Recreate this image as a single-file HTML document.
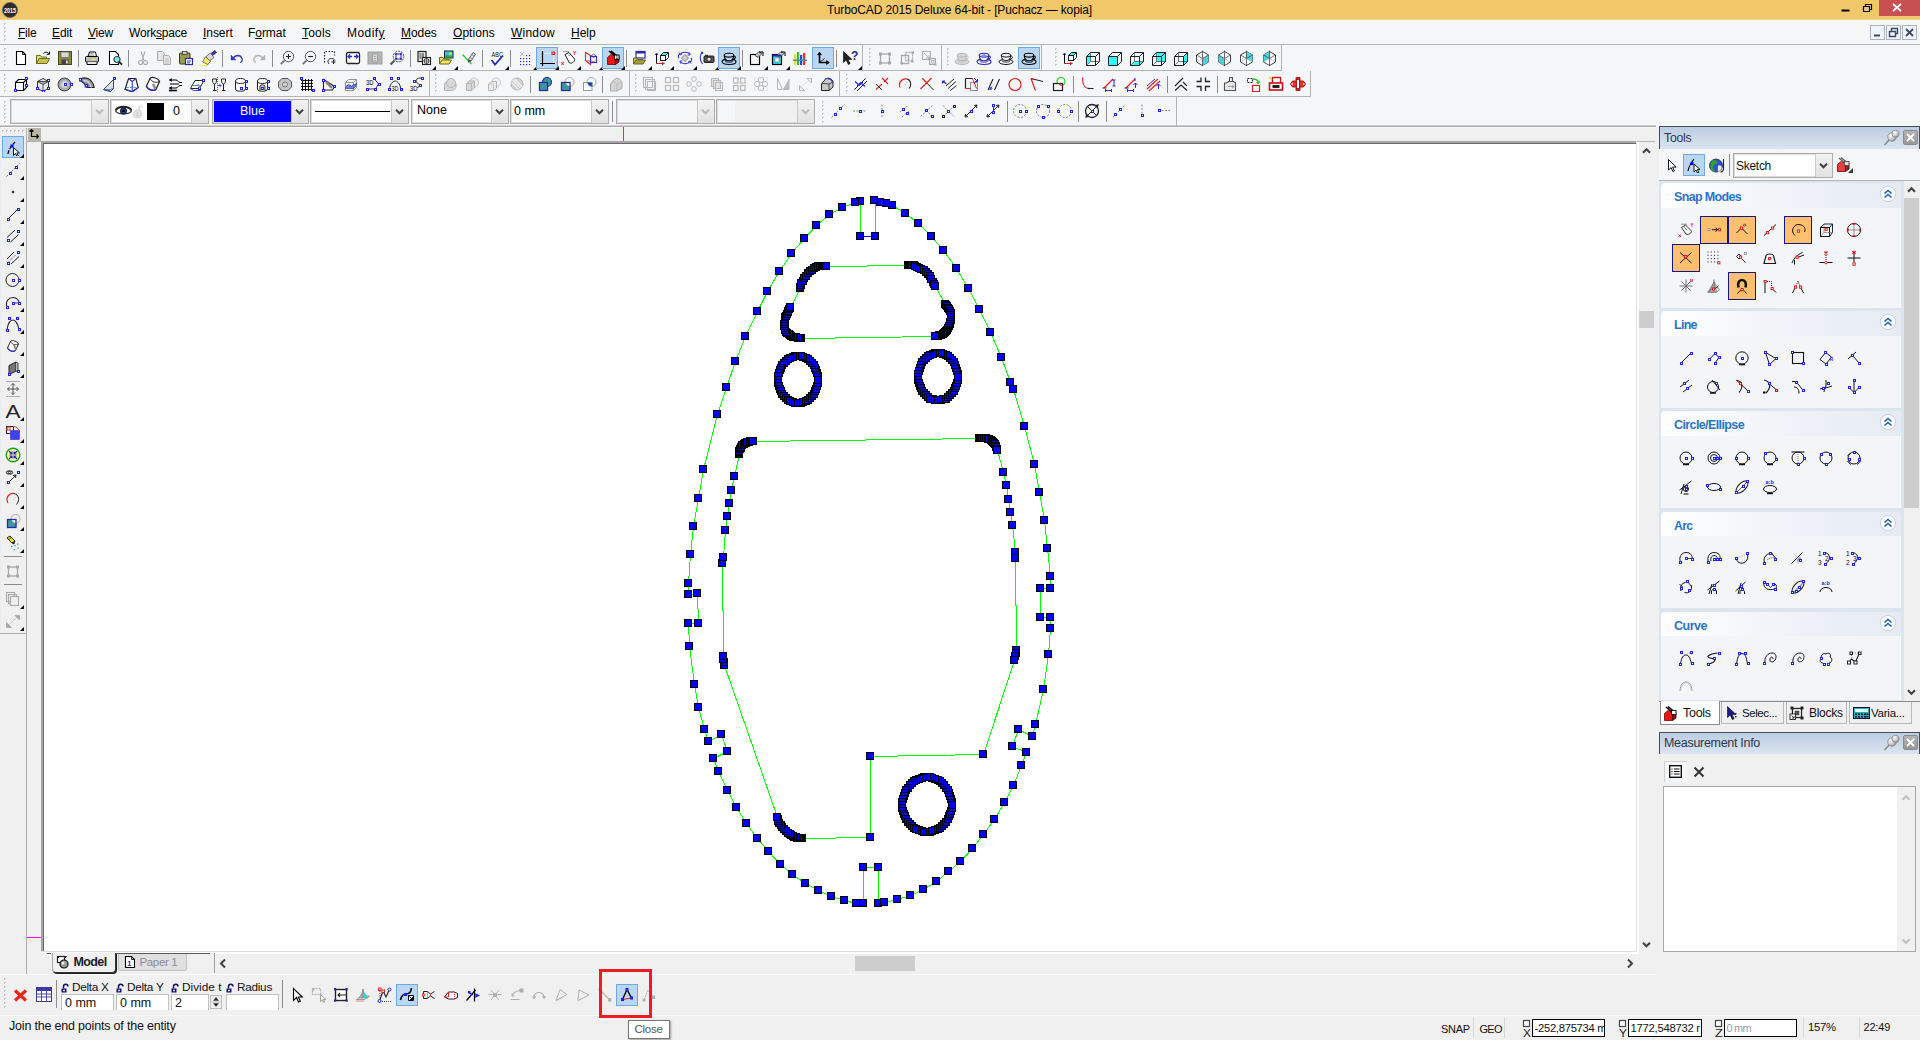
<!DOCTYPE html>
<html><head><meta charset="utf-8"><title>TurboCAD</title>
<style>
html,body{margin:0;padding:0;background:#f0f0f0;overflow:hidden}
body{width:1920px;height:1040px;position:relative;font-family:"Liberation Sans",sans-serif;font-size:12px;color:#000}
#r{position:absolute;left:0;top:0;width:1920px;height:1040px;overflow:hidden}
#r div,#r svg{position:absolute}
.t{line-height:15px}
u{text-decoration:underline}
</style></head><body><div id="r">
<div style="left:0px;top:0px;width:1920px;height:20px;background:#f0c869"></div>
<svg style="left:1px;top:0px" width="18" height="19" viewBox="0 0 18 19" ><circle cx="9" cy="10" r="7.6" fill="#2b2b2b"/><circle cx="9" cy="10" r="7.6" fill="none" stroke="#666" stroke-width=".8"/><text x="9" y="12.5" font-size="6.5" font-weight="bold" fill="#fff" text-anchor="middle" font-family="Liberation Sans" textLength="12" lengthAdjust="spacingAndGlyphs">2015</text></svg>
<div class="t" style="left:827px;top:2.5px;white-space:nowrap;font-size:12px;letter-spacing:-0.128px;color:#000">TurboCAD 2015 Deluxe 64-bit - [Puchacz — kopia]</div>
<div style="left:0px;top:19px;width:1920px;height:1px;background:#f2d48c"></div>
<div style="left:1879px;top:0px;width:41px;height:16px;background:#c75050"></div>
<svg style="left:1836px;top:0px" width="90" height="20" viewBox="0 0 90 20" ><path d="M5.5 10.5h8" stroke="#000" stroke-width="2" fill="none"/><path d="M27.5 6.5h6v5h-6z M29.5 6.5v-2h6v5h-2" stroke="#000" stroke-width="1.2" fill="none"/><path d="M57 4l8 7M65 4l-8 7" stroke="#fff" stroke-width="1.8" fill="none"/></svg>
<div style="left:0px;top:20px;width:1920px;height:25px;background:#f5f6f7"></div>
<div style="left:0px;top:44px;width:1920px;height:1px;background:#b4b4b4"></div>
<div class="t" style="left:18px;top:26px;white-space:nowrap;font-size:12px;letter-spacing:-0.234px;color:#000"><u>F</u>ile</div>
<div class="t" style="left:52px;top:26px;white-space:nowrap;font-size:12px;letter-spacing:-0.094px;color:#000"><u>E</u>dit</div>
<div class="t" style="left:88px;top:26px;white-space:nowrap;font-size:12px;letter-spacing:-0.198px;color:#000"><u>V</u>iew</div>
<div class="t" style="left:129px;top:26px;white-space:nowrap;font-size:12px;letter-spacing:-0.200px;color:#000">Work<u>s</u>pace</div>
<div class="t" style="left:203px;top:26px;white-space:nowrap;font-size:12px;letter-spacing:-0.052px;color:#000"><u>I</u>nsert</div>
<div class="t" style="left:248px;top:26px;white-space:nowrap;font-size:12px;letter-spacing:-0.051px;color:#000">F<u>o</u>rmat</div>
<div class="t" style="left:302px;top:26px;white-space:nowrap;font-size:12px;letter-spacing:0.197px;color:#000"><u>T</u>ools</div>
<div class="t" style="left:347px;top:26px;white-space:nowrap;font-size:12px;letter-spacing:0.443px;color:#000">Modif<u>y</u></div>
<div class="t" style="left:401px;top:26px;white-space:nowrap;font-size:12px;letter-spacing:-0.064px;color:#000"><u>M</u>odes</div>
<div class="t" style="left:453px;top:26px;white-space:nowrap;font-size:12px;letter-spacing:0.049px;color:#000"><u>O</u>ptions</div>
<div class="t" style="left:511px;top:26px;white-space:nowrap;font-size:12px;letter-spacing:0.220px;color:#000"><u>W</u>indow</div>
<div class="t" style="left:571px;top:26px;white-space:nowrap;font-size:12px;letter-spacing:0.005px;color:#000"><u>H</u>elp</div>
<div style="left:1870px;top:25px;width:15px;height:15px;background:#f0f3f8;border:1px solid #a9b4c4;box-sizing:border-box"></div>
<div style="left:1886px;top:25px;width:15px;height:15px;background:#f0f3f8;border:1px solid #a9b4c4;box-sizing:border-box"></div>
<div style="left:1902px;top:25px;width:15px;height:15px;background:#f0f3f8;border:1px solid #a9b4c4;box-sizing:border-box"></div>
<svg style="left:1870px;top:25px" width="48" height="15" viewBox="0 0 48 15" ><path d="M4 10.5h6" stroke="#3a4a60" stroke-width="2"/><path d="M19.5 6.5h6v5h-6z M21.5 6v-2.500h6v5h-2" stroke="#3a4a60" stroke-width="1.4" fill="none"/><path d="M36 4l7 7M43 4l-7 7" stroke="#3a4a60" stroke-width="1.8"/></svg>
<div style="left:0px;top:45px;width:1920px;height:82px;background:#f5f6f7"></div>
<div style="left:0px;top:70px;width:1282px;height:1px;background:#b4b4b4"></div>
<div style="left:0px;top:96px;width:1311px;height:1px;background:#b4b4b4"></div>
<div style="left:0px;top:125px;width:1656px;height:1px;background:#d0d0d0"></div>
<div style="left:0px;top:126px;width:1656px;height:1px;background:#acacac"></div>
<svg style="left:13px;top:50px" width="16" height="16" viewBox="0 0 16 16" ><path d="M3.500 1.500h6l3 3v10h-9z" stroke="#000" fill="#fff" stroke-width="1.1" /><path d="M9.500 1.500v3h3" stroke="#000" fill="none" stroke-width="0.9" /></svg>
<svg style="left:35px;top:50px" width="16" height="16" viewBox="0 0 16 16" ><path d="M1.500 13.500v-8h4l1 1.500h5v2" stroke="#6b6b20" fill="#e8e070" stroke-width="1" /><path d="M1.500 13.500l2.500-5h10.500l-2.500 5z" stroke="#6b6b20" fill="#c8c050" stroke-width="1" /><path d="M8.500 3.500c2-2 4.500-1.500 5.500 .5M14.500 1.500v2.800h-2.800" stroke="#000" fill="none" stroke-width="1" /></svg>
<svg style="left:57px;top:50px" width="16" height="16" viewBox="0 0 16 16" ><rect x="1.5" y="1.5" width="13" height="13" fill="#8b8b3a" stroke="#4a4a10" stroke-width="1" /><rect x="4" y="2" width="8" height="5.5" fill="#d8d8d8" stroke="#555" stroke-width="0.6" /><rect x="4.5" y="9.5" width="7" height="5" fill="#444" stroke="none" stroke-width="1" /><rect x="9" y="10.5" width="1.8" height="3" fill="#ddd" stroke="none" stroke-width="1" /></svg>
<div style="left:78px;top:50px;width:1px;height:17px;background:#8c8c8c"></div>
<svg style="left:84px;top:50px" width="16" height="16" viewBox="0 0 16 16" ><path d="M4 6.500l1.500-4.500h6l1 4.500" stroke="#000" fill="#fff" stroke-width="1" /><rect x="1.5" y="6.5" width="13" height="5.5" fill="#c0c0c0" stroke="#000" stroke-width="1" rx="1"/><path d="M3 12v2.500h10v-2.500" stroke="#000" fill="#e8e8e8" stroke-width="1" /><path d="M5.500 3.800h4M5.200 5.200h5" stroke="#777" fill="none" stroke-width="0.7" /><rect x="8" y="9" width="3" height="1" fill="#ff0" stroke="none" stroke-width="1" /></svg>
<svg style="left:107px;top:50px" width="16" height="16" viewBox="0 0 16 16" ><path d="M2.500 1.500h6l3 3v10h-9z" stroke="#000" fill="#fff" stroke-width="1.1" /><circle cx="10" cy="9.5" r="3" fill="#7fe8f0" stroke="#444" stroke-width="1.2" /><path d="M12.200 11.800l2.800 2.800" stroke="#222" fill="none" stroke-width="1.8" /></svg>
<div style="left:128px;top:50px;width:1px;height:17px;background:#8c8c8c"></div>
<svg style="left:135px;top:50px" width="16" height="16" viewBox="0 0 16 16" ><path d="M6 1.500l3 9M10 1.500l-3 9" stroke="#aaa" fill="none" stroke-width="1.1" /><circle cx="5.5" cy="12.5" r="2" fill="none" stroke="#aaa" stroke-width="1.1" /><circle cx="10.5" cy="12.5" r="2" fill="none" stroke="#aaa" stroke-width="1.1" /></svg>
<svg style="left:156px;top:50px" width="16" height="16" viewBox="0 0 16 16" ><path d="M1.500 1.500h5l2 2v7h-7z" stroke="#b0b0b0" fill="#e4e4e4" stroke-width="1" /><path d="M7.500 5.500h5l2 2v7h-7z" stroke="#b0b0b0" fill="#e4e4e4" stroke-width="1" /><path d="M9 9h4M9 11h4M9 13h4" stroke="#b8b8b8" fill="none" stroke-width="0.8" /></svg>
<svg style="left:178px;top:50px" width="16" height="16" viewBox="0 0 16 16" ><rect x="1.5" y="3" width="10.5" height="11" fill="#9a9a50" stroke="#3a3a10" stroke-width="1" rx="1"/><rect x="4.5" y="1.5" width="4.5" height="3" fill="#d0d0d0" stroke="#333" stroke-width="0.8" /><rect x="7.5" y="8.5" width="7" height="6" fill="#fff" stroke="#2a2ab0" stroke-width="1.2" /><path d="M9 11h4M9 12.800h3" stroke="#2a2ab0" fill="none" stroke-width="0.9" /></svg>
<svg style="left:201px;top:50px" width="16" height="16" viewBox="0 0 16 16" ><path d="M10 3.500l4-3 1.500 2-4 3z" stroke="#1a1a80" fill="#3a3aa0" stroke-width="0.8" /><path d="M5 6.500l4.500-3.500 3.500 4.500-4.500 3.500z" stroke="#555" fill="#ddd" stroke-width="0.8" /><path d="M4.500 7l-3 5 5.500 2.500 2.500-3.500z" stroke="#555" fill="#f8f060" stroke-width="0.8" /><path d="M1 15.500h5" stroke="#ee0" fill="none" stroke-width="1" stroke-dasharray="1 1"/></svg>
<div style="left:222px;top:50px;width:1px;height:17px;background:#8c8c8c"></div>
<svg style="left:229px;top:50px" width="16" height="16" viewBox="0 0 16 16" ><path d="M4 8.500c2.500-4 7.500-4 9 0 .6 2-.5 3.500-2 4" stroke="#3838c8" fill="none" stroke-width="1.3" /><path d="M2 5v5h5z" stroke="#3838c8" fill="#3838c8" stroke-width="0.4" /></svg>
<svg style="left:251px;top:50px" width="16" height="16" viewBox="0 0 16 16" ><path d="M12 8.500c-2.500-4-7.500-4-9 0-.6 2 .5 3.500 2 4" stroke="#b4b4b4" fill="none" stroke-width="1.3" /><path d="M14 5v5h-5z" stroke="#b4b4b4" fill="#b4b4b4" stroke-width="0.4" /></svg>
<div style="left:272px;top:50px;width:1px;height:17px;background:#8c8c8c"></div>
<svg style="left:279px;top:50px" width="16" height="16" viewBox="0 0 16 16" ><circle cx="9.5" cy="6.5" r="5.2" fill="#f5f6f7" stroke="#444" stroke-width="0.9" /><path d="M5.600 10.400l-3.800 3.800" stroke="#777" fill="none" stroke-width="1.9" /><path d="M7 6.500h5M9.500 4v5" stroke="#222" fill="none" stroke-width="1.1" /></svg>
<svg style="left:301px;top:50px" width="16" height="16" viewBox="0 0 16 16" ><circle cx="9.5" cy="6.5" r="5.2" fill="#f5f6f7" stroke="#444" stroke-width="0.9" /><path d="M5.600 10.400l-3.800 3.800" stroke="#777" fill="none" stroke-width="1.9" /><path d="M7 6.500h5" stroke="#222" fill="none" stroke-width="1.1" /></svg>
<svg style="left:323px;top:50px" width="16" height="16" viewBox="0 0 16 16" ><path d="M1.500 12.500v-11h10v4" stroke="#222" fill="none" stroke-width="1.2" stroke-dasharray="1.500 1.500"/><path d="M6 14c-2-2-1-5.500 2.500-5.500 2 0 3 1 3.500 2M10.500 10v4M8.500 12h4" stroke="#222" fill="none" stroke-width="1" /></svg>
<svg style="left:345px;top:50px" width="16" height="16" viewBox="0 0 16 16" ><rect x="1.5" y="2.5" width="13" height="11" fill="#fff" stroke="#222" stroke-width="1.3" rx="1.500"/><path d="M3 6.500h4M9 6.500h4M5 4.500l-2 2 2 2M11 4.500l2 2-2 2" stroke="#2a2ad0" fill="none" stroke-width="1.3" /></svg>
<svg style="left:367px;top:50px" width="16" height="16" viewBox="0 0 16 16" ><rect x="1" y="2" width="14" height="12" fill="#b4b4b4" stroke="#a0a0a0" stroke-width="1" /><rect x="5.5" y="4" width="5" height="8" fill="#d8d8d8" stroke="#999" stroke-width="0.8" /><path d="M7 6.500h2M7 8.500h2M7 10.500h2" stroke="#999" fill="none" stroke-width="0.7" /></svg>
<svg style="left:389px;top:50px" width="16" height="16" viewBox="0 0 16 16" ><circle cx="9.5" cy="6.5" r="5.3" fill="#f5f6f7" stroke="#444" stroke-width="1" stroke-dasharray="2 1"/><path d="M5.500 10.500l-4 4" stroke="#555" fill="none" stroke-width="2.2" /><rect x="7" y="4" width="5" height="5" fill="none" stroke="#3030c0" stroke-width="1.1" /><rect x="6.2" y="3.2" width="1.8" height="1.8" fill="#3030c0" stroke="none" stroke-width="1" /><rect x="11" y="3.2" width="1.8" height="1.8" fill="#3030c0" stroke="none" stroke-width="1" /><rect x="6.2" y="8" width="1.8" height="1.8" fill="#3030c0" stroke="none" stroke-width="1" /><rect x="11" y="8" width="1.8" height="1.8" fill="#3030c0" stroke="none" stroke-width="1" /></svg>
<div style="left:410px;top:50px;width:1px;height:17px;background:#8c8c8c"></div>
<svg style="left:416px;top:50px" width="16" height="16" viewBox="0 0 16 16" ><rect x="2" y="1.5" width="8" height="10" fill="#e8e8e8" stroke="#222" stroke-width="1.2" /><path d="M3.500 4h2M3.500 6h2M3.500 8h2M7 3v7" stroke="#222" fill="none" stroke-width="1" /><rect x="6.5" y="7.5" width="8" height="7" fill="#f0f0f0" stroke="#222" stroke-width="1.1" /><circle cx="10.5" cy="11" r="2.5" fill="none" stroke="#222" stroke-width="0.9" /><path d="M8 11h5M10.500 8.500v5" stroke="#222" fill="none" stroke-width="0.6" /></svg>
<svg style="left:432px;top:66px" width="4" height="4" viewBox="0 0 4 4" ><path d="M4 0v4h-4z" fill="#000"/></svg>
<svg style="left:438px;top:50px" width="16" height="16" viewBox="0 0 16 16" ><rect x="6.5" y="1" width="8.5" height="7" fill="#30c8e8" stroke="#222" stroke-width="1" /><circle cx="12.5" cy="3.5" r="1.2" fill="#f0e040" stroke="none" stroke-width="1" /><path d="M7 7.500l2.500-3 2 2 1.500-1 1.500 2z" stroke="#30a030" fill="#30a030" stroke-width="0.3" /><path d="M1.500 14v-6.500h3.500l1 1.500h5v1" stroke="#6b6b20" fill="#e8e070" stroke-width="1" /><path d="M1.500 14l2.500-4h9.500l-2.500 4z" stroke="#6b6b20" fill="#f0e868" stroke-width="1" /></svg>
<svg style="left:454px;top:66px" width="4" height="4" viewBox="0 0 4 4" ><path d="M4 0v4h-4z" fill="#000"/></svg>
<svg style="left:461px;top:50px" width="16" height="16" viewBox="0 0 16 16" ><path d="M1.500 4.500l9 9.500" stroke="#20d020" fill="none" stroke-width="1.2" /><path d="M7.500 9.500l4.500-7 2.500 1.600-4.500 7z" stroke="#555" fill="#e8e8e8" stroke-width="0.9" /><path d="M9 7.500l2.500 1.600M11 4.500l2.500 1.600" stroke="#666" fill="none" stroke-width="0.7" /><path d="M7.500 9.500l-.3 2.800 2.800-1.200" stroke="#444" fill="#444" stroke-width="0.5" /></svg>
<div style="left:482px;top:50px;width:1px;height:17px;background:#8c8c8c"></div>
<svg style="left:489px;top:50px" width="16" height="16" viewBox="0 0 16 16" ><text x="2.5" y="6.5" font-size="6.5" fill="#111" font-family="Liberation Sans" textLength="11.500" lengthAdjust="spacingAndGlyphs">ABC</text><path d="M2.500 10l3.500 4.500 8-9" stroke="#2a2ab0" fill="none" stroke-width="1.8" /></svg>
<svg style="left:505px;top:66px" width="4" height="4" viewBox="0 0 4 4" ><path d="M4 0v4h-4z" fill="#000"/></svg>
<div style="left:510px;top:50px;width:1px;height:17px;background:#8c8c8c"></div>
<svg style="left:517px;top:50px" width="16" height="16" viewBox="0 0 16 16" ><path d="M3 2l4 4M7 2l-4 4" stroke="#a8b8d8" fill="none" stroke-width="1" /><rect x="3" y="8" width="1.2" height="1.2" fill="#2a2ad0" stroke="none" stroke-width="1" /><rect x="3" y="11" width="1.2" height="1.2" fill="#2a2ad0" stroke="none" stroke-width="1" /><rect x="3" y="14" width="1.2" height="1.2" fill="#2a2ad0" stroke="none" stroke-width="1" /><rect x="6" y="8" width="1.2" height="1.2" fill="#2a2ad0" stroke="none" stroke-width="1" /><rect x="6" y="11" width="1.2" height="1.2" fill="#2a2ad0" stroke="none" stroke-width="1" /><rect x="6" y="14" width="1.2" height="1.2" fill="#2a2ad0" stroke="none" stroke-width="1" /><rect x="9" y="8" width="1.2" height="1.2" fill="#2a2ad0" stroke="none" stroke-width="1" /><rect x="9" y="11" width="1.2" height="1.2" fill="#2a2ad0" stroke="none" stroke-width="1" /><rect x="9" y="14" width="1.2" height="1.2" fill="#2a2ad0" stroke="none" stroke-width="1" /><rect x="12" y="8" width="1.2" height="1.2" fill="#2a2ad0" stroke="none" stroke-width="1" /><rect x="12" y="11" width="1.2" height="1.2" fill="#2a2ad0" stroke="none" stroke-width="1" /><rect x="12" y="14" width="1.2" height="1.2" fill="#2a2ad0" stroke="none" stroke-width="1" /><rect x="9" y="5" width="1.2" height="1.2" fill="#2a2ad0" stroke="none" stroke-width="1" /><rect x="12" y="5" width="1.2" height="1.2" fill="#2a2ad0" stroke="none" stroke-width="1" /></svg>
<svg style="left:533px;top:66px" width="4" height="4" viewBox="0 0 4 4" ><path d="M4 0v4h-4z" fill="#000"/></svg>
<div style="left:536px;top:47px;width:22px;height:22px;background:#b9d7f3;border:1px solid #6ea9e6;box-sizing:border-box"></div>
<svg style="left:539px;top:50px" width="16" height="16" viewBox="0 0 16 16" ><path d="M3.500 1v15M1 13.500h15" stroke="#000" fill="none" stroke-width="1.2" /><path d="M5.500 3.500h7M14.500 5.500v7" stroke="#fff" fill="none" stroke-width="1" stroke-dasharray="1 1"/><rect x="13" y="2" width="2.5" height="2.5" fill="#fff" stroke="#e01010" stroke-width="1" /></svg>
<svg style="left:555px;top:66px" width="4" height="4" viewBox="0 0 4 4" ><path d="M4 0v4h-4z" fill="#000"/></svg>
<svg style="left:561px;top:50px" width="16" height="16" viewBox="0 0 16 16" ><path d="M4 4.500l4-2 5.500 6.500c1 2-2.500 5-5 4z" stroke="#222" fill="#fff" stroke-width="1" /><path d="M2.500 1.500h5.500M6.500 3.500l2.500 3" stroke="#222" fill="none" stroke-width="0.8" stroke-dasharray="1 1"/><text x="12" y="4.5" font-size="5" fill="#e01010" font-family="Liberation Sans" font-weight="bold">Y</text><text x="0" y="15" font-size="6" fill="#e01010" font-family="Liberation Sans" font-weight="bold">x</text></svg>
<svg style="left:577px;top:66px" width="4" height="4" viewBox="0 0 4 4" ><path d="M4 0v4h-4z" fill="#000"/></svg>
<svg style="left:583px;top:50px" width="16" height="16" viewBox="0 0 16 16" ><path d="M2.500 2.500l5 3v9l-5-4z" stroke="#e03030" fill="none" stroke-width="1.1" /><path d="M2.500 2.500l9 5.500M2.500 10.500l9 1" stroke="#e03030" fill="none" stroke-width="0.7" /><rect x="7.5" y="6.5" width="6" height="6" fill="none" stroke="#3030c0" stroke-width="1.2" /><path d="M7.500 6.500l3-2.500M13.500 6.500l-3-2.500" stroke="#3030c0" fill="none" stroke-width="0.8" /></svg>
<svg style="left:599px;top:66px" width="4" height="4" viewBox="0 0 4 4" ><path d="M4 0v4h-4z" fill="#000"/></svg>
<div style="left:602px;top:47px;width:22px;height:22px;background:#b9d7f3;border:1px solid #6ea9e6;box-sizing:border-box"></div>
<svg style="left:605px;top:50px" width="16" height="16" viewBox="0 0 16 16" ><path d="M2.500 7.500l4-3.500 4 3.500v7h-8z" stroke="#700" fill="#e81818" stroke-width="0.8" /><path d="M10.500 7.500l3.500-2v6.500l-3.500 2.500z" stroke="#400" fill="#901010" stroke-width="0.8" /><path d="M4 1l7 6M6 1l6 5" stroke="#000" fill="none" stroke-width="1.6" /><rect x="9.5" y="5" width="4.5" height="4.5" fill="#fff" stroke="#000" stroke-width="0.9" /><text x="10.6" y="9" font-size="4.5" fill="#000" font-family="Liberation Sans" font-weight="bold">1</text></svg>
<svg style="left:621px;top:66px" width="4" height="4" viewBox="0 0 4 4" ><path d="M4 0v4h-4z" fill="#000"/></svg>
<div style="left:626px;top:50px;width:1px;height:17px;background:#8c8c8c"></div>
<svg style="left:632px;top:50px" width="16" height="16" viewBox="0 0 16 16" ><rect x="4" y="1.5" width="9" height="6.5" fill="#fff" stroke="#2a2ab0" stroke-width="1.2" /><rect x="4" y="1.5" width="9" height="2" fill="#2a2ab0" stroke="none" stroke-width="1" /><path d="M1.500 14v-6h3.500l1 1.500h5" stroke="#6b6b20" fill="#c8c050" stroke-width="1" /><path d="M1.500 14l2.500-4h9.500l-2.500 4z" stroke="#6b6b20" fill="#a8a040" stroke-width="1" /></svg>
<svg style="left:648px;top:66px" width="4" height="4" viewBox="0 0 4 4" ><path d="M4 0v4h-4z" fill="#000"/></svg>
<svg style="left:654px;top:50px" width="16" height="16" viewBox="0 0 16 16" ><path d="M6.500 5.500l3-3h5l-3 3z" stroke="#000" fill="#3ff" stroke-width="0.9" /><path d="M6.500 5.500h5v5h-5zM14.500 2.500v5l-3 3" stroke="#000" fill="#fff" stroke-width="0.9" /><path d="M2.500 3v10.500h8" stroke="#000" fill="none" stroke-width="1" /><path d="M2.500 3l-1.500 2M2.500 3l1.500 2" stroke="#3030d0" fill="none" stroke-width="1" /><path d="M2.500 13.500h7M8 12l2 1.500-2 1.500" stroke="#d02020" fill="none" stroke-width="1" /></svg>
<svg style="left:670px;top:66px" width="4" height="4" viewBox="0 0 4 4" ><path d="M4 0v4h-4z" fill="#000"/></svg>
<svg style="left:677px;top:50px" width="16" height="16" viewBox="0 0 16 16" ><path d="M8 4.500l3.500 3.500-3.500 3.500-3.500-3.500z" stroke="#666" fill="#d0d0d0" stroke-width="0.8" /><path d="M3 4.500c2-3 8-3 10 0M13 11.500c-2 3-8 3-10 0M2 8c-1-1-1-3 1-4M14 8c1 1 1 3-1 4" stroke="#3030e0" fill="none" stroke-width="1.1" /><path d="M2 2.500l1 2.500 2-1M14 13.500l-1-2.500-2 1M12.500 2.500l.5 2.500-2.500 0M3.500 13.500l-.5-2.500 2.500 0" stroke="#3030e0" fill="none" stroke-width="0.9" /></svg>
<svg style="left:693px;top:66px" width="4" height="4" viewBox="0 0 4 4" ><path d="M4 0v4h-4z" fill="#000"/></svg>
<svg style="left:699px;top:50px" width="16" height="16" viewBox="0 0 16 16" ><path d="M3.500 2c-3 3-3 8 0 12M3.500 2l-1.500 .5M3.500 2l.3 1.800" stroke="#3030e0" fill="none" stroke-width="1.1" /><rect x="5" y="6" width="10" height="6.5" fill="#555" stroke="#111" stroke-width="0.9" rx="1"/><circle cx="10" cy="9.2" r="2.2" fill="#ddd" stroke="#111" stroke-width="0.9" /><rect x="6" y="4.8" width="3" height="1.5" fill="#333" stroke="none" stroke-width="1" /></svg>
<svg style="left:715px;top:66px" width="4" height="4" viewBox="0 0 4 4" ><path d="M4 0v4h-4z" fill="#000"/></svg>
<div style="left:718px;top:47px;width:22px;height:22px;background:#b9d7f3;border:1px solid #6ea9e6;box-sizing:border-box"></div>
<svg style="left:721px;top:50px" width="16" height="16" viewBox="0 0 16 16" ><ellipse cx="8" cy="11.8" rx="7" ry="2.7" fill="#b9d7f3" stroke="#000" stroke-width="1.1" /><ellipse cx="8" cy="10.8" rx="4" ry="1.4" fill="#b9d7f3" stroke="#000" stroke-width="0.88" /><path d="M3.300 5.200c0 3 1.500 5.500 4.700 5.500s4.700-2.500 4.700-5.500z" stroke="#000" fill="#b9d7f3" stroke-width="1.1" /><ellipse cx="8" cy="5.2" rx="4.7" ry="1.9" fill="#b9d7f3" stroke="#000" stroke-width="1.1" /><path d="M12.500 6.200c2.600-.6 2.600 2.700-.8 3.200" stroke="#000" fill="none" stroke-width="1.1" /></svg>
<svg style="left:737px;top:66px" width="4" height="4" viewBox="0 0 4 4" ><path d="M4 0v4h-4z" fill="#000"/></svg>
<div style="left:742px;top:50px;width:1px;height:17px;background:#8c8c8c"></div>
<svg style="left:748px;top:50px" width="16" height="16" viewBox="0 0 16 16" ><rect x="2.5" y="4.5" width="9" height="10" fill="#fff" stroke="#000" stroke-width="1.2" /><path d="M7 5.500l4-4 3 2-4 4z" stroke="#333" fill="#aaa" stroke-width="0.8" /><path d="M8 4.500l3 2M9.500 3l3 2" stroke="#fff" fill="none" stroke-width="0.6" /><path d="M11 2h4v4" stroke="#000" fill="none" stroke-width="1" /></svg>
<svg style="left:764px;top:66px" width="4" height="4" viewBox="0 0 4 4" ><path d="M4 0v4h-4z" fill="#000"/></svg>
<svg style="left:770px;top:50px" width="16" height="16" viewBox="0 0 16 16" ><rect x="2.5" y="4.5" width="9" height="10" fill="#30d8e8" stroke="#000" stroke-width="1.2" /><rect x="5" y="8" width="4" height="4" fill="#fff" stroke="#888" stroke-width="0.6" /><path d="M7 5.500l4-4 3 2-4 4z" stroke="#333" fill="#bbb" stroke-width="0.8" /><path d="M8 4.500l3 2M9.500 3l3 2" stroke="#fff" fill="none" stroke-width="0.6" /><path d="M11 2h4v4" stroke="#000" fill="none" stroke-width="1" /><rect x="2.5" y="4.5" width="9" height="2" fill="#2a2ab0" stroke="none" stroke-width="1" /></svg>
<svg style="left:786px;top:66px" width="4" height="4" viewBox="0 0 4 4" ><path d="M4 0v4h-4z" fill="#000"/></svg>
<svg style="left:792px;top:50px" width="16" height="16" viewBox="0 0 16 16" ><rect x="2" y="4" width="2.2" height="11" fill="#e8e030" stroke="none" stroke-width="1" /><rect x="5" y="2" width="2.2" height="13" fill="#30c030" stroke="none" stroke-width="1" /><rect x="8" y="5" width="2.2" height="10" fill="#3040e0" stroke="none" stroke-width="1" /><rect x="11" y="3" width="2.2" height="12" fill="#e83030" stroke="none" stroke-width="1" /><rect x="1" y="9.5" width="14" height="1.5" fill="#30a0a0" stroke="none" stroke-width="1" /></svg>
<div style="left:812px;top:47px;width:22px;height:22px;background:#b9d7f3;border:1px solid #6ea9e6;box-sizing:border-box"></div>
<svg style="left:815px;top:50px" width="16" height="16" viewBox="0 0 16 16" ><path d="M4.500 3v9.500h9" stroke="#000" fill="none" stroke-width="1.6" /><path d="M2.500 5l2-3 2 3zM11.500 10.500l3 2-3 2z" stroke="#000" fill="#000" stroke-width="0.5" /><path d="M4.500 12.500l5-4" stroke="#000" fill="none" stroke-width="0.8" /></svg>
<div style="left:836px;top:50px;width:1px;height:17px;background:#8c8c8c"></div>
<svg style="left:842px;top:50px" width="16" height="16" viewBox="0 0 16 16" ><path d="M1.500 1.500v11l2.800-2.500 2 4.500 1.800-.8-2-4.300h3.800z" stroke="#000" fill="#222" stroke-width="0.6" /><text x="9" y="10" font-size="12" fill="#2a2a90" font-family="Liberation Sans" font-weight="bold">?</text></svg>
<svg style="left:858px;top:66px" width="4" height="4" viewBox="0 0 4 4" ><path d="M4 0v4h-4z" fill="#000"/></svg>
<svg style="left:877px;top:50px" width="16" height="16" viewBox="0 0 16 16" ><rect x="3.5" y="4" width="9" height="9" fill="none" stroke="#a8a8a8" stroke-width="1.3" /><rect x="2" y="2.5" width="3" height="3" fill="#a8a8a8" stroke="none" stroke-width="1" /><rect x="11" y="2.5" width="3" height="3" fill="#a8a8a8" stroke="none" stroke-width="1" /><rect x="2" y="11.5" width="3" height="3" fill="#a8a8a8" stroke="none" stroke-width="1" /><rect x="11" y="11.5" width="3" height="3" fill="#a8a8a8" stroke="none" stroke-width="1" /></svg>
<svg style="left:899px;top:50px" width="16" height="16" viewBox="0 0 16 16" ><rect x="2.5" y="5.5" width="7" height="8" fill="none" stroke="#a8a8a8" stroke-width="1.3" /><rect x="6.5" y="2.5" width="7" height="8" fill="none" stroke="#a8a8a8" stroke-width="1.3" stroke-dasharray="2 1"/><rect x="1.5" y="12" width="2.5" height="2.5" fill="#a8a8a8" stroke="none" stroke-width="1" /><rect x="12.5" y="1.5" width="2.5" height="2.5" fill="#a8a8a8" stroke="none" stroke-width="1" /><rect x="12" y="10" width="2.5" height="2.5" fill="#a8a8a8" stroke="none" stroke-width="1" /></svg>
<svg style="left:921px;top:50px" width="16" height="16" viewBox="0 0 16 16" ><rect x="1.5" y="1.5" width="8" height="8" fill="none" stroke="#b0b0b0" stroke-width="1.1" /><path d="M3 3l5 5M8 5v3h-3" stroke="#b0b0b0" fill="none" stroke-width="1" /><rect x="8.5" y="8.5" width="6" height="6" fill="none" stroke="#a8a8a8" stroke-width="1.1" /><rect x="7.5" y="7.5" width="2" height="2" fill="#a8a8a8" stroke="none" stroke-width="1" /><rect x="13.5" y="13.5" width="2" height="2" fill="#a8a8a8" stroke="none" stroke-width="1" /><rect x="10.5" y="10.5" width="2.5" height="2.5" fill="none" stroke="#a8a8a8" stroke-width="0.8" /></svg>
<svg style="left:954px;top:50px" width="16" height="16" viewBox="0 0 16 16" ><ellipse cx="8" cy="11.8" rx="7" ry="2.7" fill="#d8d8d8" stroke="#b8b8b8" stroke-width="1" /><ellipse cx="8" cy="10.8" rx="4" ry="1.4" fill="#d8d8d8" stroke="#b8b8b8" stroke-width="0.8" /><path d="M3.300 5.200c0 3 1.500 5.500 4.700 5.500s4.700-2.500 4.700-5.500z" stroke="#b8b8b8" fill="#d8d8d8" stroke-width="1" /><ellipse cx="8" cy="5.2" rx="4.7" ry="1.9" fill="#d8d8d8" stroke="#b8b8b8" stroke-width="1" /><path d="M12.500 6.200c2.600-.6 2.600 2.700-.8 3.200" stroke="#b8b8b8" fill="none" stroke-width="1" /></svg>
<svg style="left:976px;top:50px" width="16" height="16" viewBox="0 0 16 16" ><ellipse cx="8" cy="11.8" rx="7" ry="2.7" fill="#f5f6f7" stroke="#2a2ab0" stroke-width="1.1" /><ellipse cx="8" cy="10.8" rx="4" ry="1.4" fill="#f5f6f7" stroke="#2a2ab0" stroke-width="0.88" /><path d="M3.300 5.200c0 3 1.500 5.500 4.700 5.500s4.700-2.500 4.700-5.500z" stroke="#2a2ab0" fill="#f5f6f7" stroke-width="1.1" /><ellipse cx="8" cy="5.2" rx="4.7" ry="1.9" fill="#f5f6f7" stroke="#2a2ab0" stroke-width="1.1" /><path d="M12.500 6.200c2.600-.6 2.600 2.700-.8 3.200" stroke="#2a2ab0" fill="none" stroke-width="1.1" /><ellipse cx="8" cy="5.2" rx="3" ry="0.9" fill="#9090e8" stroke="none" stroke-width="1" /></svg>
<svg style="left:998px;top:50px" width="16" height="16" viewBox="0 0 16 16" ><ellipse cx="8" cy="11.8" rx="7" ry="2.7" fill="#f5f6f7" stroke="#000" stroke-width="0.9" /><ellipse cx="8" cy="10.8" rx="4" ry="1.4" fill="#f5f6f7" stroke="#000" stroke-width="0.72" /><path d="M3.300 5.200c0 3 1.500 5.500 4.700 5.500s4.700-2.500 4.700-5.500z" stroke="#000" fill="#f5f6f7" stroke-width="0.9" /><ellipse cx="8" cy="5.2" rx="4.7" ry="1.9" fill="#f5f6f7" stroke="#000" stroke-width="0.9" /><path d="M12.500 6.200c2.600-.6 2.600 2.700-.8 3.200" stroke="#000" fill="none" stroke-width="0.9" /></svg>
<div style="left:1018px;top:47px;width:22px;height:22px;background:#b9d7f3;border:1px solid #6ea9e6;box-sizing:border-box"></div>
<svg style="left:1021px;top:50px" width="16" height="16" viewBox="0 0 16 16" ><ellipse cx="8" cy="11.8" rx="7" ry="2.7" fill="#b9d7f3" stroke="#000" stroke-width="1.1" /><ellipse cx="8" cy="10.8" rx="4" ry="1.4" fill="#b9d7f3" stroke="#000" stroke-width="0.88" /><path d="M3.300 5.200c0 3 1.500 5.500 4.700 5.500s4.700-2.500 4.700-5.500z" stroke="#000" fill="#b9d7f3" stroke-width="1.1" /><ellipse cx="8" cy="5.2" rx="4.7" ry="1.9" fill="#b9d7f3" stroke="#000" stroke-width="1.1" /><path d="M12.500 6.200c2.600-.6 2.600 2.700-.8 3.200" stroke="#000" fill="none" stroke-width="1.1" /></svg>
<svg style="left:1062px;top:50px" width="16" height="16" viewBox="0 0 16 16" ><path d="M6.500 5.500l3-3h5l-3 3z" stroke="#000" fill="#3ff" stroke-width="0.9" /><path d="M6.500 5.500h5v5h-5zM14.500 2.500v5l-3 3" stroke="#000" fill="#fff" stroke-width="0.9" /><path d="M2.500 3v10.500h8" stroke="#000" fill="none" stroke-width="1" /><path d="M2.500 3l-1.500 2M2.500 3l1.500 2" stroke="#3030d0" fill="none" stroke-width="1" /><path d="M2.500 13.500h7M8 12l2 1.500-2 1.500" stroke="#d02020" fill="none" stroke-width="1" /></svg>
<svg style="left:1084px;top:50px" width="16" height="16" viewBox="0 0 16 16" ><path d="M2.500 6.500l4-4v9l-4 4z" stroke="none" fill="#3ff" stroke-width="1" /><path d="M6.500 2.500v9h9M6.500 11.500l-4 4" stroke="#444" fill="none" stroke-width="0.7" /><path d="M2.500 6.500h9v9h-9zM2.500 6.500l4-4h9l-4 4M15.500 2.500v9l-4 4" stroke="#222" fill="none" stroke-width="1" /></svg>
<svg style="left:1106px;top:50px" width="16" height="16" viewBox="0 0 16 16" ><path d="M2.500 6.500h9v9h-9z" stroke="none" fill="#3ff" stroke-width="1" /><path d="M2.500 6.500h9v9h-9zM2.500 6.500l4-4h9l-4 4M15.500 2.500v9l-4 4" stroke="#222" fill="none" stroke-width="1" /></svg>
<svg style="left:1128px;top:50px" width="16" height="16" viewBox="0 0 16 16" ><path d="M2.500 15.500l4-4h9l-4 4z" stroke="none" fill="#3ff" stroke-width="1" /><path d="M6.500 2.500v9h9M6.500 11.500l-4 4" stroke="#444" fill="none" stroke-width="0.7" /><path d="M2.500 6.500h9v9h-9zM2.500 6.500l4-4h9l-4 4M15.500 2.500v9l-4 4" stroke="#222" fill="none" stroke-width="1" /></svg>
<svg style="left:1150px;top:50px" width="16" height="16" viewBox="0 0 16 16" ><path d="M6.500 2.500h9v9h-9z" stroke="none" fill="#3ff" stroke-width="1" /><path d="M6.500 2.500v9h9M6.500 11.500l-4 4" stroke="#444" fill="none" stroke-width="0.7" /><path d="M2.500 6.500h9v9h-9zM2.500 6.500l4-4h9l-4 4M15.500 2.500v9l-4 4" stroke="#222" fill="none" stroke-width="1" /></svg>
<svg style="left:1172px;top:50px" width="16" height="16" viewBox="0 0 16 16" ><path d="M11.500 6.500l4-4v9l-4 4z" stroke="none" fill="#3ff" stroke-width="1" /><path d="M6.500 2.500v9h9M6.500 11.500l-4 4" stroke="#444" fill="none" stroke-width="0.7" /><path d="M2.500 6.500h9v9h-9zM2.500 6.500l4-4h9l-4 4M15.500 2.500v9l-4 4" stroke="#222" fill="none" stroke-width="1" /></svg>
<svg style="left:1194px;top:50px" width="16" height="16" viewBox="0 0 16 16" ><path d="M8.500 1.500l6 3.500v7l-6 3.500-6-3.500v-7z" stroke="#333" fill="#fff" stroke-width="0.9" /><path d="M8.500 8.500l6-3.500v7l-6 3.500z" stroke="none" fill="#4cd4dc" stroke-width="1" /><path d="M8.500 0.500v15.500M2.500 5l6 3.500 6-3.500" stroke="#333" fill="none" stroke-width="0.7" /><path d="M2.500 12l6-3.500 6 3.500" stroke="#999" fill="none" stroke-width="0.5" /></svg>
<svg style="left:1216px;top:50px" width="16" height="16" viewBox="0 0 16 16" ><path d="M8.500 1.500l6 3.500v7l-6 3.500-6-3.500v-7z" stroke="#333" fill="#fff" stroke-width="0.9" /><path d="M8.500 8.500l-6-3.500v7l6 3.500z" stroke="none" fill="#4cd4dc" stroke-width="1" /><path d="M8.500 0.500v15.500M2.500 5l6 3.500 6-3.500" stroke="#333" fill="none" stroke-width="0.7" /><path d="M2.500 12l6-3.500 6 3.500" stroke="#999" fill="none" stroke-width="0.5" /></svg>
<svg style="left:1238px;top:50px" width="16" height="16" viewBox="0 0 16 16" ><path d="M8.500 1.500l6 3.500v7l-6 3.500-6-3.500v-7z" stroke="#333" fill="#fff" stroke-width="0.9" /><path d="M8.500 1.500l6 3.500v7l-6-3.500z" stroke="none" fill="#4cd4dc" stroke-width="1" /><path d="M8.500 0.500v15.500M2.500 5l6 3.500 6-3.500" stroke="#333" fill="none" stroke-width="0.7" /><path d="M2.500 12l6-3.500 6 3.500" stroke="#999" fill="none" stroke-width="0.5" /></svg>
<svg style="left:1261px;top:50px" width="16" height="16" viewBox="0 0 16 16" ><path d="M8.500 1.500l6 3.500v7l-6 3.500-6-3.500v-7z" stroke="#333" fill="#fff" stroke-width="0.9" /><path d="M8.500 1.500l-6 3.500v7l6-3.500z" stroke="none" fill="#4cd4dc" stroke-width="1" /><path d="M8.500 0.500v15.500M2.500 5l6 3.500 6-3.500" stroke="#333" fill="none" stroke-width="0.7" /><path d="M2.500 12l6-3.500 6 3.500" stroke="#999" fill="none" stroke-width="0.5" /></svg>
<div style="left:862px;top:45px;width:1px;height:26px;background:#b4b4b4"></div>
<div style="left:941px;top:45px;width:1px;height:26px;background:#b4b4b4"></div>
<div style="left:1041px;top:45px;width:1px;height:26px;background:#b4b4b4"></div>
<div style="left:1281px;top:45px;width:1px;height:26px;background:#b4b4b4"></div>
<svg style="left:13px;top:76px" width="16" height="16" viewBox="0 0 16 16" ><path d="M2.500 6.500h8v8h-8zM2.500 6.500l3-3h8l-3 3M13.500 3.500v8l-3 3" stroke="#000" fill="#fff" stroke-width="1.1" /><rect x="12.5" y="1.5" width="2" height="2" fill="#fff" stroke="#1f1fff" stroke-width="1" /><rect x="12.5" y="8.5" width="2" height="2" fill="#fff" stroke="#1f1fff" stroke-width="1" /><rect x="1.5" y="13.5" width="2" height="2" fill="#fff" stroke="#1f1fff" stroke-width="1" /></svg>
<svg style="left:35px;top:76px" width="16" height="16" viewBox="0 0 16 16" ><path d="M2.500 5.500l5.500-3 5.500 3v7l-5.500 3-5.500-3z" stroke="#333" fill="#e8e8e8" stroke-width="1" /><path d="M2.500 5.500l5.500 3 5.500-3z" stroke="#333" fill="#aaa" stroke-width="0.8" /><path d="M8 8.500v7" stroke="#333" fill="none" stroke-width="0.8" /><rect x="12.5" y="3.5" width="2" height="2" fill="#fff" stroke="#1f1fff" stroke-width="1" /><rect x="1.5" y="11.5" width="2" height="2" fill="#fff" stroke="#1f1fff" stroke-width="1" /><rect x="12.5" y="11.5" width="2" height="2" fill="#fff" stroke="#1f1fff" stroke-width="1" /><rect x="7.5" y="14.5" width="2" height="2" fill="#fff" stroke="#1f1fff" stroke-width="1" /></svg>
<svg style="left:57px;top:76px" width="16" height="16" viewBox="0 0 16 16" ><defs><radialGradient id="gd"><stop offset="0" stop-color="#fff"/><stop offset="1" stop-color="#888"/></radialGradient></defs><circle cx="7.5" cy="8.5" r="6.5" fill="url(#gd)" stroke="#444" stroke-width="1" /><rect x="7.5" y="7.5" width="2" height="2" fill="#fff" stroke="#1f1fff" stroke-width="1" /><rect x="13.5" y="7.5" width="2" height="2" fill="#fff" stroke="#1f1fff" stroke-width="1" /></svg>
<svg style="left:79px;top:76px" width="16" height="16" viewBox="0 0 16 16" ><g transform="translate(8 8.5) scale(1.2) translate(-8 -8.5)"><path d="M1.500 5c4-4 11-2 12.500 6l-6 0c-2-4-4-5-6.500-6z" stroke="#222" fill="#999" stroke-width="1" /><path d="M5 5c3 0 6 2 6.500 6" stroke="#ddd" fill="none" stroke-width="1" /><rect x="1.5" y="3.5" width="2" height="2" fill="#fff" stroke="#1f1fff" stroke-width="1" /><rect x="6.5" y="8.5" width="2" height="2" fill="#fff" stroke="#1f1fff" stroke-width="1" /></g></svg>
<svg style="left:101px;top:76px" width="16" height="16" viewBox="0 0 16 16" ><path d="M2.500 13.500l10-10v9l-3 3z" stroke="#444" fill="#e0e0e0" stroke-width="1" /><path d="M2.500 13.500h7l3-1.500" stroke="#30a0a0" fill="none" stroke-width="1" /><path d="M2.500 13.500l7 2 3-3" stroke="#3030e0" fill="none" stroke-width="0.9" /><rect x="12.5" y="1.5" width="2" height="2" fill="#fff" stroke="#1f1fff" stroke-width="1" /></svg>
<svg style="left:123px;top:76px" width="16" height="16" viewBox="0 0 16 16" ><g transform="translate(8 8.5) scale(1.2) translate(-8 -8.5)"><path d="M3 12.500l3-9h6l2 7.500-5 3.500z" stroke="#222" fill="#fff" stroke-width="1" /><path d="M6 3.500l3 2.500 3-2.500M9 6v8.500" stroke="#3030e0" fill="none" stroke-width="0.9" /><path d="M3 12.500l6 2 5-3.500" stroke="#3030e0" fill="none" stroke-width="0.9" /><path d="M4 11h9" stroke="#30a0a0" fill="none" stroke-width="0.8" stroke-dasharray="2 1"/></g></svg>
<svg style="left:145px;top:76px" width="16" height="16" viewBox="0 0 16 16" ><g transform="translate(8 8.5) scale(1.2) translate(-8 -8.5)"><path d="M2.500 10l3-6.500c2-2 7 0 8 2.500l-3 6.500c-2 2-7 0-8-2.500z" stroke="#222" fill="#fff" stroke-width="1" /><path d="M5.500 3.500c1.500 3 5 4 8 2.500" stroke="#222" fill="none" stroke-width="0.8" /><path d="M2.500 10c2 3 5 4 8 2.500" stroke="#3030e0" fill="none" stroke-width="1.2" /><path d="M8 8l2 4" stroke="#888" fill="#ccc" stroke-width="2" /></g></svg>
<svg style="left:167px;top:76px" width="16" height="16" viewBox="0 0 16 16" ><path d="M3 4h6c2 0 2 2.500 4 2.500h2M3 8h9M3 12h6c2 0 2-2.500 4-2.500h2" stroke="#000" fill="none" stroke-width="1" /><path d="M4.500 2.500l-2.500 1.500 2.500 1.500zM4.500 10.500l-2.500 1.500 2.500 1.500z" stroke="#000" fill="#000" stroke-width="0.4" /><path d="M2 14.500h8" stroke="#000" fill="none" stroke-width="1.6" /></svg>
<svg style="left:189px;top:76px" width="16" height="16" viewBox="0 0 16 16" ><path d="M1.500 12.500l4.500-8h9l-4.500 8z" stroke="#222" fill="#fff" stroke-width="1" /><path d="M4 9.500h8" stroke="#30a0a0" fill="none" stroke-width="1" /><path d="M1.500 12.500l3 2h7l-1-2" stroke="#3030e0" fill="none" stroke-width="0.9" /><rect x="13.5" y="3.5" width="2" height="2" fill="#fff" stroke="#1f1fff" stroke-width="1" /><rect x="9.5" y="11.5" width="2" height="2" fill="#fff" stroke="#1f1fff" stroke-width="1" /><path d="M9 8l2 4" stroke="#999" fill="none" stroke-width="1.5" /></svg>
<svg style="left:211px;top:76px" width="16" height="16" viewBox="0 0 16 16" ><path d="M1.500 3h4c0 3-.5 5-2 5s-2-2-2-5zM3.500 8v6M2 14.500h3.500" stroke="#222" fill="#fff" stroke-width="1" /><path d="M10.500 3h4c0 3-.5 5-2 5s-2-2-2-5zM12.500 8v6M11 14.500h3.500" stroke="#222" fill="#fff" stroke-width="1" /><path d="M6.500 1v15" stroke="#f02020" fill="none" stroke-width="1" stroke-dasharray="1 1"/><path d="M7 9.500h3M8.500 8l1.500 1.500-1.500 1.500" stroke="#3030e0" fill="none" stroke-width="0.9" /></svg>
<svg style="left:233px;top:76px" width="16" height="16" viewBox="0 0 16 16" ><path d="M2.500 5v8c0 3 10 3 10 0v-8" stroke="#222" fill="#fff" stroke-width="1" /><ellipse cx="7.5" cy="5" rx="5" ry="2.5" fill="#fff" stroke="#222" stroke-width="1" /><rect x="12.5" y="4.5" width="2" height="2" fill="#fff" stroke="#1f1fff" stroke-width="1" /><rect x="7.5" y="11.5" width="2" height="2" fill="#fff" stroke="#1f1fff" stroke-width="1" /><rect x="12.5" y="11.5" width="2" height="2" fill="#fff" stroke="#1f1fff" stroke-width="1" /></svg>
<svg style="left:255px;top:76px" width="16" height="16" viewBox="0 0 16 16" ><path d="M2.500 5v8c0 3 10 3 10 0v-8" stroke="#222" fill="#fff" stroke-width="1" /><ellipse cx="7.5" cy="5" rx="5" ry="2.5" fill="#fff" stroke="#222" stroke-width="1" /><path d="M5 15v-5c0-1.500 5-1.500 5 0v5" stroke="#222" fill="#ccc" stroke-width="0.9" /><rect x="12.5" y="4.5" width="2" height="2" fill="#fff" stroke="#1f1fff" stroke-width="1" /><rect x="6.5" y="11.5" width="2" height="2" fill="#fff" stroke="#1f1fff" stroke-width="1" /><rect x="12.5" y="11.5" width="2" height="2" fill="#fff" stroke="#1f1fff" stroke-width="1" /></svg>
<svg style="left:277px;top:76px" width="16" height="16" viewBox="0 0 16 16" ><path d="M5 2.500h6l3.500 3.500v5l-3.500 3.500h-6l-3.500-3.500v-5z" stroke="#555" fill="#c4c4c4" stroke-width="1" /><circle cx="8" cy="8.5" r="2.5" fill="#eee" stroke="#666" stroke-width="0.9" /><circle cx="8" cy="8.5" r="1" fill="#fff" stroke="#888" stroke-width="0.6" /></svg>
<svg style="left:299px;top:76px" width="16" height="16" viewBox="0 0 16 16" ><path d="M3.500 3v12M6.500 3v12M9.500 3v12M12.500 3v12M2 4.500h12M2 7.500h12M2 10.500h12M2 13.500h12" stroke="#111" fill="none" stroke-width="1" shape-rendering="crispEdges"/><rect x="1.5" y="1.5" width="2" height="2" fill="#fff" stroke="#1f1fff" stroke-width="1" /><rect x="13.5" y="13.5" width="2" height="2" fill="#fff" stroke="#1f1fff" stroke-width="1" /></svg>
<svg style="left:321px;top:76px" width="16" height="16" viewBox="0 0 16 16" ><path d="M2.500 3.500l11 7-2 3.500h-9z" stroke="#222" fill="#fff" stroke-width="1.1" /><path d="M5 6l6 6" stroke="#888" fill="#bbb" stroke-width="2.5" /><rect x="1.5" y="3.5" width="2" height="2" fill="#fff" stroke="#1f1fff" stroke-width="1" /><rect x="12.5" y="9.5" width="2" height="2" fill="#fff" stroke="#1f1fff" stroke-width="1" /><rect x="1.5" y="13.5" width="2" height="2" fill="#fff" stroke="#1f1fff" stroke-width="1" /></svg>
<svg style="left:343px;top:76px" width="16" height="16" viewBox="0 0 16 16" ><path d="M2.500 6.500h8v8h-8zM2.500 6.500l3-3h8l-3 3M13.500 3.500v8l-3 3" stroke="#888" fill="none" stroke-width="0.9" /><path d="M2.500 11l3-2.500 3 1.500 5-2.500v2l-3 3h-8z" stroke="#3030c0" fill="#6080e0" stroke-width="0.7" /></svg>
<svg style="left:365px;top:76px" width="16" height="16" viewBox="0 0 16 16" ><text x="1" y="8.5" font-size="7.5" fill="#000" font-family="Liberation Sans" textLength="7.500" lengthAdjust="spacingAndGlyphs">3D</text><path d="M9.500 3l4 5-3 5h-7" stroke="#222" fill="none" stroke-width="0.9" /><rect x="8.5" y="1.5" width="2" height="2" fill="#fff" stroke="#1f1fff" stroke-width="1" /><rect x="13.5" y="7.5" width="2" height="2" fill="#fff" stroke="#1f1fff" stroke-width="1" /><rect x="9.5" y="12.5" width="2" height="2" fill="#fff" stroke="#1f1fff" stroke-width="1" /><rect x="1.5" y="12.5" width="2" height="2" fill="#fff" stroke="#1f1fff" stroke-width="1" /></svg>
<svg style="left:387px;top:76px" width="16" height="16" viewBox="0 0 16 16" ><path d="M2.500 13c1-9 9-12 11.500 0" stroke="#222" fill="none" stroke-width="1" /><text x="4.5" y="14.5" font-size="7" fill="#000" font-family="Liberation Sans" textLength="7" lengthAdjust="spacingAndGlyphs">3D</text><rect x="3.5" y="1.5" width="2" height="2" fill="#fff" stroke="#1f1fff" stroke-width="1" /><rect x="10.5" y="1.5" width="2" height="2" fill="#fff" stroke="#1f1fff" stroke-width="1" /><rect x="1.5" y="12.5" width="2" height="2" fill="#fff" stroke="#1f1fff" stroke-width="1" /><rect x="13.5" y="12.5" width="2" height="2" fill="#fff" stroke="#1f1fff" stroke-width="1" /></svg>
<svg style="left:409px;top:76px" width="16" height="16" viewBox="0 0 16 16" ><text x="1" y="14.5" font-size="7.5" fill="#000" font-family="Liberation Sans" textLength="7.500" lengthAdjust="spacingAndGlyphs">3D</text><path d="M13 2.500c-5-2-8 3-4 5 3 1.500 1 4-1 4" stroke="#222" fill="none" stroke-width="1" /><rect x="12.5" y="1.5" width="2" height="2" fill="#fff" stroke="#1f1fff" stroke-width="1" /><rect x="4.5" y="4.5" width="2" height="2" fill="#fff" stroke="#1f1fff" stroke-width="1" /><rect x="10.5" y="8.5" width="2" height="2" fill="#fff" stroke="#1f1fff" stroke-width="1" /></svg>
<svg style="left:442px;top:76px" width="16" height="16" viewBox="0 0 16 16" ><path d="M2.500 7.500l3-3h5l3.500 3v4l-3 3h-8.500z" stroke="#b4b4b4" fill="#d8d8d8" stroke-width="1" /><circle cx="9" cy="7" r="4.5" fill="#d8d8d8" stroke="#b8b8b8" stroke-width="1" /></svg>
<svg style="left:464px;top:76px" width="16" height="16" viewBox="0 0 16 16" ><circle cx="10" cy="6.5" r="4.5" fill="#eee" stroke="#c4c4c4" stroke-width="1" /><path d="M2.500 7.500l3-2.500h5v7l-3 2.500h-5z" stroke="#b4b4b4" fill="#d8d8d8" stroke-width="1" /><path d="M2.500 7.500h5v7M7.500 7.500l3-2.500" stroke="#b4b4b4" fill="none" stroke-width="0.9" /></svg>
<svg style="left:486px;top:76px" width="16" height="16" viewBox="0 0 16 16" ><circle cx="10" cy="6.5" r="4.5" fill="#f0f0f0" stroke="#ccc" stroke-width="1" /><path d="M2.500 8l3-2.500h5v6.500l-3 2.500h-5z" stroke="#b4b4b4" fill="#ececec" stroke-width="1" /><path d="M2.500 8h5v6.500" stroke="#c0c0c0" fill="none" stroke-width="0.9" /></svg>
<svg style="left:509px;top:76px" width="16" height="16" viewBox="0 0 16 16" ><circle cx="8" cy="8" r="6" fill="#d0d0d0" stroke="#b4b4b4" stroke-width="1" /><path d="M3.500 4l8 8M5.500 3l8 8M2.500 6.500l7 7" stroke="#f4f4f4" fill="none" stroke-width="1.1" /></svg>
<div style="left:530px;top:76px;width:1px;height:17px;background:#8c8c8c"></div>
<svg style="left:537px;top:76px" width="16" height="16" viewBox="0 0 16 16" ><circle cx="10" cy="6" r="4.5" fill="#3a9a9a" stroke="#2a2ab0" stroke-width="1.2" /><rect x="2.5" y="6.5" width="8" height="8" fill="#3a9a9a" stroke="#2a2ab0" stroke-width="1.3" /><path d="M6 6.500h4.500v4" stroke="#2a2ab0" fill="none" stroke-width="1" /></svg>
<svg style="left:559px;top:76px" width="16" height="16" viewBox="0 0 16 16" ><circle cx="10.5" cy="6" r="4.5" fill="#f5f6f7" stroke="#aaa" stroke-width="1" /><path d="M2.500 6.500h4c0 2 2 4 4.500 4v4h-8.500z" stroke="#3a9a9a" fill="#3a9a9a" stroke-width="0.5" /><rect x="2.5" y="6.5" width="8.5" height="8" fill="none" stroke="#2a2ab0" stroke-width="1.3" /></svg>
<svg style="left:581px;top:76px" width="16" height="16" viewBox="0 0 16 16" ><circle cx="10.5" cy="6" r="4.5" fill="#f5f6f7" stroke="#aaa" stroke-width="1" /><rect x="2.5" y="6.5" width="8.5" height="8" fill="#fff" stroke="#999" stroke-width="1" /><path d="M6.500 6.500h4.500v4c-2.500 0-4.500-2-4.500-4z" stroke="#3a9a9a" fill="#2a2ab0" stroke-width="0.8" /></svg>
<div style="left:602px;top:76px;width:1px;height:17px;background:#8c8c8c"></div>
<svg style="left:608px;top:76px" width="16" height="16" viewBox="0 0 16 16" ><path d="M2.500 8l3-4 3-2 3 1 2.500 3v6l-5 3h-6.500z" stroke="#aaa" fill="#d4d4d4" stroke-width="1" /><path d="M2.500 8l3-3 3.500 3.500v6.500M9 8.500l5-3" stroke="#b8b8b8" fill="none" stroke-width="0.9" /></svg>
<svg style="left:642px;top:76px" width="16" height="16" viewBox="0 0 16 16" ><rect x="1.5" y="1.5" width="9" height="10" fill="none" stroke="#b8b8b8" stroke-width="1.1" /><rect x="3.5" y="3.5" width="9" height="10" fill="none" stroke="#b8b8b8" stroke-width="1.1" /><rect x="5.5" y="5.5" width="8" height="9" fill="none" stroke="#b8b8b8" stroke-width="1.1" /></svg>
<svg style="left:664px;top:76px" width="16" height="16" viewBox="0 0 16 16" ><rect x="1.5" y="1.5" width="5" height="5" fill="none" stroke="#b8b8b8" stroke-width="1.2" /><rect x="1.5" y="9.5" width="5" height="5" fill="none" stroke="#b8b8b8" stroke-width="1.2" /><rect x="9.5" y="1.5" width="5" height="5" fill="none" stroke="#b8b8b8" stroke-width="1.2" /><rect x="9.5" y="9.5" width="5" height="5" fill="none" stroke="#b8b8b8" stroke-width="1.2" /></svg>
<svg style="left:686px;top:76px" width="16" height="16" viewBox="0 0 16 16" ><circle cx="8" cy="3" r="2.3" fill="none" stroke="#b8b8b8" stroke-width="1" /><circle cx="3" cy="8" r="2.3" fill="none" stroke="#b8b8b8" stroke-width="1" /><circle cx="13" cy="8" r="2.3" fill="none" stroke="#b8b8b8" stroke-width="1" /><circle cx="8" cy="13" r="2.3" fill="none" stroke="#b8b8b8" stroke-width="1" /></svg>
<svg style="left:709px;top:76px" width="16" height="16" viewBox="0 0 16 16" ><rect x="2.5" y="2.5" width="7" height="8" fill="#e4e4e4" stroke="#b8b8b8" stroke-width="1.1" /><rect x="4.5" y="4.5" width="7" height="8" fill="#e4e4e4" stroke="#b8b8b8" stroke-width="1.1" /><rect x="6.5" y="6.5" width="7" height="8" fill="none" stroke="#b8b8b8" stroke-width="1.1" /></svg>
<svg style="left:731px;top:76px" width="16" height="16" viewBox="0 0 16 16" ><rect x="2.5" y="2" width="4.5" height="5" fill="none" stroke="#b8b8b8" stroke-width="1.2" /><rect x="2.5" y="9.5" width="4.5" height="5" fill="none" stroke="#b8b8b8" stroke-width="1.2" /><rect x="9.5" y="2" width="4.5" height="5" fill="none" stroke="#b8b8b8" stroke-width="1.2" /><rect x="9.5" y="9.5" width="4.5" height="5" fill="none" stroke="#b8b8b8" stroke-width="1.2" /></svg>
<svg style="left:753px;top:76px" width="16" height="16" viewBox="0 0 16 16" ><circle cx="8" cy="4" r="2.6" fill="none" stroke="#b8b8b8" stroke-width="1" /><circle cx="4" cy="8" r="2.6" fill="none" stroke="#b8b8b8" stroke-width="1" /><circle cx="12" cy="8" r="2.6" fill="none" stroke="#b8b8b8" stroke-width="1" /><circle cx="8" cy="12" r="2.6" fill="none" stroke="#b8b8b8" stroke-width="1" /><rect x="1.5" y="1.5" width="13" height="13" fill="none" stroke="#ddd" stroke-width="0.8" stroke-dasharray="1 1"/></svg>
<svg style="left:775px;top:76px" width="16" height="16" viewBox="0 0 16 16" ><path d="M2.500 2.500v11h5z" stroke="#b8b8b8" fill="none" stroke-width="1" /><path d="M8.500 13.500h5.500v-10z" stroke="#b8b8b8" fill="#bbb" stroke-width="1" /></svg>
<svg style="left:797px;top:76px" width="16" height="16" viewBox="0 0 16 16" ><path d="M2.500 14.500v-5l5 5z" stroke="#b8b8b8" fill="none" stroke-width="1" /><path d="M10 2.500h4.500v4.500z" stroke="#b8b8b8" fill="none" stroke-width="1" /><path d="M5 10l7-6" stroke="#ccc" fill="none" stroke-width="0.8" stroke-dasharray="1 1"/></svg>
<svg style="left:819px;top:76px" width="16" height="16" viewBox="0 0 16 16" ><path d="M2.500 8l4-5c3-2 7 0 7.500 3v5l-4 3.500h-7.500z" stroke="#222" fill="#c8c8c8" stroke-width="1" /><path d="M2.500 8c3-1 5 0 7.500 0l4-2" stroke="#222" fill="none" stroke-width="0.8" /><path d="M6.500 3c3-1 6 .5 7 3" stroke="#3030e0" fill="#fff" stroke-width="1.2" /><path d="M10 8v6.500" stroke="#222" fill="none" stroke-width="0.8" /></svg>
<svg style="left:852px;top:76px" width="16" height="16" viewBox="0 0 16 16" ><path d="M2.500 13.500l11-11M5 15l10-10" stroke="#222" fill="none" stroke-width="1" /><path d="M3 5.500l4.500 4M13 10.500l-4.500-4" stroke="#2a2ae0" fill="none" stroke-width="1.3" /><path d="M7.500 9.500v-2.500M7.500 9.500h-2.500M8.500 6.500v2.500M8.500 6.500h2.500" stroke="#2a2ae0" fill="none" stroke-width="1" /></svg>
<svg style="left:874px;top:76px" width="16" height="16" viewBox="0 0 16 16" ><path d="M2 13.500l6-5.500M10 6l4-4" stroke="#e02020" fill="none" stroke-width="1.1" /><path d="M8 2l6 6M2 8l6 6" stroke="#222" fill="none" stroke-width="1" /><path d="M8 2l6 6" stroke="#e02020" fill="none" stroke-width="1.1" /></svg>
<svg style="left:897px;top:76px" width="16" height="16" viewBox="0 0 16 16" ><path d="M3 11.500c-2-5 2-9.500 7-8.500" stroke="#e02020" fill="none" stroke-width="1.2" /><path d="M10 3c4 1 5 6 2 9.500" stroke="#222" fill="none" stroke-width="1.1" /><path d="M8 9l5-6" stroke="#888" fill="none" stroke-width="0.8" stroke-dasharray="1 1.500"/></svg>
<svg style="left:919px;top:76px" width="16" height="16" viewBox="0 0 16 16" ><path d="M1.500 13l11-11" stroke="#e02020" fill="none" stroke-width="1.1" /><path d="M3.500 2.500l11 11.500" stroke="#222" fill="none" stroke-width="1" /><path d="M3.500 2.500l5 5" stroke="#e02020" fill="none" stroke-width="1.1" /></svg>
<svg style="left:941px;top:76px" width="16" height="16" viewBox="0 0 16 16" ><path d="M5 10l8-7M7 12.500l8-7M9.500 14.500l6-5" stroke="#222" fill="none" stroke-width="1" /><path d="M1.500 5l4 3M1.500 5v2.500M1.500 5h2.500" stroke="#2a2ae0" fill="none" stroke-width="1.2" /></svg>
<svg style="left:963px;top:76px" width="16" height="16" viewBox="0 0 16 16" ><path d="M2.500 2.500h7M2.500 2.500v10" stroke="#222" fill="none" stroke-width="1.2" /><rect x="7.5" y="6.5" width="7" height="8" fill="none" stroke="#222" stroke-width="1" stroke-dasharray="1 1"/><path d="M2.500 12.500h5M9.500 2.500l4 10" stroke="#e02020" fill="none" stroke-width="1" /><path d="M11 2l3.500 3.500M14.500 5.500v-2.500M14.500 5.500h-2.500" stroke="#2a2ae0" fill="none" stroke-width="1" /></svg>
<svg style="left:985px;top:76px" width="16" height="16" viewBox="0 0 16 16" ><path d="M3 14l5-11M9.500 14l5-11" stroke="#222" fill="none" stroke-width="1.1" /><path d="M5 13.500l2-3M5 13.500l.2-2.500M5 13.500l2.300-.8" stroke="#2a2ae0" fill="none" stroke-width="1" /></svg>
<svg style="left:1007px;top:76px" width="16" height="16" viewBox="0 0 16 16" ><circle cx="8" cy="8.5" r="6" fill="none" stroke="#e02020" stroke-width="1.2" /></svg>
<svg style="left:1029px;top:76px" width="16" height="16" viewBox="0 0 16 16" ><path d="M6.500 14.500l-4.500-12" stroke="#e02020" fill="none" stroke-width="1.2" /><path d="M2 2.500l12 3" stroke="#222" fill="none" stroke-width="1" /><path d="M2 2.500l3 1" stroke="#e02020" fill="none" stroke-width="1.2" /></svg>
<svg style="left:1051px;top:76px" width="16" height="16" viewBox="0 0 16 16" ><circle cx="10" cy="5.5" r="4" fill="none" stroke="#20d020" stroke-width="1.2" /><rect x="2.5" y="7.5" width="9" height="7" fill="#f5f6f7" stroke="#222" stroke-width="1.2" /><path d="M8 7.500c.5 1.500 2 2 3.500 2" stroke="#e02020" fill="none" stroke-width="1.1" /></svg>
<div style="left:1073px;top:76px;width:1px;height:17px;background:#8c8c8c"></div>
<svg style="left:1079px;top:76px" width="16" height="16" viewBox="0 0 16 16" ><path d="M3.500 1.500c0 8 2 11 7 11" stroke="#e02020" fill="none" stroke-width="1.2" /><path d="M8.500 12.500h6" stroke="#222" fill="none" stroke-width="1.1" /></svg>
<svg style="left:1101px;top:76px" width="16" height="16" viewBox="0 0 16 16" ><path d="M3 12l9-9" stroke="#e02020" fill="none" stroke-width="1.2" /><path d="M1.500 12h4" stroke="#222" fill="none" stroke-width="1" /><path d="M4.500 14.500h6M4.500 13v3M10.500 13v3" stroke="#2a2ae0" fill="none" stroke-width="1" /><path d="M13 4v6M11.500 4h3M11.500 10h3" stroke="#2a2ae0" fill="none" stroke-width="1" /></svg>
<svg style="left:1123px;top:76px" width="16" height="16" viewBox="0 0 16 16" ><path d="M3 12l9-9" stroke="#e02020" fill="none" stroke-width="1.2" /><path d="M1.500 12h4" stroke="#222" fill="none" stroke-width="1" /><path d="M4.500 14.500h6M4.500 13v3M10.500 13v3" stroke="#2a2ae0" fill="none" stroke-width="1" /><path d="M12.500 12v-5M12.500 7l-2 2M12.500 7l2 2M12 2v3" stroke="#2a2ae0" fill="none" stroke-width="1" /></svg>
<svg style="left:1145px;top:76px" width="16" height="16" viewBox="0 0 16 16" ><path d="M2 13l11-10M4 15l11-10" stroke="#e02020" fill="none" stroke-width="1.1" /><path d="M2 10l8-7" stroke="#2a2ae0" fill="none" stroke-width="1" /><path d="M13.500 13v-5M13.500 8l-2 2M13.500 8l2 2" stroke="#2a2ae0" fill="none" stroke-width="1" /></svg>
<div style="left:1167px;top:76px;width:1px;height:17px;background:#8c8c8c"></div>
<svg style="left:1173px;top:76px" width="16" height="16" viewBox="0 0 16 16" ><path d="M2 10l8-8M2 14.500l6-5.500 6 5.500M10 6l4 4" stroke="#222" fill="none" stroke-width="1.1" /></svg>
<svg style="left:1195px;top:76px" width="16" height="16" viewBox="0 0 16 16" ><path d="M1.500 5.500h4.500v-4M10.500 1.500v4h4.500M1.500 10.500h4.500v4.500M10.500 15v-4.500h4.500" stroke="#222" fill="none" stroke-width="1.3" /></svg>
<div style="left:1217px;top:76px;width:1px;height:17px;background:#8c8c8c"></div>
<svg style="left:1223px;top:76px" width="16" height="16" viewBox="0 0 16 16" ><path d="M6.500 1.500h3v4h-3zM3.500 7l2-1.500h5l2 1.500v7.500h-11v-7.500z" stroke="#555" fill="#e8e8e8" stroke-width="1.1" /><path d="M5 10.500h6M9 9l2 1.500-2 1.500" stroke="#999" fill="none" stroke-width="0.9" /></svg>
<svg style="left:1245px;top:76px" width="16" height="16" viewBox="0 0 16 16" ><rect x="2.5" y="2.5" width="5" height="4" fill="none" stroke="#222" stroke-width="1" stroke-dasharray="2 1"/><path d="M8 3c3 0 5 1 5.500 4M13.500 7.500l-2-1M13.500 7.500l1.200-2" stroke="#20c020" fill="none" stroke-width="1.3" /><rect x="7.5" y="9.5" width="7" height="6" fill="#fff" stroke="#e02020" stroke-width="1.2" /></svg>
<svg style="left:1268px;top:76px" width="16" height="16" viewBox="0 0 16 16" ><rect x="4.5" y="1.5" width="8" height="6" fill="#fff" stroke="#d01010" stroke-width="1.4" /><rect x="1.5" y="7" width="13" height="7" fill="#fff" stroke="#d01010" stroke-width="1.6" /><path d="M1 1l3 3" stroke="#e8d020" fill="none" stroke-width="1.3" /><rect x="4.5" y="9" width="7" height="3" fill="#222" stroke="none" stroke-width="1" /></svg>
<svg style="left:1290px;top:76px" width="16" height="16" viewBox="0 0 16 16" ><path d="M6 1.500h4v3.500h3.500l2 3-2 3h-3.500v3.500h-4v-3.500h-3.500l-2-3 2-3h3.500z" stroke="#900" fill="#e03030" stroke-width="0.8" /><rect x="6.5" y="3.5" width="3" height="9" fill="#fff" stroke="#900" stroke-width="0.8" /><path d="M3 7l-1.500 1 1.500 1M13 7l1.500 1-1.500 1" stroke="#fff" fill="none" stroke-width="0.8" /></svg>
<div style="left:429px;top:71px;width:1px;height:26px;background:#b4b4b4"></div>
<div style="left:629px;top:71px;width:1px;height:26px;background:#b4b4b4"></div>
<div style="left:839px;top:71px;width:1px;height:26px;background:#b4b4b4"></div>
<div style="left:1310px;top:71px;width:1px;height:26px;background:#b4b4b4"></div>
<div style="left:10px;top:99px;width:99px;height:25px;background:#f5f6f7;border:1px solid #acacac;box-sizing:border-box;box-shadow:inset 0 0 0 1px #dcdcdc"></div>
<div style="left:91px;top:100px;width:17px;height:23px;background:linear-gradient(#f2f2f2,#e2e2e2);border-left:1px solid #c8c8c8;box-sizing:border-box"></div>
<svg style="left:91px;top:100px" width="17" height="23" viewBox="0 0 17 23" ><path d="M5 9.8l3.500 3.500 3.500-3.500" stroke="#b8b8b8" fill="none" stroke-width="2" /></svg>
<div style="left:110px;top:99px;width:99px;height:25px;background:#fff;border:1px solid #acacac;box-sizing:border-box;box-shadow:inset 0 0 0 1px #dcdcdc"></div>
<div style="left:191px;top:100px;width:17px;height:23px;background:linear-gradient(#f2f2f2,#e2e2e2);border-left:1px solid #c8c8c8;box-sizing:border-box"></div>
<svg style="left:191px;top:100px" width="17" height="23" viewBox="0 0 17 23" ><path d="M5 9.8l3.500 3.500 3.500-3.500" stroke="#404040" fill="none" stroke-width="2" /></svg>
<svg style="left:114px;top:104px" width="20" height="14" viewBox="0 0 20 14" ><path d="M1.500 7c3-5 13-5 16 0-3 4-13 4-16 0z" stroke="#222" fill="#fff" stroke-width="1.1" /><circle cx="9.5" cy="7" r="3.2" fill="#2a3a90" stroke="#111" stroke-width="0.8" /><circle cx="9.5" cy="7" r="1.3" fill="#000" stroke="none" stroke-width="1" /><path d="M1.500 6c3-4.500 13-4.500 16 0" stroke="#222" fill="none" stroke-width="1.6" /></svg>
<svg style="left:132px;top:104px" width="12" height="15" viewBox="0 0 12 15" ><circle cx="5.5" cy="10" r="4" fill="#e4e4e4" stroke="#d0d0d0" stroke-width="1" /><path d="M7 7v-3.500c0-2 3-2 3 0" stroke="#d0d0d0" fill="none" stroke-width="1.2" /><text x="4" y="12" font-size="5" fill="#c0c0c0" font-family="Liberation Sans" >1</text></svg>
<div style="left:147px;top:103px;width:17px;height:17px;background:#000"></div>
<div class="t" style="left:173px;top:104px;white-space:nowrap;font-size:12.500px">0</div>
<div style="left:212px;top:99px;width:97px;height:25px;background:#fff;border:1px solid #acacac;box-sizing:border-box;box-shadow:inset 0 0 0 1px #dcdcdc"></div>
<div style="left:291px;top:100px;width:17px;height:23px;background:linear-gradient(#f2f2f2,#e2e2e2);border-left:1px solid #c8c8c8;box-sizing:border-box"></div>
<svg style="left:291px;top:100px" width="17" height="23" viewBox="0 0 17 23" ><path d="M5 9.8l3.500 3.500 3.500-3.500" stroke="#404040" fill="none" stroke-width="2" /></svg>
<div style="left:214px;top:101px;width:77px;height:21px;background:#0000ff"></div>
<div class="t" style="left:214px;top:104px;white-space:nowrap;font-size:12.500px;color:#fff;width:77px;text-align:center">Blue</div>
<div style="left:310px;top:99px;width:99px;height:25px;background:#fff;border:1px solid #acacac;box-sizing:border-box;box-shadow:inset 0 0 0 1px #dcdcdc"></div>
<div style="left:391px;top:100px;width:17px;height:23px;background:linear-gradient(#f2f2f2,#e2e2e2);border-left:1px solid #c8c8c8;box-sizing:border-box"></div>
<svg style="left:391px;top:100px" width="17" height="23" viewBox="0 0 17 23" ><path d="M5 9.8l3.500 3.500 3.500-3.500" stroke="#404040" fill="none" stroke-width="2" /></svg>
<div style="left:315px;top:111px;width:75px;height:1px;background:#000"></div>
<div style="left:411px;top:99px;width:98px;height:25px;background:#fff;border:1px solid #acacac;box-sizing:border-box;box-shadow:inset 0 0 0 1px #dcdcdc"></div>
<div style="left:491px;top:100px;width:17px;height:23px;background:linear-gradient(#f2f2f2,#e2e2e2);border-left:1px solid #c8c8c8;box-sizing:border-box"></div>
<svg style="left:491px;top:100px" width="17" height="23" viewBox="0 0 17 23" ><path d="M5 9.8l3.500 3.500 3.500-3.500" stroke="#404040" fill="none" stroke-width="2" /></svg>
<div class="t" style="left:417px;top:103px;white-space:nowrap;font-size:12.500px">None</div>
<div style="left:510px;top:99px;width:99px;height:25px;background:#fff;border:1px solid #acacac;box-sizing:border-box;box-shadow:inset 0 0 0 1px #dcdcdc"></div>
<div style="left:591px;top:100px;width:17px;height:23px;background:linear-gradient(#f2f2f2,#e2e2e2);border-left:1px solid #c8c8c8;box-sizing:border-box"></div>
<svg style="left:591px;top:100px" width="17" height="23" viewBox="0 0 17 23" ><path d="M5 9.8l3.500 3.500 3.500-3.500" stroke="#404040" fill="none" stroke-width="2" /></svg>
<div class="t" style="left:514px;top:104px;white-space:nowrap;font-size:12.500px">0 mm</div>
<div style="left:612px;top:101px;width:1px;height:21px;background:#8c8c8c"></div>
<div style="left:616px;top:99px;width:99px;height:25px;background:#f5f6f7;border:1px solid #acacac;box-sizing:border-box;box-shadow:inset 0 0 0 1px #dcdcdc"></div>
<div style="left:697px;top:100px;width:17px;height:23px;background:linear-gradient(#f2f2f2,#e2e2e2);border-left:1px solid #c8c8c8;box-sizing:border-box"></div>
<svg style="left:697px;top:100px" width="17" height="23" viewBox="0 0 17 23" ><path d="M5 9.8l3.500 3.500 3.500-3.500" stroke="#b8b8b8" fill="none" stroke-width="2" /></svg>
<div style="left:716px;top:99px;width:99px;height:25px;background:#f5f6f7;border:1px solid #acacac;box-sizing:border-box;box-shadow:inset 0 0 0 1px #dcdcdc"></div>
<div style="left:797px;top:100px;width:17px;height:23px;background:linear-gradient(#f2f2f2,#e2e2e2);border-left:1px solid #c8c8c8;box-sizing:border-box"></div>
<svg style="left:797px;top:100px" width="17" height="23" viewBox="0 0 17 23" ><path d="M5 9.8l3.500 3.500 3.500-3.500" stroke="#b8b8b8" fill="none" stroke-width="2" /></svg>
<div style="left:735px;top:102px;width:62px;height:20px;background:#f0f0f0"></div>
<div style="left:1176px;top:97px;width:1px;height:29px;background:#b4b4b4"></div>
<svg style="left:830px;top:103px" width="16" height="16" viewBox="0 0 16 16" ><path d="M1.500 14.500l13-13" stroke="#7a7a7a" fill="none" stroke-width="0.9"  stroke-dasharray="2 1.500"/><rect x="4.5" y="10.5" width="2" height="2" fill="#fff" stroke="#1f1fff" stroke-width="1" /><rect x="9.5" y="4.5" width="2" height="2" fill="#fff" stroke="#1f1fff" stroke-width="1" /></svg>
<svg style="left:852px;top:103px" width="16" height="16" viewBox="0 0 16 16" ><path d="M1 8h14" stroke="#7a7a7a" fill="none" stroke-width="0.9"  stroke-dasharray="2 1.500"/><rect x="7.5" y="7.5" width="2" height="2" fill="#fff" stroke="#1f1fff" stroke-width="1" /></svg>
<svg style="left:874px;top:103px" width="16" height="16" viewBox="0 0 16 16" ><path d="M8 1.500v13" stroke="#7a7a7a" fill="none" stroke-width="0.9"  stroke-dasharray="2 1.500"/><rect x="7.5" y="7.5" width="2" height="2" fill="#fff" stroke="#1f1fff" stroke-width="1" /></svg>
<svg style="left:897px;top:103px" width="16" height="16" viewBox="0 0 16 16" ><path d="M3 9l8-7M5 14l8-7" stroke="#7a7a7a" fill="none" stroke-width="0.9"  stroke-dasharray="2 1.500"/><rect x="5.5" y="5.5" width="2" height="2" fill="#fff" stroke="#1f1fff" stroke-width="1" /><rect x="9.5" y="9.5" width="2" height="2" fill="#fff" stroke="#1f1fff" stroke-width="1" /></svg>
<svg style="left:919px;top:103px" width="16" height="16" viewBox="0 0 16 16" ><path d="M1.500 13.500l12-11M7 7l6 6.500" stroke="#7a7a7a" fill="none" stroke-width="0.9"  stroke-dasharray="2 1.500"/><rect x="6.5" y="6.5" width="2" height="2" fill="#fff" stroke="#1f1fff" stroke-width="1" /><rect x="12.5" y="12.5" width="2" height="2" fill="#fff" stroke="#1f1fff" stroke-width="1" /></svg>
<svg style="left:941px;top:103px" width="16" height="16" viewBox="0 0 16 16" ><path d="M2 2.500l11 11M2 14l11-11.500" stroke="#7a7a7a" fill="none" stroke-width="0.9"  stroke-dasharray="2 1.500"/><rect x="6.5" y="7.5" width="2" height="2" fill="#fff" stroke="#1f1fff" stroke-width="1" /><rect x="12.5" y="2.5" width="2" height="2" fill="#fff" stroke="#222" stroke-width="1" /><rect x="1.5" y="12.5" width="2" height="2" fill="#fff" stroke="#222" stroke-width="1" /></svg>
<svg style="left:963px;top:103px" width="16" height="16" viewBox="0 0 16 16" ><path d="M2 14l12-12" stroke="#222" fill="none" stroke-width="1" /><path d="M2 14l3-.5M2 14l.5-3M14 2l-3 .5M14 2l-.5 3" stroke="#222" fill="none" stroke-width="1" /><rect x="7.5" y="7.5" width="2" height="2" fill="#fff" stroke="#1f1fff" stroke-width="1" /></svg>
<svg style="left:985px;top:103px" width="16" height="16" viewBox="0 0 16 16" ><path d="M2 14l12-12" stroke="#222" fill="none" stroke-width="1" /><path d="M2 14l3-.5M2 14l.5-3M14 2l-3 .5M14 2l-.5 3" stroke="#222" fill="none" stroke-width="1" /><path d="M8.500 2v7" stroke="#2a2ae0" fill="none" stroke-width="1" /><rect x="7.5" y="1.5" width="2" height="2" fill="#fff" stroke="#1f1fff" stroke-width="1" /><rect x="7.5" y="8.5" width="2" height="2" fill="#fff" stroke="#1f1fff" stroke-width="1" /></svg>
<svg style="left:1012px;top:103px" width="16" height="16" viewBox="0 0 16 16" ><circle cx="8" cy="8" r="6.5" fill="none" stroke="#7a7a7a" stroke-width="1"  stroke-dasharray="2 1.500"/><rect x="7.5" y="7.5" width="2" height="2" fill="#fff" stroke="#1f1fff" stroke-width="1" /><rect x="13.5" y="7.5" width="2" height="2" fill="#fff" stroke="#1f1fff" stroke-width="1" /></svg>
<svg style="left:1035px;top:103px" width="16" height="16" viewBox="0 0 16 16" ><circle cx="8" cy="8" r="6.5" fill="none" stroke="#7a7a7a" stroke-width="1"  stroke-dasharray="2 1.500"/><rect x="2.5" y="2.5" width="2" height="2" fill="#fff" stroke="#1f1fff" stroke-width="1" /><rect x="12.5" y="2.5" width="2" height="2" fill="#fff" stroke="#1f1fff" stroke-width="1" /><rect x="7.5" y="13.5" width="2" height="2" fill="#fff" stroke="#1f1fff" stroke-width="1" /></svg>
<svg style="left:1057px;top:103px" width="16" height="16" viewBox="0 0 16 16" ><circle cx="8" cy="8" r="6.5" fill="none" stroke="#7a7a7a" stroke-width="1"  stroke-dasharray="2 1.500"/><rect x="0.5" y="7.5" width="2" height="2" fill="#fff" stroke="#1f1fff" stroke-width="1" /><rect x="13.5" y="7.5" width="2" height="2" fill="#fff" stroke="#1f1fff" stroke-width="1" /></svg>
<svg style="left:1084px;top:103px" width="16" height="16" viewBox="0 0 16 16" ><circle cx="8" cy="8" r="6.5" fill="none" stroke="#222" stroke-width="1.3" /><path d="M2.500 13.500l11-11M3 3l10 10" stroke="#222" fill="none" stroke-width="1" /><path d="M14.500 1.500l-3.500 1 2.500 2.500zM1.500 14.500l3.500-1-2.500-2.500z" stroke="#222" fill="#222" stroke-width="0.5" /><rect x="7.5" y="7.5" width="2" height="2" fill="#fff" stroke="#1f1fff" stroke-width="1" /></svg>
<svg style="left:1111px;top:103px" width="16" height="16" viewBox="0 0 16 16" ><path d="M2 14l12-12" stroke="#7a7a7a" fill="none" stroke-width="0.9"  stroke-dasharray="2 1.500"/><rect x="3.5" y="10.5" width="2" height="2" fill="#fff" stroke="#1f1fff" stroke-width="1" /><rect x="8.5" y="5.5" width="2" height="2" fill="#fff" stroke="#1f1fff" stroke-width="1" /></svg>
<svg style="left:1134px;top:103px" width="16" height="16" viewBox="0 0 16 16" ><path d="M8 1.500v10" stroke="#7a7a7a" fill="none" stroke-width="0.9"  stroke-dasharray="2 1.500"/><rect x="7.5" y="11.5" width="2" height="2" fill="#fff" stroke="#1f1fff" stroke-width="1" /></svg>
<svg style="left:1155px;top:103px" width="16" height="16" viewBox="0 0 16 16" ><path d="M3 7.500h12" stroke="#7a7a7a" fill="none" stroke-width="0.9"  stroke-dasharray="2 1.500"/><rect x="3.5" y="6.5" width="2" height="2" fill="#fff" stroke="#1f1fff" stroke-width="1" /></svg>
<div style="left:1007px;top:101px;width:1px;height:21px;background:#8c8c8c"></div>
<div style="left:1078px;top:101px;width:1px;height:21px;background:#8c8c8c"></div>
<div style="left:1106px;top:101px;width:1px;height:21px;background:#8c8c8c"></div>
<svg style="left:4px;top:23px" width="3" height="19" viewBox="0 0 3 19" shape-rendering="crispEdges"><rect x="0" y="0" width="2" height="2" fill="#c6c6c6" stroke="none" stroke-width="1" /><rect x="1" y="1" width="1" height="1" fill="#fff" stroke="none" stroke-width="1" /><rect x="0" y="4" width="2" height="2" fill="#c6c6c6" stroke="none" stroke-width="1" /><rect x="1" y="5" width="1" height="1" fill="#fff" stroke="none" stroke-width="1" /><rect x="0" y="8" width="2" height="2" fill="#c6c6c6" stroke="none" stroke-width="1" /><rect x="1" y="9" width="1" height="1" fill="#fff" stroke="none" stroke-width="1" /><rect x="0" y="12" width="2" height="2" fill="#c6c6c6" stroke="none" stroke-width="1" /><rect x="1" y="13" width="1" height="1" fill="#fff" stroke="none" stroke-width="1" /><rect x="0" y="16" width="2" height="2" fill="#c6c6c6" stroke="none" stroke-width="1" /><rect x="1" y="17" width="1" height="1" fill="#fff" stroke="none" stroke-width="1" /></svg>
<svg style="left:869px;top:48px" width="3" height="20" viewBox="0 0 3 20" shape-rendering="crispEdges"><rect x="0" y="0" width="2" height="2" fill="#c6c6c6" stroke="none" stroke-width="1" /><rect x="1" y="1" width="1" height="1" fill="#fff" stroke="none" stroke-width="1" /><rect x="0" y="4" width="2" height="2" fill="#c6c6c6" stroke="none" stroke-width="1" /><rect x="1" y="5" width="1" height="1" fill="#fff" stroke="none" stroke-width="1" /><rect x="0" y="8" width="2" height="2" fill="#c6c6c6" stroke="none" stroke-width="1" /><rect x="1" y="9" width="1" height="1" fill="#fff" stroke="none" stroke-width="1" /><rect x="0" y="12" width="2" height="2" fill="#c6c6c6" stroke="none" stroke-width="1" /><rect x="1" y="13" width="1" height="1" fill="#fff" stroke="none" stroke-width="1" /><rect x="0" y="16" width="2" height="2" fill="#c6c6c6" stroke="none" stroke-width="1" /><rect x="1" y="17" width="1" height="1" fill="#fff" stroke="none" stroke-width="1" /></svg>
<svg style="left:947px;top:48px" width="3" height="20" viewBox="0 0 3 20" shape-rendering="crispEdges"><rect x="0" y="0" width="2" height="2" fill="#c6c6c6" stroke="none" stroke-width="1" /><rect x="1" y="1" width="1" height="1" fill="#fff" stroke="none" stroke-width="1" /><rect x="0" y="4" width="2" height="2" fill="#c6c6c6" stroke="none" stroke-width="1" /><rect x="1" y="5" width="1" height="1" fill="#fff" stroke="none" stroke-width="1" /><rect x="0" y="8" width="2" height="2" fill="#c6c6c6" stroke="none" stroke-width="1" /><rect x="1" y="9" width="1" height="1" fill="#fff" stroke="none" stroke-width="1" /><rect x="0" y="12" width="2" height="2" fill="#c6c6c6" stroke="none" stroke-width="1" /><rect x="1" y="13" width="1" height="1" fill="#fff" stroke="none" stroke-width="1" /><rect x="0" y="16" width="2" height="2" fill="#c6c6c6" stroke="none" stroke-width="1" /><rect x="1" y="17" width="1" height="1" fill="#fff" stroke="none" stroke-width="1" /></svg>
<svg style="left:1055px;top:48px" width="3" height="20" viewBox="0 0 3 20" shape-rendering="crispEdges"><rect x="0" y="0" width="2" height="2" fill="#c6c6c6" stroke="none" stroke-width="1" /><rect x="1" y="1" width="1" height="1" fill="#fff" stroke="none" stroke-width="1" /><rect x="0" y="4" width="2" height="2" fill="#c6c6c6" stroke="none" stroke-width="1" /><rect x="1" y="5" width="1" height="1" fill="#fff" stroke="none" stroke-width="1" /><rect x="0" y="8" width="2" height="2" fill="#c6c6c6" stroke="none" stroke-width="1" /><rect x="1" y="9" width="1" height="1" fill="#fff" stroke="none" stroke-width="1" /><rect x="0" y="12" width="2" height="2" fill="#c6c6c6" stroke="none" stroke-width="1" /><rect x="1" y="13" width="1" height="1" fill="#fff" stroke="none" stroke-width="1" /><rect x="0" y="16" width="2" height="2" fill="#c6c6c6" stroke="none" stroke-width="1" /><rect x="1" y="17" width="1" height="1" fill="#fff" stroke="none" stroke-width="1" /></svg>
<svg style="left:4px;top:48px" width="3" height="20" viewBox="0 0 3 20" shape-rendering="crispEdges"><rect x="0" y="0" width="2" height="2" fill="#c6c6c6" stroke="none" stroke-width="1" /><rect x="1" y="1" width="1" height="1" fill="#fff" stroke="none" stroke-width="1" /><rect x="0" y="4" width="2" height="2" fill="#c6c6c6" stroke="none" stroke-width="1" /><rect x="1" y="5" width="1" height="1" fill="#fff" stroke="none" stroke-width="1" /><rect x="0" y="8" width="2" height="2" fill="#c6c6c6" stroke="none" stroke-width="1" /><rect x="1" y="9" width="1" height="1" fill="#fff" stroke="none" stroke-width="1" /><rect x="0" y="12" width="2" height="2" fill="#c6c6c6" stroke="none" stroke-width="1" /><rect x="1" y="13" width="1" height="1" fill="#fff" stroke="none" stroke-width="1" /><rect x="0" y="16" width="2" height="2" fill="#c6c6c6" stroke="none" stroke-width="1" /><rect x="1" y="17" width="1" height="1" fill="#fff" stroke="none" stroke-width="1" /></svg>
<svg style="left:4px;top:74px" width="3" height="20" viewBox="0 0 3 20" shape-rendering="crispEdges"><rect x="0" y="0" width="2" height="2" fill="#c6c6c6" stroke="none" stroke-width="1" /><rect x="1" y="1" width="1" height="1" fill="#fff" stroke="none" stroke-width="1" /><rect x="0" y="4" width="2" height="2" fill="#c6c6c6" stroke="none" stroke-width="1" /><rect x="1" y="5" width="1" height="1" fill="#fff" stroke="none" stroke-width="1" /><rect x="0" y="8" width="2" height="2" fill="#c6c6c6" stroke="none" stroke-width="1" /><rect x="1" y="9" width="1" height="1" fill="#fff" stroke="none" stroke-width="1" /><rect x="0" y="12" width="2" height="2" fill="#c6c6c6" stroke="none" stroke-width="1" /><rect x="1" y="13" width="1" height="1" fill="#fff" stroke="none" stroke-width="1" /><rect x="0" y="16" width="2" height="2" fill="#c6c6c6" stroke="none" stroke-width="1" /><rect x="1" y="17" width="1" height="1" fill="#fff" stroke="none" stroke-width="1" /></svg>
<svg style="left:4px;top:101px" width="3" height="22" viewBox="0 0 3 22" shape-rendering="crispEdges"><rect x="0" y="0" width="2" height="2" fill="#c6c6c6" stroke="none" stroke-width="1" /><rect x="1" y="1" width="1" height="1" fill="#fff" stroke="none" stroke-width="1" /><rect x="0" y="4" width="2" height="2" fill="#c6c6c6" stroke="none" stroke-width="1" /><rect x="1" y="5" width="1" height="1" fill="#fff" stroke="none" stroke-width="1" /><rect x="0" y="8" width="2" height="2" fill="#c6c6c6" stroke="none" stroke-width="1" /><rect x="1" y="9" width="1" height="1" fill="#fff" stroke="none" stroke-width="1" /><rect x="0" y="12" width="2" height="2" fill="#c6c6c6" stroke="none" stroke-width="1" /><rect x="1" y="13" width="1" height="1" fill="#fff" stroke="none" stroke-width="1" /><rect x="0" y="16" width="2" height="2" fill="#c6c6c6" stroke="none" stroke-width="1" /><rect x="1" y="17" width="1" height="1" fill="#fff" stroke="none" stroke-width="1" /><rect x="0" y="20" width="2" height="2" fill="#c6c6c6" stroke="none" stroke-width="1" /><rect x="1" y="21" width="1" height="1" fill="#fff" stroke="none" stroke-width="1" /></svg>
<svg style="left:435px;top:74px" width="3" height="20" viewBox="0 0 3 20" shape-rendering="crispEdges"><rect x="0" y="0" width="2" height="2" fill="#c6c6c6" stroke="none" stroke-width="1" /><rect x="1" y="1" width="1" height="1" fill="#fff" stroke="none" stroke-width="1" /><rect x="0" y="4" width="2" height="2" fill="#c6c6c6" stroke="none" stroke-width="1" /><rect x="1" y="5" width="1" height="1" fill="#fff" stroke="none" stroke-width="1" /><rect x="0" y="8" width="2" height="2" fill="#c6c6c6" stroke="none" stroke-width="1" /><rect x="1" y="9" width="1" height="1" fill="#fff" stroke="none" stroke-width="1" /><rect x="0" y="12" width="2" height="2" fill="#c6c6c6" stroke="none" stroke-width="1" /><rect x="1" y="13" width="1" height="1" fill="#fff" stroke="none" stroke-width="1" /><rect x="0" y="16" width="2" height="2" fill="#c6c6c6" stroke="none" stroke-width="1" /><rect x="1" y="17" width="1" height="1" fill="#fff" stroke="none" stroke-width="1" /></svg>
<svg style="left:635px;top:74px" width="3" height="20" viewBox="0 0 3 20" shape-rendering="crispEdges"><rect x="0" y="0" width="2" height="2" fill="#c6c6c6" stroke="none" stroke-width="1" /><rect x="1" y="1" width="1" height="1" fill="#fff" stroke="none" stroke-width="1" /><rect x="0" y="4" width="2" height="2" fill="#c6c6c6" stroke="none" stroke-width="1" /><rect x="1" y="5" width="1" height="1" fill="#fff" stroke="none" stroke-width="1" /><rect x="0" y="8" width="2" height="2" fill="#c6c6c6" stroke="none" stroke-width="1" /><rect x="1" y="9" width="1" height="1" fill="#fff" stroke="none" stroke-width="1" /><rect x="0" y="12" width="2" height="2" fill="#c6c6c6" stroke="none" stroke-width="1" /><rect x="1" y="13" width="1" height="1" fill="#fff" stroke="none" stroke-width="1" /><rect x="0" y="16" width="2" height="2" fill="#c6c6c6" stroke="none" stroke-width="1" /><rect x="1" y="17" width="1" height="1" fill="#fff" stroke="none" stroke-width="1" /></svg>
<svg style="left:846px;top:74px" width="3" height="20" viewBox="0 0 3 20" shape-rendering="crispEdges"><rect x="0" y="0" width="2" height="2" fill="#c6c6c6" stroke="none" stroke-width="1" /><rect x="1" y="1" width="1" height="1" fill="#fff" stroke="none" stroke-width="1" /><rect x="0" y="4" width="2" height="2" fill="#c6c6c6" stroke="none" stroke-width="1" /><rect x="1" y="5" width="1" height="1" fill="#fff" stroke="none" stroke-width="1" /><rect x="0" y="8" width="2" height="2" fill="#c6c6c6" stroke="none" stroke-width="1" /><rect x="1" y="9" width="1" height="1" fill="#fff" stroke="none" stroke-width="1" /><rect x="0" y="12" width="2" height="2" fill="#c6c6c6" stroke="none" stroke-width="1" /><rect x="1" y="13" width="1" height="1" fill="#fff" stroke="none" stroke-width="1" /><rect x="0" y="16" width="2" height="2" fill="#c6c6c6" stroke="none" stroke-width="1" /><rect x="1" y="17" width="1" height="1" fill="#fff" stroke="none" stroke-width="1" /></svg>
<svg style="left:822px;top:101px" width="3" height="22" viewBox="0 0 3 22" shape-rendering="crispEdges"><rect x="0" y="0" width="2" height="2" fill="#c6c6c6" stroke="none" stroke-width="1" /><rect x="1" y="1" width="1" height="1" fill="#fff" stroke="none" stroke-width="1" /><rect x="0" y="4" width="2" height="2" fill="#c6c6c6" stroke="none" stroke-width="1" /><rect x="1" y="5" width="1" height="1" fill="#fff" stroke="none" stroke-width="1" /><rect x="0" y="8" width="2" height="2" fill="#c6c6c6" stroke="none" stroke-width="1" /><rect x="1" y="9" width="1" height="1" fill="#fff" stroke="none" stroke-width="1" /><rect x="0" y="12" width="2" height="2" fill="#c6c6c6" stroke="none" stroke-width="1" /><rect x="1" y="13" width="1" height="1" fill="#fff" stroke="none" stroke-width="1" /><rect x="0" y="16" width="2" height="2" fill="#c6c6c6" stroke="none" stroke-width="1" /><rect x="1" y="17" width="1" height="1" fill="#fff" stroke="none" stroke-width="1" /><rect x="0" y="20" width="2" height="2" fill="#c6c6c6" stroke="none" stroke-width="1" /><rect x="1" y="21" width="1" height="1" fill="#fff" stroke="none" stroke-width="1" /></svg>
<div style="left:0px;top:127px;width:1920px;height:913px;background:#f0f0f0"></div>
<div style="left:0px;top:127px;width:1656px;height:1px;background:#f8f8f8"></div>
<div style="left:27px;top:141px;width:1629px;height:1px;background:#b0b0b0"></div>
<div style="left:0px;top:127px;width:1px;height:507px;background:#e6eef8"></div>
<div style="left:25.5px;top:128px;width:1.5px;height:846px;background:#adadad"></div>
<div style="left:0px;top:633px;width:26px;height:1px;background:#adadad"></div>
<div style="left:2px;top:136px;width:22px;height:22px;background:#b9d7f3;border:1px solid #6ea9e6;box-sizing:border-box"></div>
<svg style="left:5px;top:140px" width="16" height="16" viewBox="0 0 16 16" ><path d="M3 14c.5-4 3-8 7-12" stroke="#000" fill="none" stroke-width="1.3" stroke-dasharray="4 1.500"/><rect x="5.5" y="4.5" width="3" height="3" fill="#0000ff" stroke="none" stroke-width="1" /><path d="M8.500 7.500v8l2-2 1.500 3 1.300-.6-1.500-3h2.700z" stroke="#000" fill="#fff" stroke-width="0.9" /></svg>
<svg style="left:20px;top:154px" width="4" height="4" viewBox="0 0 4 4" ><path d="M4 0v4h-4z" fill="#000"/></svg>
<svg style="left:5px;top:162px" width="16" height="16" viewBox="0 0 16 16" ><path d="M1.500 14.500l13-13" stroke="#555" fill="none" stroke-width="0.9"  stroke-dasharray="2 1.500"/><rect x="4.5" y="10.5" width="2" height="2" fill="#fff" stroke="#1f1fff" stroke-width="1" /><rect x="10.5" y="4.5" width="2" height="2" fill="#fff" stroke="#1f1fff" stroke-width="1" /></svg>
<svg style="left:20px;top:176px" width="4" height="4" viewBox="0 0 4 4" ><path d="M4 0v4h-4z" fill="#000"/></svg>
<svg style="left:5px;top:184px" width="16" height="16" viewBox="0 0 16 16" ><circle cx="8" cy="8" r="1.3" fill="#333" stroke="none" stroke-width="1" /></svg>
<svg style="left:20px;top:198px" width="4" height="4" viewBox="0 0 4 4" ><path d="M4 0v4h-4z" fill="#000"/></svg>
<svg style="left:5px;top:206px" width="16" height="16" viewBox="0 0 16 16" ><path d="M3 13l9.500-9.500" stroke="#222" fill="none" stroke-width="1" /><rect x="2.5" y="12.5" width="2" height="2" fill="#fff" stroke="#1f1fff" stroke-width="1" /><rect x="12.5" y="2.5" width="2" height="2" fill="#fff" stroke="#1f1fff" stroke-width="1" /></svg>
<svg style="left:20px;top:220px" width="4" height="4" viewBox="0 0 4 4" ><path d="M4 0v4h-4z" fill="#000"/></svg>
<svg style="left:5px;top:228px" width="16" height="16" viewBox="0 0 16 16" ><path d="M2 9.500l8-7.500M5.500 14l8-7.500" stroke="#222" fill="none" stroke-width="1" /><rect x="2.5" y="11.5" width="2" height="2" fill="#fff" stroke="#1f1fff" stroke-width="1" /><rect x="12.5" y="2.5" width="2" height="2" fill="#fff" stroke="#1f1fff" stroke-width="1" /></svg>
<svg style="left:20px;top:242px" width="4" height="4" viewBox="0 0 4 4" ><path d="M4 0v4h-4z" fill="#000"/></svg>
<svg style="left:5px;top:250px" width="16" height="16" viewBox="0 0 16 16" ><path d="M2 9l7-7M6 14l8-7.500" stroke="#222" fill="none" stroke-width="1" /><path d="M4 11.500l7-7" stroke="#222" fill="none" stroke-width="0.9" stroke-dasharray="1 1"/><rect x="2.5" y="12.5" width="2" height="2" fill="#fff" stroke="#1f1fff" stroke-width="1" /><rect x="12.5" y="1.5" width="2" height="2" fill="#fff" stroke="#1f1fff" stroke-width="1" /></svg>
<svg style="left:20px;top:264px" width="4" height="4" viewBox="0 0 4 4" ><path d="M4 0v4h-4z" fill="#000"/></svg>
<svg style="left:5px;top:272px" width="16" height="16" viewBox="0 0 16 16" ><circle cx="7.5" cy="8" r="6.5" fill="none" stroke="#222" stroke-width="1" /><rect x="7.5" y="7.5" width="2" height="2" fill="#fff" stroke="#1f1fff" stroke-width="1" /><rect x="13.5" y="7.5" width="2" height="2" fill="#fff" stroke="#1f1fff" stroke-width="1" /></svg>
<svg style="left:20px;top:286px" width="4" height="4" viewBox="0 0 4 4" ><path d="M4 0v4h-4z" fill="#000"/></svg>
<svg style="left:5px;top:294px" width="16" height="16" viewBox="0 0 16 16" ><path d="M2 13c-2-6 2-9.500 6-9.500s6.500 3 6 7" stroke="#222" fill="none" stroke-width="1.1" /><path d="M8 9h6" stroke="#222" fill="none" stroke-width="0.8" /><rect x="1.5" y="12.5" width="2" height="2" fill="#fff" stroke="#1f1fff" stroke-width="1" /><rect x="7.5" y="8.5" width="2" height="2" fill="#fff" stroke="#1f1fff" stroke-width="1" /><rect x="13.5" y="8.5" width="2" height="2" fill="#fff" stroke="#1f1fff" stroke-width="1" /></svg>
<svg style="left:20px;top:308px" width="4" height="4" viewBox="0 0 4 4" ><path d="M4 0v4h-4z" fill="#000"/></svg>
<svg style="left:5px;top:316px" width="16" height="16" viewBox="0 0 16 16" ><path d="M2 14c1-8 4-10 6-10s5 3 6 10" stroke="#222" fill="none" stroke-width="1.1" /><rect x="3.5" y="1.5" width="2" height="2" fill="#fff" stroke="#1f1fff" stroke-width="1" /><rect x="11.5" y="1.5" width="2" height="2" fill="#fff" stroke="#1f1fff" stroke-width="1" /><rect x="1.5" y="13.5" width="2" height="2" fill="#fff" stroke="#1f1fff" stroke-width="1" /><rect x="13.5" y="12.5" width="2" height="2" fill="#fff" stroke="#1f1fff" stroke-width="1" /></svg>
<svg style="left:20px;top:330px" width="4" height="4" viewBox="0 0 4 4" ><path d="M4 0v4h-4z" fill="#000"/></svg>
<svg style="left:5px;top:338px" width="16" height="16" viewBox="0 0 16 16" ><path d="M2.500 10l3-6.500c2-2 7 0 8 2.500l-3 6.500c-2 2-7 0-8-2.500z" stroke="#222" fill="#fff" stroke-width="1" /><path d="M5.500 3.500c1.500 3 5 4 8 2.500" stroke="#222" fill="none" stroke-width="0.8" /><path d="M2.500 10c2 3 5 4 8 2.500" stroke="#3030e0" fill="none" stroke-width="1.2" /><path d="M9 7l2 5" stroke="#888" fill="none" stroke-width="2" /></svg>
<svg style="left:20px;top:352px" width="4" height="4" viewBox="0 0 4 4" ><path d="M4 0v4h-4z" fill="#000"/></svg>
<svg style="left:5px;top:360px" width="16" height="16" viewBox="0 0 16 16" ><path d="M4 5.500l7-3.500v9l-7 3.500z" stroke="#222" fill="#777" stroke-width="1" /><path d="M11 2l2 1v9l-2-1" stroke="#222" fill="#bbb" stroke-width="0.8" /><rect x="3.5" y="13.5" width="2" height="2" fill="#fff" stroke="#1f1fff" stroke-width="1" /><rect x="12.5" y="10.5" width="2" height="2" fill="#fff" stroke="#1f1fff" stroke-width="1" /></svg>
<svg style="left:20px;top:374px" width="4" height="4" viewBox="0 0 4 4" ><path d="M4 0v4h-4z" fill="#000"/></svg>
<svg style="left:5px;top:381px" width="16" height="16" viewBox="0 0 16 16" ><path d="M8 2.500v11M2.500 8h11M8 2.500l-2 2M8 2.500l2 2M8 13.500l-2-2M8 13.500l2-2M2.500 8l2-2M2.500 8l2 2M13.500 8l-2-2M13.500 8l-2 2" stroke="#444" fill="none" stroke-width="0.9" /><path d="M1 0.500h14M1 15.500h14" stroke="#999" fill="none" stroke-width="0.8" /></svg>
<svg style="left:5px;top:403px" width="16" height="16" viewBox="0 0 16 16" ><text x="0.5" y="15" font-size="19" fill="#222" font-family="Liberation Sans" textLength="15" lengthAdjust="spacingAndGlyphs">A</text></svg>
<svg style="left:20px;top:417px" width="4" height="4" viewBox="0 0 4 4" ><path d="M4 0v4h-4z" fill="#000"/></svg>
<svg style="left:5px;top:425px" width="16" height="16" viewBox="0 0 16 16" ><rect x="1.5" y="1.5" width="7" height="7" fill="#fff" stroke="#222" stroke-width="1" /><rect x="5.5" y="5.5" width="9" height="9" fill="#4040f0" stroke="#3030c0" stroke-width="0.6" /><path d="M8 1.500c4 0 6.500 2.500 6.500 6.500" stroke="#e02020" fill="none" stroke-width="1" /><rect x="2" y="2" width="3" height="3" fill="#fff" stroke="#e02020" stroke-width="1" /></svg>
<svg style="left:20px;top:439px" width="4" height="4" viewBox="0 0 4 4" ><path d="M4 0v4h-4z" fill="#000"/></svg>
<svg style="left:5px;top:447px" width="16" height="16" viewBox="0 0 16 16" ><circle cx="8" cy="8" r="6.8" fill="#ffffa0" stroke="#20a020" stroke-width="1.4" /><path d="M4 4l3 3M12 4l-3 3M4 12l3-3M12 12l-3-3M7 4.500v2.500h-2.500M9 4.500v2.500h2.500M7 11.500v-2.500h-2.500M9 11.500v-2.500h2.500" stroke="#2020c0" fill="none" stroke-width="1.1" /></svg>
<svg style="left:20px;top:461px" width="4" height="4" viewBox="0 0 4 4" ><path d="M4 0v4h-4z" fill="#000"/></svg>
<svg style="left:5px;top:469px" width="16" height="16" viewBox="0 0 16 16" ><ellipse cx="3.5" cy="3.5" rx="2.2" ry="1.6" fill="none" stroke="#222" stroke-width="1" /><ellipse cx="5.5" cy="3.5" rx="2.2" ry="1.6" fill="none" stroke="#222" stroke-width="1" /><path d="M4 13l7-7M11 6l-3 .5M11 6l-.5 3" stroke="#222" fill="none" stroke-width="1" /><rect x="12.5" y="2.5" width="2" height="2" fill="#fff" stroke="#1f1fff" stroke-width="1" /><rect x="2.5" y="12.5" width="2" height="2" fill="#fff" stroke="#1f1fff" stroke-width="1" /></svg>
<svg style="left:20px;top:483px" width="4" height="4" viewBox="0 0 4 4" ><path d="M4 0v4h-4z" fill="#000"/></svg>
<svg style="left:5px;top:491px" width="16" height="16" viewBox="0 0 16 16" ><path d="M3 12c-3-5 1-10 6-9.500" stroke="#e02020" fill="none" stroke-width="1.2" /><path d="M9 2.500c5 1 6 7 2.500 11" stroke="#222" fill="none" stroke-width="1" /><path d="M8 9l5-6" stroke="#999" fill="none" stroke-width="0.7" stroke-dasharray="1 1.500"/></svg>
<svg style="left:20px;top:505px" width="4" height="4" viewBox="0 0 4 4" ><path d="M4 0v4h-4z" fill="#000"/></svg>
<svg style="left:5px;top:513px" width="16" height="16" viewBox="0 0 16 16" ><circle cx="10.5" cy="6" r="4.5" fill="#f5f6f7" stroke="#aaa" stroke-width="1" /><path d="M2.500 6.500h4c0 2 2 4 4.500 4v4h-8.500z" stroke="#3a9a9a" fill="#3a9a9a" stroke-width="0.5" /><rect x="2.5" y="6.5" width="8.5" height="8" fill="none" stroke="#2a2ab0" stroke-width="1.3" /></svg>
<svg style="left:20px;top:527px" width="4" height="4" viewBox="0 0 4 4" ><path d="M4 0v4h-4z" fill="#000"/></svg>
<svg style="left:5px;top:535px" width="16" height="16" viewBox="0 0 16 16" ><path d="M2 3l3-2 5 5-3 2z" stroke="#222" fill="#f0e020" stroke-width="1" /><path d="M3.500 4.500l3-2M7 8l2 1 1-3" stroke="#222" fill="#222" stroke-width="0.8" /><rect x="6" y="11" width="1.3" height="1.3" fill="#30a0a0" stroke="none" stroke-width="1" /><rect x="9.5" y="10" width="1.3" height="1.3" fill="#30a0a0" stroke="none" stroke-width="1" /><rect x="12.5" y="12.5" width="1.3" height="1.3" fill="#30a0a0" stroke="none" stroke-width="1" /><rect x="8.5" y="14" width="1.3" height="1.3" fill="#30a0a0" stroke="none" stroke-width="1" /><rect x="12" y="8.5" width="1.3" height="1.3" fill="#30a0a0" stroke="none" stroke-width="1" /></svg>
<svg style="left:20px;top:549px" width="4" height="4" viewBox="0 0 4 4" ><path d="M4 0v4h-4z" fill="#000"/></svg>
<div style="left:4px;top:556px;width:18px;height:1px;background:#8c8c8c"></div>
<div style="left:4px;top:584px;width:18px;height:1px;background:#8c8c8c"></div>
<svg style="left:5px;top:563px" width="16" height="16" viewBox="0 0 16 16" ><rect x="3.5" y="4" width="9" height="9" fill="none" stroke="#a8a8a8" stroke-width="1.3" /><rect x="2" y="2.5" width="3" height="3" fill="#a8a8a8" stroke="none" stroke-width="1" /><rect x="11" y="2.5" width="3" height="3" fill="#a8a8a8" stroke="none" stroke-width="1" /><rect x="2" y="11.5" width="3" height="3" fill="#a8a8a8" stroke="none" stroke-width="1" /><rect x="11" y="11.5" width="3" height="3" fill="#a8a8a8" stroke="none" stroke-width="1" /></svg>
<svg style="left:5px;top:591px" width="16" height="16" viewBox="0 0 16 16" ><rect x="1.5" y="1.5" width="8" height="9" fill="none" stroke="#a8a8a8" stroke-width="1.1" /><rect x="3.5" y="3.5" width="8" height="9" fill="none" stroke="#a8a8a8" stroke-width="1.1" /><rect x="5.5" y="5.5" width="8" height="9" fill="#eee" stroke="#a8a8a8" stroke-width="1.1" /></svg>
<svg style="left:20px;top:605px" width="4" height="4" viewBox="0 0 4 4" ><path d="M4 0v4h-4z" fill="#000"/></svg>
<svg style="left:5px;top:613px" width="16" height="16" viewBox="0 0 16 16" ><path d="M2 14l12-12" stroke="#a8a8a8" fill="none" stroke-width="1" stroke-dasharray="1 1"/><path d="M1.500 14.500v-5l5 5zM10 2.500h4.500v4.500z" stroke="#a8a8a8" fill="#a8a8a8" stroke-width="0.8" /></svg>
<svg style="left:20px;top:627px" width="4" height="4" viewBox="0 0 4 4" ><path d="M4 0v4h-4z" fill="#000"/></svg>
<svg style="left:2px;top:130px" width="22" height="3" viewBox="0 0 22 3" shape-rendering="crispEdges"><rect x="0" y="0" width="2" height="2" fill="#c6c6c6" stroke="none" stroke-width="1" /><rect x="1" y="1" width="1" height="1" fill="#fff" stroke="none" stroke-width="1" /><rect x="4" y="0" width="2" height="2" fill="#c6c6c6" stroke="none" stroke-width="1" /><rect x="5" y="1" width="1" height="1" fill="#fff" stroke="none" stroke-width="1" /><rect x="8" y="0" width="2" height="2" fill="#c6c6c6" stroke="none" stroke-width="1" /><rect x="9" y="1" width="1" height="1" fill="#fff" stroke="none" stroke-width="1" /><rect x="12" y="0" width="2" height="2" fill="#c6c6c6" stroke="none" stroke-width="1" /><rect x="13" y="1" width="1" height="1" fill="#fff" stroke="none" stroke-width="1" /><rect x="16" y="0" width="2" height="2" fill="#c6c6c6" stroke="none" stroke-width="1" /><rect x="17" y="1" width="1" height="1" fill="#fff" stroke="none" stroke-width="1" /><rect x="20" y="0" width="2" height="2" fill="#c6c6c6" stroke="none" stroke-width="1" /><rect x="21" y="1" width="1" height="1" fill="#fff" stroke="none" stroke-width="1" /></svg>
<div style="left:28px;top:128px;width:13px;height:13px;background:#b9b8a8"></div>
<svg style="left:28px;top:128px" width="13" height="13" viewBox="0 0 13 13" ><path d="M3.5 1.500v7h7M1.500 3.500l2-2 2 2M8.500 6.500l2 2-2 2" stroke="#000" fill="none" stroke-width="1.2"/></svg>
<div style="left:623px;top:127px;width:1px;height:14px;background:#ff00ff"></div>
<div style="left:27px;top:937px;width:14px;height:1px;background:#ff00ff"></div>
<div style="left:41px;top:141px;width:1598px;height:813px;background:#fff"></div>
<div style="left:41px;top:141px;width:1595px;height:3px;background:#a6a6a6"></div>
<div style="left:41px;top:141px;width:3px;height:810px;background:#a6a6a6"></div>
<div style="left:43px;top:143px;width:1593px;height:1px;background:#696969"></div>
<div style="left:43px;top:143px;width:1px;height:808px;background:#696969"></div>
<div style="left:1636px;top:141px;width:1px;height:811px;background:#e0e0e0"></div>
<div style="left:41px;top:951px;width:1596px;height:1px;background:#dcdcdc"></div>
<svg width="1592" height="807" viewBox="44 144 1592 807" shape-rendering="crispEdges" style="position:absolute;left:44px;top:144px">
<polyline points="860.5,236.5 860.5,201.5 855.5,202.5 842.5,207.5 829.5,214.5 816.5,225.5 804.5,238.5 791.5,253.5 779.5,271.5 767.5,291.5 757.5,311.5 745.5,336.5 735.5,361.5 726.5,387.5 717.5,414.5 703.5,469.5 698.5,498.5 693.5,526.5 690.5,554.5 688.5,583.5 688.5,594.5 697.5,593.5 698.5,623.5 688.5,623.5 689.5,646.5 694.5,684.5 698.5,707.5 704.5,729.5 708.5,741.5 721.5,734.5 727.5,751.5 713.5,758.5 718.5,771.5 727.5,790.5 736.5,807.5 746.5,823.5 757.5,838.5 768.5,851.5 780.5,864.5 792.5,874.5 805.5,883.5 818.5,890.5 831.5,896.5 844.5,900.5 856.5,903.5 863.5,903.5 863.5,867.5 878.5,867.5 878.5,903.5 884.5,902.5 897.5,899.5 910.5,895.5 923.5,889.5 936.5,881.5 948.5,871.5 960.5,861.5 972.5,848.5 983.5,834.5 994.5,819.5 1004.5,802.5 1013.5,785.5 1021.5,765.5 1026.5,752.5 1012.5,746.5 1018.5,729.5 1032.5,736.5 1035.5,724.5 1043.5,689.5 1048.5,654.5 1050.5,628.5 1050.5,617.5 1040.5,617.5 1040.5,588.5 1050.5,588.5 1050.5,576.5 1047.5,548.5 1044.5,520.5 1039.5,492.5 1034.5,464.5 1024.5,426.5 1013.5,389.5 1010.5,382.5 1001.5,357.5 990.5,332.5 979.5,309.5 968.5,288.5 956.5,268.5 943.5,250.5 931.5,236.5 918.5,223.5 905.5,213.5 892.5,205.5 886.5,203.5 880.5,202.5 875.5,201.5 875.5,236.5" fill="none" stroke="#00ff00" stroke-width="1"/>
<line x1="860.5" y1="236.5" x2="875.5" y2="236.5" stroke="#0000ff"/>
<polygon points="826.5,266.5 826.3,266.5 825.7,266.5 824.9,266.4 823.6,266.3 822.1,266.2 820.4,266.3 818.6,266.8 816.6,267.5 814.4,268.6 812.2,270.0 810.1,271.7 808.2,273.9 806.4,276.3 804.7,278.7 803.2,281.2 801.9,283.7 801.0,285.7 800.7,287.4 800.5,288.5 790.5,307.5 790.1,308.5 789.6,309.8 789.0,311.4 788.3,312.9 787.5,314.5 786.6,316.2 785.9,318.0 785.4,319.9 785.1,322.1 784.9,324.5 785.0,326.8 785.3,328.9 786.0,330.6 786.9,332.2 788.0,333.6 789.2,334.9 790.5,335.9 791.8,336.7 793.3,337.2 795.0,337.6 796.6,337.9 798.0,338.1 799.3,338.2 800.2,338.3 800.9,338.4 801.3,338.5 801.5,338.5 935.5,336.5 935.7,336.5 936.0,336.4 936.5,336.3 937.3,336.2 938.2,336.1 939.3,335.9 940.6,335.6 942.0,335.2 943.2,334.7 944.4,333.9 945.6,332.9 946.8,331.6 947.9,330.2 948.9,328.6 949.8,326.9 950.5,324.9 951.0,322.6 951.3,320.2 951.5,317.9 951.4,315.8 951.0,313.8 950.4,311.8 949.7,310.0 948.8,308.3 947.6,306.7 946.4,305.4 945.5,304.5 935.5,286.5 934.6,284.6 933.4,282.1 931.9,279.6 930.3,277.0 928.4,274.5 926.4,272.5 924.2,270.8 922.0,269.4 919.9,268.1 917.8,267.1 915.9,266.3 914.2,265.7 912.8,265.4 911.5,265.3 910.5,265.3 909.6,265.4 909.0,265.5 908.7,265.5 908.5,265.5" fill="none" stroke="#00ff00" stroke-width="1"/>
<polygon points="753.5,441.5 753.2,441.6 752.7,441.7 751.9,441.8 750.8,442.0 749.4,442.2 747.9,442.5 746.5,443.0 745.2,443.7 744.1,444.6 742.9,445.8 741.9,447.2 741.0,448.6 740.3,449.8 739.9,451.1 739.7,452.5 739.6,453.7 739.5,454.5 734.5,476.5 731.5,490.5 729.5,503.5 727.5,516.5 725.5,530.5 723.5,557.5 722.5,563.5 723.5,656.5 723.5,659.5 724.5,662.5 724.5,665.5 777.5,817.5 778.0,819.0 778.9,821.2 779.9,823.3 781.2,825.4 782.7,827.5 784.4,829.6 786.3,831.6 788.3,833.5 790.0,834.9 791.7,835.9 793.2,836.7 794.7,837.3 796.3,837.7 798.0,838.0 799.5,838.2 800.8,838.3 801.7,838.4 802.3,838.5 802.5,838.5 870.5,837.5 870.5,756.5 983.5,754.5 1014.5,660.5 1015.5,656.5 1016.5,653.5 1016.5,650.5 1015.5,558.5 1015.5,552.5 1012.5,525.5 1010.5,512.5 1008.5,499.5 1006.5,485.5 1003.5,472.5 997.5,450.5 997.2,449.4 996.9,447.9 996.4,446.3 995.7,444.8 994.8,443.6 993.8,442.4 992.6,441.3 991.2,440.4 989.9,439.6 988.3,439.2 986.5,438.9 984.6,438.7 982.9,438.6 981.5,438.6 980.5,438.6 979.8,438.5 979.5,438.5" fill="none" stroke="#00ff00" stroke-width="1"/>
<polygon points="818.3,380.0 818.1,376.9 817.6,373.9 816.8,371.0 815.6,368.2 814.2,365.6 812.5,363.3 810.6,361.3 808.4,359.6 806.1,358.2 803.6,357.2 801.1,356.6 798.5,356.4 795.9,356.6 793.4,357.2 790.9,358.2 788.6,359.6 786.4,361.3 784.5,363.3 782.8,365.6 781.4,368.2 780.2,371.0 779.4,373.9 778.9,376.9 778.7,380.0 778.9,383.1 779.4,386.1 780.2,389.0 781.4,391.8 782.8,394.4 784.5,396.7 786.4,398.7 788.6,400.4 790.9,401.8 793.4,402.8 795.9,403.4 798.5,403.6 801.1,403.4 803.6,402.8 806.1,401.8 808.4,400.4 810.6,398.7 812.5,396.7 814.2,394.4 815.6,391.8 816.8,389.0 817.6,386.1 818.1,383.1 818.3,380.0" fill="none" stroke="#00ff00" stroke-width="1"/>
<polygon points="958.3,377.2 958.1,374.1 957.6,371.1 956.8,368.2 955.6,365.4 954.2,362.8 952.5,360.5 950.6,358.5 948.4,356.8 946.1,355.4 943.6,354.4 941.1,353.8 938.5,353.6 935.9,353.8 933.4,354.4 930.9,355.4 928.6,356.8 926.4,358.5 924.5,360.5 922.8,362.8 921.4,365.4 920.2,368.2 919.4,371.1 918.9,374.1 918.7,377.2 918.9,380.3 919.4,383.3 920.2,386.2 921.4,389.0 922.8,391.6 924.5,393.9 926.4,395.9 928.6,397.6 930.9,399.0 933.4,400.0 935.9,400.6 938.5,400.8 941.1,400.6 943.6,400.0 946.1,399.0 948.4,397.6 950.6,395.9 952.5,393.9 954.2,391.6 955.6,389.0 956.8,386.2 957.6,383.3 958.1,380.3 958.3,377.2" fill="none" stroke="#00ff00" stroke-width="1"/>
<polygon points="952.2,805.1 952.0,802.0 951.6,799.0 950.8,796.1 949.8,793.3 948.4,790.6 946.8,788.1 945.0,785.8 942.9,783.8 940.6,782.0 938.2,780.5 935.7,779.3 933.0,778.5 930.3,778.0 927.5,777.8 924.7,778.0 922.0,778.5 919.3,779.3 916.8,780.5 914.4,782.0 912.1,783.8 910.0,785.8 908.2,788.1 906.6,790.6 905.2,793.3 904.2,796.1 903.4,799.0 903.0,802.0 902.8,805.1 903.0,808.2 903.4,811.2 904.2,814.1 905.2,816.9 906.6,819.6 908.2,822.1 910.0,824.4 912.1,826.4 914.4,828.2 916.8,829.7 919.3,830.9 922.0,831.7 924.7,832.2 927.5,832.4 930.3,832.2 933.0,831.7 935.7,830.9 938.2,829.7 940.6,828.2 942.9,826.4 945.0,824.4 946.8,822.1 948.4,819.6 949.8,816.9 950.8,814.1 951.6,811.2 952.0,808.2 952.2,805.1" fill="none" stroke="#00ff00" stroke-width="1"/>
<g fill="#0000ff" stroke="#000" stroke-width="1"><path d="M856.5 232.5h7v7h-7z"/><path d="M856.5 197.5h7v7h-7z"/><path d="M851.5 198.5h7v7h-7z"/><path d="M838.5 203.5h7v7h-7z"/><path d="M825.5 210.5h7v7h-7z"/><path d="M812.5 221.5h7v7h-7z"/><path d="M800.5 234.5h7v7h-7z"/><path d="M787.5 249.5h7v7h-7z"/><path d="M775.5 267.5h7v7h-7z"/><path d="M763.5 287.5h7v7h-7z"/><path d="M753.5 307.5h7v7h-7z"/><path d="M741.5 332.5h7v7h-7z"/><path d="M731.5 357.5h7v7h-7z"/><path d="M722.5 383.5h7v7h-7z"/><path d="M713.5 410.5h7v7h-7z"/><path d="M699.5 465.5h7v7h-7z"/><path d="M694.5 494.5h7v7h-7z"/><path d="M689.5 522.5h7v7h-7z"/><path d="M686.5 550.5h7v7h-7z"/><path d="M684.5 579.5h7v7h-7z"/><path d="M684.5 590.5h7v7h-7z"/><path d="M693.5 589.5h7v7h-7z"/><path d="M694.5 619.5h7v7h-7z"/><path d="M684.5 619.5h7v7h-7z"/><path d="M685.5 642.5h7v7h-7z"/><path d="M690.5 680.5h7v7h-7z"/><path d="M694.5 703.5h7v7h-7z"/><path d="M700.5 725.5h7v7h-7z"/><path d="M704.5 737.5h7v7h-7z"/><path d="M717.5 730.5h7v7h-7z"/><path d="M723.5 747.5h7v7h-7z"/><path d="M709.5 754.5h7v7h-7z"/><path d="M714.5 767.5h7v7h-7z"/><path d="M723.5 786.5h7v7h-7z"/><path d="M732.5 803.5h7v7h-7z"/><path d="M742.5 819.5h7v7h-7z"/><path d="M753.5 834.5h7v7h-7z"/><path d="M764.5 847.5h7v7h-7z"/><path d="M776.5 860.5h7v7h-7z"/><path d="M788.5 870.5h7v7h-7z"/><path d="M801.5 879.5h7v7h-7z"/><path d="M814.5 886.5h7v7h-7z"/><path d="M827.5 892.5h7v7h-7z"/><path d="M840.5 896.5h7v7h-7z"/><path d="M852.5 899.5h7v7h-7z"/><path d="M859.5 899.5h7v7h-7z"/><path d="M859.5 863.5h7v7h-7z"/><path d="M874.5 863.5h7v7h-7z"/><path d="M874.5 899.5h7v7h-7z"/><path d="M880.5 898.5h7v7h-7z"/><path d="M893.5 895.5h7v7h-7z"/><path d="M906.5 891.5h7v7h-7z"/><path d="M919.5 885.5h7v7h-7z"/><path d="M932.5 877.5h7v7h-7z"/><path d="M944.5 867.5h7v7h-7z"/><path d="M956.5 857.5h7v7h-7z"/><path d="M968.5 844.5h7v7h-7z"/><path d="M979.5 830.5h7v7h-7z"/><path d="M990.5 815.5h7v7h-7z"/><path d="M1000.5 798.5h7v7h-7z"/><path d="M1009.5 781.5h7v7h-7z"/><path d="M1017.5 761.5h7v7h-7z"/><path d="M1022.5 748.5h7v7h-7z"/><path d="M1008.5 742.5h7v7h-7z"/><path d="M1014.5 725.5h7v7h-7z"/><path d="M1028.5 732.5h7v7h-7z"/><path d="M1031.5 720.5h7v7h-7z"/><path d="M1039.5 685.5h7v7h-7z"/><path d="M1044.5 650.5h7v7h-7z"/><path d="M1046.5 624.5h7v7h-7z"/><path d="M1046.5 613.5h7v7h-7z"/><path d="M1036.5 613.5h7v7h-7z"/><path d="M1036.5 584.5h7v7h-7z"/><path d="M1046.5 584.5h7v7h-7z"/><path d="M1046.5 572.5h7v7h-7z"/><path d="M1043.5 544.5h7v7h-7z"/><path d="M1040.5 516.5h7v7h-7z"/><path d="M1035.5 488.5h7v7h-7z"/><path d="M1030.5 460.5h7v7h-7z"/><path d="M1020.5 422.5h7v7h-7z"/><path d="M1009.5 385.5h7v7h-7z"/><path d="M1006.5 378.5h7v7h-7z"/><path d="M997.5 353.5h7v7h-7z"/><path d="M986.5 328.5h7v7h-7z"/><path d="M975.5 305.5h7v7h-7z"/><path d="M964.5 284.5h7v7h-7z"/><path d="M952.5 264.5h7v7h-7z"/><path d="M939.5 246.5h7v7h-7z"/><path d="M927.5 232.5h7v7h-7z"/><path d="M914.5 219.5h7v7h-7z"/><path d="M901.5 209.5h7v7h-7z"/><path d="M888.5 201.5h7v7h-7z"/><path d="M882.5 199.5h7v7h-7z"/><path d="M876.5 198.5h7v7h-7z"/><path d="M870.5 196.5h7v7h-7z"/><path d="M871.5 232.5h7v7h-7z"/></g>
<g fill="#0000ff" stroke="#000" stroke-width="1"><path d="M904.5 261.5h7v7h-7z"/><path d="M904.5 261.5h7v7h-7z"/><path d="M905.5 261.5h7v7h-7z"/><path d="M905.5 261.5h7v7h-7z"/><path d="M906.5 261.5h7v7h-7z"/><path d="M907.5 261.5h7v7h-7z"/><path d="M908.5 261.5h7v7h-7z"/><path d="M910.5 261.5h7v7h-7z"/><path d="M911.5 262.5h7v7h-7z"/><path d="M913.5 263.5h7v7h-7z"/><path d="M915.5 264.5h7v7h-7z"/><path d="M917.5 265.5h7v7h-7z"/><path d="M920.5 266.5h7v7h-7z"/><path d="M922.5 268.5h7v7h-7z"/><path d="M924.5 270.5h7v7h-7z"/><path d="M926.5 272.5h7v7h-7z"/><path d="M927.5 275.5h7v7h-7z"/><path d="M929.5 278.5h7v7h-7z"/><path d="M930.5 280.5h7v7h-7z"/><path d="M931.5 282.5h7v7h-7z"/><path d="M941.5 300.5h7v7h-7z"/><path d="M942.5 301.5h7v7h-7z"/><path d="M943.5 302.5h7v7h-7z"/><path d="M944.5 304.5h7v7h-7z"/><path d="M945.5 305.5h7v7h-7z"/><path d="M946.5 307.5h7v7h-7z"/><path d="M947.5 309.5h7v7h-7z"/><path d="M947.5 311.5h7v7h-7z"/><path d="M947.5 313.5h7v7h-7z"/><path d="M947.5 316.5h7v7h-7z"/><path d="M946.5 318.5h7v7h-7z"/><path d="M946.5 320.5h7v7h-7z"/><path d="M945.5 322.5h7v7h-7z"/><path d="M944.5 324.5h7v7h-7z"/><path d="M943.5 326.5h7v7h-7z"/><path d="M942.5 327.5h7v7h-7z"/><path d="M941.5 328.5h7v7h-7z"/><path d="M940.5 329.5h7v7h-7z"/><path d="M939.5 330.5h7v7h-7z"/><path d="M937.5 331.5h7v7h-7z"/><path d="M936.5 331.5h7v7h-7z"/><path d="M935.5 331.5h7v7h-7z"/><path d="M934.5 332.5h7v7h-7z"/><path d="M933.5 332.5h7v7h-7z"/><path d="M932.5 332.5h7v7h-7z"/><path d="M931.5 332.5h7v7h-7z"/><path d="M931.5 332.5h7v7h-7z"/><path d="M931.5 332.5h7v7h-7z"/><path d="M797.5 334.5h7v7h-7z"/><path d="M797.5 334.5h7v7h-7z"/><path d="M796.5 334.5h7v7h-7z"/><path d="M796.5 334.5h7v7h-7z"/><path d="M795.5 334.5h7v7h-7z"/><path d="M794.5 334.5h7v7h-7z"/><path d="M792.5 333.5h7v7h-7z"/><path d="M790.5 333.5h7v7h-7z"/><path d="M789.5 333.5h7v7h-7z"/><path d="M787.5 332.5h7v7h-7z"/><path d="M786.5 331.5h7v7h-7z"/><path d="M785.5 330.5h7v7h-7z"/><path d="M783.5 329.5h7v7h-7z"/><path d="M782.5 328.5h7v7h-7z"/><path d="M781.5 326.5h7v7h-7z"/><path d="M781.5 324.5h7v7h-7z"/><path d="M780.5 322.5h7v7h-7z"/><path d="M780.5 320.5h7v7h-7z"/><path d="M781.5 318.5h7v7h-7z"/><path d="M781.5 315.5h7v7h-7z"/><path d="M781.5 313.5h7v7h-7z"/><path d="M782.5 312.5h7v7h-7z"/><path d="M783.5 310.5h7v7h-7z"/><path d="M784.5 308.5h7v7h-7z"/><path d="M784.5 307.5h7v7h-7z"/><path d="M785.5 305.5h7v7h-7z"/><path d="M786.5 304.5h7v7h-7z"/><path d="M786.5 303.5h7v7h-7z"/><path d="M796.5 284.5h7v7h-7z"/><path d="M796.5 283.5h7v7h-7z"/><path d="M797.5 281.5h7v7h-7z"/><path d="M797.5 279.5h7v7h-7z"/><path d="M799.5 277.5h7v7h-7z"/><path d="M800.5 274.5h7v7h-7z"/><path d="M802.5 272.5h7v7h-7z"/><path d="M804.5 269.5h7v7h-7z"/><path d="M806.5 267.5h7v7h-7z"/><path d="M808.5 266.5h7v7h-7z"/><path d="M810.5 264.5h7v7h-7z"/><path d="M812.5 263.5h7v7h-7z"/><path d="M814.5 262.5h7v7h-7z"/><path d="M816.5 262.5h7v7h-7z"/><path d="M818.5 262.5h7v7h-7z"/><path d="M819.5 262.5h7v7h-7z"/><path d="M820.5 262.5h7v7h-7z"/><path d="M821.5 262.5h7v7h-7z"/><path d="M822.5 262.5h7v7h-7z"/><path d="M822.5 262.5h7v7h-7z"/></g>
<g fill="#0000ff" stroke="#000" stroke-width="1"><path d="M975.5 434.5h7v7h-7z"/><path d="M975.5 434.5h7v7h-7z"/><path d="M976.5 434.5h7v7h-7z"/><path d="M977.5 434.5h7v7h-7z"/><path d="M978.5 434.5h7v7h-7z"/><path d="M980.5 434.5h7v7h-7z"/><path d="M982.5 434.5h7v7h-7z"/><path d="M984.5 435.5h7v7h-7z"/><path d="M985.5 435.5h7v7h-7z"/><path d="M987.5 436.5h7v7h-7z"/><path d="M988.5 437.5h7v7h-7z"/><path d="M989.5 438.5h7v7h-7z"/><path d="M990.5 439.5h7v7h-7z"/><path d="M991.5 440.5h7v7h-7z"/><path d="M992.5 442.5h7v7h-7z"/><path d="M992.5 443.5h7v7h-7z"/><path d="M993.5 445.5h7v7h-7z"/><path d="M993.5 446.5h7v7h-7z"/><path d="M999.5 468.5h7v7h-7z"/><path d="M1002.5 481.5h7v7h-7z"/><path d="M1004.5 495.5h7v7h-7z"/><path d="M1006.5 508.5h7v7h-7z"/><path d="M1008.5 521.5h7v7h-7z"/><path d="M1011.5 548.5h7v7h-7z"/><path d="M1011.5 554.5h7v7h-7z"/><path d="M1012.5 646.5h7v7h-7z"/><path d="M1012.5 649.5h7v7h-7z"/><path d="M1011.5 652.5h7v7h-7z"/><path d="M1010.5 656.5h7v7h-7z"/><path d="M979.5 750.5h7v7h-7z"/><path d="M866.5 752.5h7v7h-7z"/><path d="M866.5 833.5h7v7h-7z"/><path d="M798.5 834.5h7v7h-7z"/><path d="M798.5 834.5h7v7h-7z"/><path d="M797.5 834.5h7v7h-7z"/><path d="M796.5 834.5h7v7h-7z"/><path d="M795.5 834.5h7v7h-7z"/><path d="M793.5 834.5h7v7h-7z"/><path d="M792.5 833.5h7v7h-7z"/><path d="M790.5 833.5h7v7h-7z"/><path d="M789.5 832.5h7v7h-7z"/><path d="M787.5 831.5h7v7h-7z"/><path d="M786.5 830.5h7v7h-7z"/><path d="M784.5 829.5h7v7h-7z"/><path d="M782.5 827.5h7v7h-7z"/><path d="M780.5 825.5h7v7h-7z"/><path d="M778.5 823.5h7v7h-7z"/><path d="M777.5 821.5h7v7h-7z"/><path d="M775.5 819.5h7v7h-7z"/><path d="M774.5 817.5h7v7h-7z"/><path d="M774.5 815.5h7v7h-7z"/><path d="M773.5 813.5h7v7h-7z"/><path d="M720.5 661.5h7v7h-7z"/><path d="M720.5 658.5h7v7h-7z"/><path d="M719.5 655.5h7v7h-7z"/><path d="M719.5 652.5h7v7h-7z"/><path d="M718.5 559.5h7v7h-7z"/><path d="M719.5 553.5h7v7h-7z"/><path d="M721.5 526.5h7v7h-7z"/><path d="M723.5 512.5h7v7h-7z"/><path d="M725.5 499.5h7v7h-7z"/><path d="M727.5 486.5h7v7h-7z"/><path d="M730.5 472.5h7v7h-7z"/><path d="M735.5 450.5h7v7h-7z"/><path d="M735.5 449.5h7v7h-7z"/><path d="M735.5 448.5h7v7h-7z"/><path d="M735.5 447.5h7v7h-7z"/><path d="M736.5 445.5h7v7h-7z"/><path d="M737.5 444.5h7v7h-7z"/><path d="M737.5 443.5h7v7h-7z"/><path d="M738.5 441.5h7v7h-7z"/><path d="M740.5 440.5h7v7h-7z"/><path d="M741.5 439.5h7v7h-7z"/><path d="M742.5 439.5h7v7h-7z"/><path d="M743.5 438.5h7v7h-7z"/><path d="M745.5 438.5h7v7h-7z"/><path d="M746.5 437.5h7v7h-7z"/><path d="M747.5 437.5h7v7h-7z"/><path d="M748.5 437.5h7v7h-7z"/><path d="M749.5 437.5h7v7h-7z"/><path d="M749.5 437.5h7v7h-7z"/></g>
<g fill="#0000ff" stroke="#000" stroke-width="1"><path d="M814.5 376.5h7v7h-7z"/><path d="M814.5 372.5h7v7h-7z"/><path d="M813.5 369.5h7v7h-7z"/><path d="M812.5 366.5h7v7h-7z"/><path d="M811.5 364.5h7v7h-7z"/><path d="M810.5 361.5h7v7h-7z"/><path d="M808.5 359.5h7v7h-7z"/><path d="M806.5 357.5h7v7h-7z"/><path d="M804.5 355.5h7v7h-7z"/><path d="M802.5 354.5h7v7h-7z"/><path d="M799.5 353.5h7v7h-7z"/><path d="M797.5 352.5h7v7h-7z"/><path d="M794.5 352.5h7v7h-7z"/><path d="M791.5 352.5h7v7h-7z"/><path d="M789.5 353.5h7v7h-7z"/><path d="M786.5 354.5h7v7h-7z"/><path d="M784.5 355.5h7v7h-7z"/><path d="M782.5 357.5h7v7h-7z"/><path d="M780.5 359.5h7v7h-7z"/><path d="M778.5 361.5h7v7h-7z"/><path d="M777.5 364.5h7v7h-7z"/><path d="M776.5 366.5h7v7h-7z"/><path d="M775.5 369.5h7v7h-7z"/><path d="M774.5 372.5h7v7h-7z"/><path d="M774.5 376.5h7v7h-7z"/><path d="M774.5 379.5h7v7h-7z"/><path d="M775.5 382.5h7v7h-7z"/><path d="M776.5 385.5h7v7h-7z"/><path d="M777.5 387.5h7v7h-7z"/><path d="M778.5 390.5h7v7h-7z"/><path d="M780.5 392.5h7v7h-7z"/><path d="M782.5 394.5h7v7h-7z"/><path d="M784.5 396.5h7v7h-7z"/><path d="M786.5 397.5h7v7h-7z"/><path d="M789.5 398.5h7v7h-7z"/><path d="M791.5 399.5h7v7h-7z"/><path d="M794.5 399.5h7v7h-7z"/><path d="M797.5 399.5h7v7h-7z"/><path d="M799.5 398.5h7v7h-7z"/><path d="M802.5 397.5h7v7h-7z"/><path d="M804.5 396.5h7v7h-7z"/><path d="M806.5 394.5h7v7h-7z"/><path d="M808.5 392.5h7v7h-7z"/><path d="M810.5 390.5h7v7h-7z"/><path d="M811.5 387.5h7v7h-7z"/><path d="M812.5 385.5h7v7h-7z"/><path d="M813.5 382.5h7v7h-7z"/><path d="M814.5 379.5h7v7h-7z"/><path d="M814.5 376.5h7v7h-7z"/></g>
<g fill="#0000ff" stroke="#000" stroke-width="1"><path d="M954.5 373.5h7v7h-7z"/><path d="M954.5 370.5h7v7h-7z"/><path d="M953.5 367.5h7v7h-7z"/><path d="M952.5 364.5h7v7h-7z"/><path d="M951.5 361.5h7v7h-7z"/><path d="M950.5 358.5h7v7h-7z"/><path d="M948.5 356.5h7v7h-7z"/><path d="M946.5 354.5h7v7h-7z"/><path d="M944.5 352.5h7v7h-7z"/><path d="M942.5 351.5h7v7h-7z"/><path d="M939.5 350.5h7v7h-7z"/><path d="M937.5 349.5h7v7h-7z"/><path d="M934.5 349.5h7v7h-7z"/><path d="M931.5 349.5h7v7h-7z"/><path d="M929.5 350.5h7v7h-7z"/><path d="M926.5 351.5h7v7h-7z"/><path d="M924.5 352.5h7v7h-7z"/><path d="M922.5 354.5h7v7h-7z"/><path d="M920.5 356.5h7v7h-7z"/><path d="M918.5 358.5h7v7h-7z"/><path d="M917.5 361.5h7v7h-7z"/><path d="M916.5 364.5h7v7h-7z"/><path d="M915.5 367.5h7v7h-7z"/><path d="M914.5 370.5h7v7h-7z"/><path d="M914.5 373.5h7v7h-7z"/><path d="M914.5 376.5h7v7h-7z"/><path d="M915.5 379.5h7v7h-7z"/><path d="M916.5 382.5h7v7h-7z"/><path d="M917.5 384.5h7v7h-7z"/><path d="M918.5 387.5h7v7h-7z"/><path d="M920.5 389.5h7v7h-7z"/><path d="M922.5 391.5h7v7h-7z"/><path d="M924.5 393.5h7v7h-7z"/><path d="M926.5 395.5h7v7h-7z"/><path d="M929.5 395.5h7v7h-7z"/><path d="M931.5 396.5h7v7h-7z"/><path d="M934.5 396.5h7v7h-7z"/><path d="M937.5 396.5h7v7h-7z"/><path d="M939.5 395.5h7v7h-7z"/><path d="M942.5 395.5h7v7h-7z"/><path d="M944.5 393.5h7v7h-7z"/><path d="M946.5 391.5h7v7h-7z"/><path d="M948.5 389.5h7v7h-7z"/><path d="M950.5 387.5h7v7h-7z"/><path d="M951.5 384.5h7v7h-7z"/><path d="M952.5 382.5h7v7h-7z"/><path d="M953.5 379.5h7v7h-7z"/><path d="M954.5 376.5h7v7h-7z"/><path d="M954.5 373.5h7v7h-7z"/></g>
<g fill="#0000ff" stroke="#000" stroke-width="1"><path d="M948.5 801.5h7v7h-7z"/><path d="M948.5 798.5h7v7h-7z"/><path d="M947.5 795.5h7v7h-7z"/><path d="M946.5 792.5h7v7h-7z"/><path d="M945.5 789.5h7v7h-7z"/><path d="M944.5 786.5h7v7h-7z"/><path d="M942.5 784.5h7v7h-7z"/><path d="M940.5 781.5h7v7h-7z"/><path d="M938.5 779.5h7v7h-7z"/><path d="M936.5 777.5h7v7h-7z"/><path d="M934.5 776.5h7v7h-7z"/><path d="M931.5 775.5h7v7h-7z"/><path d="M928.5 774.5h7v7h-7z"/><path d="M926.5 773.5h7v7h-7z"/><path d="M923.5 773.5h7v7h-7z"/><path d="M920.5 773.5h7v7h-7z"/><path d="M918.5 774.5h7v7h-7z"/><path d="M915.5 775.5h7v7h-7z"/><path d="M912.5 776.5h7v7h-7z"/><path d="M910.5 777.5h7v7h-7z"/><path d="M908.5 779.5h7v7h-7z"/><path d="M906.5 781.5h7v7h-7z"/><path d="M904.5 784.5h7v7h-7z"/><path d="M902.5 786.5h7v7h-7z"/><path d="M901.5 789.5h7v7h-7z"/><path d="M900.5 792.5h7v7h-7z"/><path d="M899.5 795.5h7v7h-7z"/><path d="M898.5 798.5h7v7h-7z"/><path d="M898.5 801.5h7v7h-7z"/><path d="M898.5 804.5h7v7h-7z"/><path d="M899.5 807.5h7v7h-7z"/><path d="M900.5 810.5h7v7h-7z"/><path d="M901.5 812.5h7v7h-7z"/><path d="M902.5 815.5h7v7h-7z"/><path d="M904.5 818.5h7v7h-7z"/><path d="M906.5 820.5h7v7h-7z"/><path d="M908.5 822.5h7v7h-7z"/><path d="M910.5 824.5h7v7h-7z"/><path d="M912.5 825.5h7v7h-7z"/><path d="M915.5 826.5h7v7h-7z"/><path d="M918.5 827.5h7v7h-7z"/><path d="M920.5 828.5h7v7h-7z"/><path d="M923.5 828.5h7v7h-7z"/><path d="M926.5 828.5h7v7h-7z"/><path d="M928.5 827.5h7v7h-7z"/><path d="M931.5 826.5h7v7h-7z"/><path d="M934.5 825.5h7v7h-7z"/><path d="M936.5 824.5h7v7h-7z"/><path d="M938.5 822.5h7v7h-7z"/><path d="M940.5 820.5h7v7h-7z"/><path d="M942.5 818.5h7v7h-7z"/><path d="M944.5 815.5h7v7h-7z"/><path d="M945.5 812.5h7v7h-7z"/><path d="M946.5 810.5h7v7h-7z"/><path d="M947.5 807.5h7v7h-7z"/><path d="M948.5 804.5h7v7h-7z"/><path d="M948.5 801.5h7v7h-7z"/></g>
</svg>
<div style="left:1639px;top:141px;width:20px;height:813px;background:#f0f0f0"></div>
<div style="left:1637px;top:141px;width:18px;height:1px;background:#b4b4b4"></div>
<div style="left:1639px;top:311px;width:15px;height:17px;background:#cdcdcd"></div>
<svg style="left:1637px;top:143px" width="18" height="18" viewBox="0 0 18 18" ><path d="M6 9.7l3.500-3.500 3.500 3.500" stroke="#404040" fill="none" stroke-width="2" /></svg>
<svg style="left:1637px;top:936px" width="18" height="18" viewBox="0 0 18 18" ><path d="M6 6.8l3.500 3.500 3.500-3.500" stroke="#404040" fill="none" stroke-width="2" /></svg>
<div style="left:41px;top:954px;width:1598px;height:1px;background:#f0f0f0"></div>
<div style="left:41px;top:953px;width:174px;height:21px;background:#f0f0f0"></div>
<div style="left:116px;top:953px;width:94px;height:1px;background:#5a5a5a"></div>
<div style="left:47px;top:953px;width:4px;height:1px;background:#5a5a5a"></div>
<div style="left:118px;top:954px;width:69px;height:17px;background:#e0e0e0;border:1px solid #c0c0c0;border-top:none;border-radius:0 0 3px 3px;box-sizing:border-box"></div>
<svg style="left:124px;top:955px" width="12" height="14" viewBox="0 0 12 14" ><path d="M1.500 1.500h6l3 3v8h-9z" stroke="#000" fill="#fff" stroke-width="1.1" /><path d="M7.500 1.500v3h3" stroke="#000" fill="none" stroke-width="0.8" /><text x="3.5" y="11" font-size="6.5" fill="#10108a" font-family="Liberation Sans" font-weight="bold">1</text></svg>
<div class="t" style="left:139.5px;top:955px;white-space:nowrap;font-size:11.5px;letter-spacing:-0.354px;color:#8b8b96">Paper 1</div>
<div style="left:52px;top:953px;width:64px;height:20px;background:#f0f0f0;border:1px solid #333;border-top:none;border-left-color:#aaa;border-radius:0 0 4px 4px;box-sizing:border-box;box-shadow:1px 1px 0 #222"></div>
<svg style="left:56px;top:955px" width="14" height="14" viewBox="0 0 14 14" ><rect x="1.5" y="1.5" width="7" height="6" fill="#fff" stroke="#222" stroke-width="1.2" /><path d="M1.500 3.500l2-2h7l-2 2" stroke="#222" fill="none" stroke-width="0.9" /><circle cx="8" cy="9" r="4" fill="#999" stroke="#111" stroke-width="1.2" /><circle cx="7" cy="8" r="1.5" fill="#eee" stroke="none" stroke-width="1" /></svg>
<div class="t" style="left:73.5px;top:955px;white-space:nowrap;font-size:12.5px;letter-spacing:-0.622px;font-weight:bold;color:#1a1a2a">Model</div>
<div style="left:214px;top:953px;width:1px;height:20px;background:#a0a0a0"></div>
<div style="left:215px;top:955px;width:1422px;height:17px;background:#f0f0f0"></div>
<div style="left:855px;top:956px;width:60px;height:15px;background:#cdcdcd"></div>
<svg style="left:215px;top:955px" width="18" height="17" viewBox="0 0 18 17" ><path d="M10 4.500l-4 4 4 4" stroke="#404040" fill="none" stroke-width="2" /></svg>
<svg style="left:1619px;top:955px" width="18" height="17" viewBox="0 0 18 17" ><path d="M9 4.500l4 4-4 4" stroke="#404040" fill="none" stroke-width="2" /></svg>
<div style="left:0px;top:975px;width:1920px;height:40px;background:#f0f0f0"></div>
<div style="left:0px;top:1014px;width:1920px;height:1px;background:#b4b4b4"></div>
<div style="left:0px;top:974px;width:1920px;height:1px;background:#fafafa"></div>
<svg style="left:13px;top:988px" width="15" height="15" viewBox="0 0 15 15" ><path d="M2 2.500l11 10M13 2.500l-11 10" stroke="#e8281c" fill="none" stroke-width="3.2" /></svg>
<svg style="left:36px;top:987px" width="16" height="15" viewBox="0 0 16 15" ><rect x="0.5" y="0.5" width="15" height="14" fill="#fff" stroke="#3a3aa0" stroke-width="1" /><rect x="0.5" y="0.5" width="15" height="3.5" fill="#3a3aa0" stroke="none" stroke-width="1" /><path d="M1 7h14M1 10h14M5.500 4v10.500M10.500 4v10.500" stroke="#3a3aa0" fill="none" stroke-width="0.9" /></svg>
<div style="left:56px;top:980px;width:1px;height:28px;background:#8c8c8c"></div>
<svg style="left:61px;top:982px" width="8" height="11" viewBox="0 0 8 11" ><path d="M2.500 6.500v-2c0-3 4.500-3 4.500 0" stroke="#10106a" fill="none" stroke-width="1.5" /><rect x="0.5" y="6.5" width="5" height="4" fill="#10106a" stroke="none" stroke-width="1" /><circle cx="3" cy="8.5" r="0.9" fill="#fff" stroke="none" stroke-width="1" /></svg>
<div class="t" style="left:72px;top:979px;white-space:nowrap;font-size:11.75px;letter-spacing:-0.290px;color:#111">Delta X</div>
<div style="left:61px;top:994px;width:53px;height:16px;background:#fff;border:1px solid #c0c0c0;border-bottom:none;box-sizing:border-box"></div>
<div class="t" style="left:65px;top:996px;white-space:nowrap;font-size:12.500px;color:#111">0 mm</div>
<svg style="left:116px;top:982px" width="8" height="11" viewBox="0 0 8 11" ><path d="M2.500 6.500v-2c0-3 4.500-3 4.500 0" stroke="#10106a" fill="none" stroke-width="1.5" /><rect x="0.5" y="6.5" width="5" height="4" fill="#10106a" stroke="none" stroke-width="1" /><circle cx="3" cy="8.5" r="0.9" fill="#fff" stroke="none" stroke-width="1" /></svg>
<div class="t" style="left:127px;top:979px;white-space:nowrap;font-size:11.75px;letter-spacing:-0.260px;color:#111">Delta Y</div>
<div style="left:116px;top:994px;width:53px;height:16px;background:#fff;border:1px solid #c0c0c0;border-bottom:none;box-sizing:border-box"></div>
<div class="t" style="left:120px;top:996px;white-space:nowrap;font-size:12.500px;color:#111">0 mm</div>
<svg style="left:171px;top:982px" width="8" height="11" viewBox="0 0 8 11" ><path d="M2.500 6.500v-2c0-3 4.500-3 4.500 0" stroke="#10106a" fill="none" stroke-width="1.5" /><rect x="0.5" y="6.5" width="5" height="4" fill="#10106a" stroke="none" stroke-width="1" /><circle cx="3" cy="8.5" r="0.9" fill="#fff" stroke="none" stroke-width="1" /></svg>
<div class="t" style="left:182px;top:979px;white-space:nowrap;font-size:11.75px;letter-spacing:0.040px;color:#111">Divide t</div>
<div style="left:171px;top:994px;width:38px;height:16px;background:#fff;border:1px solid #c0c0c0;border-bottom:none;box-sizing:border-box"></div>
<div class="t" style="left:175px;top:996px;white-space:nowrap;font-size:12.500px;color:#111">2</div>
<svg style="left:226px;top:982px" width="8" height="11" viewBox="0 0 8 11" ><path d="M2.500 6.500v-2c0-3 4.500-3 4.500 0" stroke="#10106a" fill="none" stroke-width="1.5" /><rect x="0.5" y="6.5" width="5" height="4" fill="#10106a" stroke="none" stroke-width="1" /><circle cx="3" cy="8.5" r="0.9" fill="#fff" stroke="none" stroke-width="1" /></svg>
<div class="t" style="left:237px;top:979px;white-space:nowrap;font-size:11.75px;letter-spacing:-0.263px;color:#111">Radius</div>
<div style="left:226px;top:994px;width:53px;height:16px;background:#fff;border:1px solid #c0c0c0;border-bottom:none;box-sizing:border-box"></div>
<div style="left:210px;top:995px;width:12px;height:14px;background:#f0f0f0;border:1px solid #c0c0c0;box-sizing:border-box"></div>
<svg style="left:210px;top:995px" width="12" height="14" viewBox="0 0 12 14" ><path d="M3.500 5.500l2.500-3 2.500 3zM3.500 8.500l2.500 3 2.500-3z" stroke="#222" fill="#222" stroke-width="0.4" /><path d="M1 7h10" stroke="#c0c0c0" fill="none" stroke-width="1" /></svg>
<div style="left:282px;top:980px;width:1px;height:28px;background:#8c8c8c"></div>
<div style="left:396px;top:984px;width:22px;height:22px;background:#b9d7f3;border:1px solid #6ea9e6;box-sizing:border-box"></div>
<div style="left:616px;top:984px;width:22px;height:22px;background:#b9d7f3;border:1px solid #6ea9e6;box-sizing:border-box"></div>
<svg style="left:289px;top:987px" width="16" height="16" viewBox="0 0 16 16" ><path d="M4.500 1.500v12l3-3 2 4.500 1.800-.8-2-4.200h4z" stroke="#000" fill="#fff" stroke-width="1.1" /></svg>
<svg style="left:311px;top:987px" width="16" height="16" viewBox="0 0 16 16" ><rect x="1.5" y="1.5" width="8" height="6" fill="none" stroke="#b0b0b0" stroke-width="1.2" stroke-dasharray="2 1"/><rect x="1" y="1" width="2.5" height="2.5" fill="#b0b0b0" stroke="none" stroke-width="1" /><path d="M9.500 7.500v7l2-1.500 1.200 2.500 1-.5-1.200-2.500h2.500z" stroke="#999" fill="#eee" stroke-width="0.9" /></svg>
<svg style="left:333px;top:987px" width="16" height="16" viewBox="0 0 16 16" ><rect x="2.5" y="2.5" width="11" height="11" fill="#fff" stroke="#222" stroke-width="1.4" /><path d="M5 8h9M7 6l-2 2 2 2" stroke="#222" fill="none" stroke-width="1.1" /><rect x="1" y="1" width="2.2" height="2.2" fill="#2020e0" stroke="none" stroke-width="1" /><rect x="12.5" y="1" width="2.2" height="2.2" fill="#2020e0" stroke="none" stroke-width="1" /><rect x="1" y="12.5" width="2.2" height="2.2" fill="#2020e0" stroke="none" stroke-width="1" /><rect x="12.5" y="12.5" width="2.2" height="2.2" fill="#2020e0" stroke="none" stroke-width="1" /></svg>
<svg style="left:355px;top:987px" width="16" height="16" viewBox="0 0 16 16" ><path d="M1.500 12.500l5-3.500h8l-5 3.500z" stroke="#888" fill="#e0e0e0" stroke-width="0.8" /><path d="M8 2v9" stroke="#555" fill="none" stroke-width="1" /><path d="M8 4l5 7h-5z" stroke="#30b0b0" fill="#40d0d0" stroke-width="0.6" /><path d="M8 4l-4 7h4z" stroke="#888" fill="#aaa" stroke-width="0.6" /><path d="M1.500 14h8" stroke="#e02020" fill="none" stroke-width="1" stroke-dasharray="1 1"/></svg>
<svg style="left:377px;top:987px" width="16" height="16" viewBox="0 0 16 16" ><path d="M2.500 14l3.500-10 3 6 3.500-7.500" stroke="#222" fill="none" stroke-width="1.1" /><path d="M3 2v11M1 14.500h13" stroke="#222" fill="none" stroke-width="0.8" stroke-dasharray="1 1"/><rect x="1.5" y="1" width="2.5" height="2.5" fill="#fff" stroke="#e02020" stroke-width="1" /><rect x="5" y="3" width="2.5" height="2.5" fill="#fff" stroke="#e02020" stroke-width="1" /><circle cx="12.5" cy="2.5" r="1.5" fill="#fff" stroke="#2020e0" stroke-width="1" /><circle cx="2.5" cy="14" r="1.5" fill="#fff" stroke="#2020e0" stroke-width="1" /></svg>
<svg style="left:399px;top:987px" width="16" height="16" viewBox="0 0 16 16" ><path d="M1.500 13c1-5 3-6 5.500-6s5-1 5.500-6" stroke="#000" fill="none" stroke-width="1.6" /><rect x="5" y="6" width="3" height="3" fill="#2020e0" stroke="none" stroke-width="1" /><path d="M9.500 8.500h5v5h-5z" stroke="#000" fill="#fff" stroke-width="1" /><path d="M10.500 9.500l3 3M13.500 12.500v-2.500M13.500 12.500h-2.500" stroke="#000" fill="none" stroke-width="1" /></svg>
<svg style="left:421px;top:987px" width="16" height="16" viewBox="0 0 16 16" ><path d="M2.500 4.500h4l3 2.500 4-2.500M2.500 11.500h4l3-2.500 4 2.500M2.500 4.500v7" stroke="#222" fill="none" stroke-width="1" /><path d="M6.500 4.500v7" stroke="#e02020" fill="none" stroke-width="1" stroke-dasharray="1 1"/><path d="M9.500 7v2" stroke="#e02020" fill="none" stroke-width="1" /><rect x="1.5" y="7" width="2" height="2" fill="#fff" stroke="#e02020" stroke-width="0.8" /></svg>
<svg style="left:443px;top:987px" width="16" height="16" viewBox="0 0 16 16" ><path d="M1.500 10l4-5h6l3 1.500v4l-3 1.500h-6z" stroke="#222" fill="#fff" stroke-width="1" /><path d="M1.500 10h4v-5" stroke="#e02020" fill="none" stroke-width="1" /><path d="M11.500 5v7" stroke="#e02020" fill="none" stroke-width="1" stroke-dasharray="1 1"/></svg>
<svg style="left:465px;top:987px" width="16" height="16" viewBox="0 0 16 16" ><path d="M1.500 13.500l9-10.500M9.500 1.500v13" stroke="#000" fill="none" stroke-width="1.2" /><path d="M3 5l5 3" stroke="#2020e0" fill="none" stroke-width="1.3" /><path d="M10.500 6.500l4 2-4 2z" stroke="#2020e0" fill="#2020e0" stroke-width="0.5" /><rect x="3" y="4" width="2.5" height="2.5" fill="#2020e0" stroke="none" stroke-width="1" /></svg>
<svg style="left:487px;top:987px" width="16" height="16" viewBox="0 0 16 16" ><path d="M1.500 7.500h13M4 3l8 10M12 3l-8 10" stroke="#b0b0b0" fill="none" stroke-width="1" /><rect x="6" y="6" width="4" height="4" fill="#b0b0b0" stroke="none" stroke-width="1" /></svg>
<svg style="left:509px;top:987px" width="16" height="16" viewBox="0 0 16 16" ><path d="M1.500 12.500h9M3 9c1-3 4-5 8-5.500M3 9v-2.500M3 9h2.500" stroke="#b0b0b0" fill="none" stroke-width="1.1" /><rect x="10.5" y="1.5" width="4" height="4" fill="#b0b0b0" stroke="none" stroke-width="1" /></svg>
<svg style="left:531px;top:987px" width="16" height="16" viewBox="0 0 16 16" ><path d="M3 10c0-6 9-6 10 0" stroke="#b0b0b0" fill="none" stroke-width="1.2" /><path d="M1.500 9.500l1.500 2.500 2-2.500zM11.500 9.500l1.500 2.500 2-2.500z" stroke="#b0b0b0" fill="#b0b0b0" stroke-width="0.5" /></svg>
<svg style="left:553px;top:987px" width="16" height="16" viewBox="0 0 16 16" ><path d="M3 13.500l4-11 7 5z" stroke="#b0b0b0" fill="none" stroke-width="1" /><path d="M3 13.500l8-3" stroke="#b0b0b0" fill="none" stroke-width="0.8" stroke-dasharray="1 1"/></svg>
<svg style="left:575px;top:987px" width="16" height="16" viewBox="0 0 16 16" ><path d="M3 13.500l1-10.500 10 5z" stroke="#b0b0b0" fill="none" stroke-width="1" /></svg>
<svg style="left:597px;top:987px" width="16" height="16" viewBox="0 0 16 16" ><path d="M2.500 2.500l10 10" stroke="#b0b0b0" fill="none" stroke-width="1.1" /><rect x="11" y="11" width="3.5" height="3.5" fill="#b0b0b0" stroke="none" stroke-width="1" /><rect x="1.5" y="1.5" width="2" height="2" fill="#b0b0b0" stroke="none" stroke-width="1" /></svg>
<svg style="left:619px;top:987px" width="16" height="16" viewBox="0 0 16 16" ><path d="M3.500 12.500l4.500-10 4.500 8.500" stroke="#000" fill="none" stroke-width="1.4" /><path d="M3.500 12.500l9-1.500" stroke="#e02020" fill="none" stroke-width="1.2" /><rect x="6.5" y="1" width="3" height="3" fill="#2020e0" stroke="none" stroke-width="1" /><rect x="2" y="11" width="3" height="3" fill="#2020e0" stroke="none" stroke-width="1" /><rect x="11" y="9.5" width="3" height="3" fill="#2020e0" stroke="none" stroke-width="1" /></svg>
<svg style="left:641px;top:987px" width="16" height="16" viewBox="0 0 16 16" ><path d="M3 13l4-10 5 7" stroke="#b0b0b0" fill="none" stroke-width="1" stroke-dasharray="2 1"/><rect x="10.5" y="8.5" width="3.5" height="3.5" fill="#b0b0b0" stroke="none" stroke-width="1" /><rect x="1.5" y="11.5" width="3" height="3" fill="#b0b0b0" stroke="none" stroke-width="1" /><path d="M5 9l5-4" stroke="#ddd" fill="none" stroke-width="1" /></svg>
<svg style="left:4px;top:978px" width="3" height="32" viewBox="0 0 3 32" shape-rendering="crispEdges"><rect x="0" y="0" width="2" height="2" fill="#c6c6c6" stroke="none" stroke-width="1" /><rect x="1" y="1" width="1" height="1" fill="#fff" stroke="none" stroke-width="1" /><rect x="0" y="4" width="2" height="2" fill="#c6c6c6" stroke="none" stroke-width="1" /><rect x="1" y="5" width="1" height="1" fill="#fff" stroke="none" stroke-width="1" /><rect x="0" y="8" width="2" height="2" fill="#c6c6c6" stroke="none" stroke-width="1" /><rect x="1" y="9" width="1" height="1" fill="#fff" stroke="none" stroke-width="1" /><rect x="0" y="12" width="2" height="2" fill="#c6c6c6" stroke="none" stroke-width="1" /><rect x="1" y="13" width="1" height="1" fill="#fff" stroke="none" stroke-width="1" /><rect x="0" y="16" width="2" height="2" fill="#c6c6c6" stroke="none" stroke-width="1" /><rect x="1" y="17" width="1" height="1" fill="#fff" stroke="none" stroke-width="1" /><rect x="0" y="20" width="2" height="2" fill="#c6c6c6" stroke="none" stroke-width="1" /><rect x="1" y="21" width="1" height="1" fill="#fff" stroke="none" stroke-width="1" /><rect x="0" y="24" width="2" height="2" fill="#c6c6c6" stroke="none" stroke-width="1" /><rect x="1" y="25" width="1" height="1" fill="#fff" stroke="none" stroke-width="1" /><rect x="0" y="28" width="2" height="2" fill="#c6c6c6" stroke="none" stroke-width="1" /><rect x="1" y="29" width="1" height="1" fill="#fff" stroke="none" stroke-width="1" /></svg>
<div style="left:0px;top:1014px;width:1920px;height:26px;background:#f0f0f0"></div>
<div style="left:0px;top:1015px;width:1920px;height:1px;background:#f8f8f8"></div>
<div class="t" style="left:9px;top:1019px;white-space:nowrap;font-size:12.5px;letter-spacing:-0.192px;color:#111">Join the end points of the entity</div>
<div class="t" style="left:1441px;top:1022px;white-space:nowrap;font-size:11px;letter-spacing:-0.314px;color:#111">SNAP</div>
<div class="t" style="left:1479.5px;top:1022px;white-space:nowrap;font-size:11px;letter-spacing:-0.750px;color:#111">GEO</div>
<div style="left:1473px;top:1017px;width:1px;height:21px;background:#d8d8d8"></div>
<div style="left:1504px;top:1017px;width:1px;height:21px;background:#d8d8d8"></div>
<div style="left:1803px;top:1017px;width:1px;height:21px;background:#d8d8d8"></div>
<div style="left:1859px;top:1017px;width:1px;height:21px;background:#d8d8d8"></div>
<svg style="left:1522px;top:1018px" width="14" height="20" viewBox="0 0 14 20" ><rect x="1.5" y="2.5" width="6" height="6" fill="#fff" stroke="#444" stroke-width="1.2" /><text x="1" y="18.5" font-size="11" fill="#222" font-family="Liberation Sans" textLength="8" lengthAdjust="spacingAndGlyphs">X</text></svg>
<div style="left:1532px;top:1019px;width:73px;height:18px;background:#fff;border:1.500px solid #000;box-sizing:border-box;overflow:hidden"><div class="t" style="left:1.5px;top:1px;white-space:nowrap;font-size:11.25px;letter-spacing:-0.289px;color:#111">-252,875734 m</div></div>
<svg style="left:1618px;top:1018px" width="14" height="20" viewBox="0 0 14 20" ><rect x="1.5" y="2.5" width="6" height="6" fill="#fff" stroke="#444" stroke-width="1.2" /><text x="1" y="18.5" font-size="11" fill="#222" font-family="Liberation Sans" textLength="8" lengthAdjust="spacingAndGlyphs">Y</text></svg>
<div style="left:1628px;top:1019px;width:74px;height:18px;background:#fff;border:1.500px solid #000;box-sizing:border-box;overflow:hidden"><div class="t" style="left:1.5px;top:1px;white-space:nowrap;font-size:11.25px;letter-spacing:-0.254px;color:#111">1772,548732 r</div></div>
<svg style="left:1714px;top:1018px" width="14" height="20" viewBox="0 0 14 20" ><rect x="1.5" y="2.5" width="6" height="6" fill="#fff" stroke="#444" stroke-width="1.2" /><text x="1" y="18.5" font-size="11" fill="#222" font-family="Liberation Sans" textLength="8" lengthAdjust="spacingAndGlyphs">Z</text></svg>
<div style="left:1724px;top:1019px;width:73px;height:18px;background:#fff;border:1.500px solid #000;box-sizing:border-box;overflow:hidden"><div class="t" style="left:1.5px;top:1px;white-space:nowrap;font-size:11px;letter-spacing:-0.775px;color:#9a9a9a">0 mm</div></div>
<div class="t" style="left:1808px;top:1020px;white-space:nowrap;font-size:11.25px;letter-spacing:-0.293px;color:#111">157%</div>
<div class="t" style="left:1863.5px;top:1020px;white-space:nowrap;font-size:11px;letter-spacing:-0.185px;color:#111">22:49</div>
<div style="left:1656px;top:127px;width:264px;height:848px;background:#f0f0f0"></div>
<div style="left:1659px;top:126px;width:261px;height:23px;background:linear-gradient(#bccde2,#dbe5f1);border-top:1px solid #474d58;border-left:1px solid #474d58;border-right:1px solid #474d58;box-sizing:border-box"></div>
<div class="t" style="left:1664px;top:131px;white-space:nowrap;font-size:12.25px;letter-spacing:-0.220px;color:#2a3850">Tools</div>
<svg style="left:1882px;top:129px" width="20" height="18" viewBox="0 0 20 18" ><defs><radialGradient id="pg127" cx=".35" cy=".3" r=".8"><stop offset="0" stop-color="#fff"/><stop offset=".6" stop-color="#c8c8c8"/><stop offset="1" stop-color="#777"/></radialGradient></defs><path d="M7.500 10.500l-5 5.500" stroke="#8a8a8a" fill="none" stroke-width="1.5" /><circle cx="10" cy="8" r="4.3" fill="url(#pg127)" stroke="#8a8a8a" stroke-width="0.8" /><circle cx="13.5" cy="4.8" r="3.6" fill="url(#pg127)" stroke="#8a8a8a" stroke-width="0.8" /></svg>
<div style="left:1903px;top:130px;width:15px;height:15px;background:linear-gradient(#b4b4b4,#989898);border:1px solid #8a8a8a;border-radius:2px;box-sizing:border-box"></div>
<svg style="left:1903px;top:130px" width="15" height="15" viewBox="0 0 15 15" ><path d="M4 4l7 7M11 4l-7 7" stroke="#fff" fill="none" stroke-width="1.8" /></svg>
<div style="left:1659px;top:149px;width:261px;height:32px;background:#f5f6f7"></div>
<div style="left:1659px;top:180px;width:261px;height:1px;background:#b4b4b4"></div>
<svg style="left:1665px;top:157px" width="14" height="16" viewBox="0 0 14 16" ><path d="M3.500 2.500v10.500l2.600-2.400 1.800 4 1.500-.7-1.800-3.800h3.600z" stroke="#000" fill="#fff" stroke-width="0.9" /></svg>
<div style="left:1683px;top:154px;width:22px;height:22px;background:#b9d7f3;border:1px solid #6ea9e6;box-sizing:border-box"></div>
<svg style="left:1686px;top:157px" width="16" height="16" viewBox="0 0 16 16" ><path d="M2 14c.5-4 3-8 6-12" stroke="#000" fill="none" stroke-width="1.2" /><rect x="4.5" y="5" width="3" height="3" fill="#0000ff" stroke="none" stroke-width="1" /><path d="M8 7v8l2-2 1.500 3 1.300-.6-1.500-3h2.700z" stroke="#000" fill="#fff" stroke-width="0.9" /></svg>
<svg style="left:1708px;top:157px" width="18" height="17" viewBox="0 0 18 17" ><circle cx="8" cy="8.5" r="6.5" fill="#3050d0" stroke="#223" stroke-width="0.8" /><path d="M4 4c3-2 6 0 5 2s-4 1-4 4 3 3 1 5c-3-1-5-5-2-11z" stroke="#30a030" fill="#30a030" stroke-width="0.3" /><path d="M10 9c2-1 4 0 3.500 2s-2 3-3.500 3.500z" stroke="#e8e8e8" fill="#e8e8e8" stroke-width="0.3" /><path d="M15.500 2v10c0 2-2 3-3 3" stroke="#222" fill="none" stroke-width="1.1" /></svg>
<div style="left:1729px;top:154px;width:1px;height:22px;background:#8c8c8c"></div>
<div style="left:1733px;top:153px;width:100px;height:25px;background:#fff;border:1px solid #acacac;box-sizing:border-box;box-shadow:inset 0 0 0 1px #dcdcdc"></div>
<div style="left:1815px;top:154px;width:17px;height:23px;background:linear-gradient(#f2f2f2,#e2e2e2);border-left:1px solid #c8c8c8;box-sizing:border-box"></div>
<svg style="left:1815px;top:154px" width="17" height="23" viewBox="0 0 17 23" ><path d="M5 9.8l3.500 3.500 3.500-3.500" stroke="#404040" fill="none" stroke-width="2" /></svg>
<div class="t" style="left:1736px;top:159px;white-space:nowrap;font-size:12px;letter-spacing:-0.281px;color:#111">Sketch</div>
<svg style="left:1836px;top:156px" width="18" height="18" viewBox="0 0 18 18" ><path d="M1.500 8.500l4-3.500 4 3.500v7h-8z" stroke="#700" fill="#e84040" stroke-width="0.8" /><path d="M9.500 8.500l3.500-2v6.500l-3.500 2.500z" stroke="#400" fill="#a02020" stroke-width="0.8" /><path d="M3 2l7 6M5 1.500l6 5" stroke="#666" fill="none" stroke-width="1.5" /><rect x="8.5" y="5.5" width="4.5" height="4" fill="#ddd" stroke="#444" stroke-width="0.8" /><path d="M17 12v5h-5z" fill="#333"/></svg>
<div style="left:1659px;top:181px;width:245px;height:520px;background:#dce4ee"></div>
<div style="left:1904px;top:181px;width:16px;height:520px;background:#f0f0f0"></div>
<div style="left:1904px;top:198px;width:15px;height:310px;background:#cdcdcd"></div>
<svg style="left:1903px;top:181px" width="17" height="18" viewBox="0 0 17 18" ><path d="M5 10.7l3.500-3.500 3.500 3.500" stroke="#404040" fill="none" stroke-width="2" /></svg>
<svg style="left:1903px;top:683px" width="17" height="18" viewBox="0 0 17 18" ><path d="M5 7.3l3.500 3.500 3.500-3.500" stroke="#404040" fill="none" stroke-width="2" /></svg>
<div style="left:1661px;top:183px;width:240px;height:25px;background:linear-gradient(90deg,#ffffff,#f0f3f8 50%,#e6ebf3);border-radius:4px 4px 0 0"></div>
<div class="t" style="left:1674px;top:190px;white-space:nowrap;font-size:12.5px;letter-spacing:-0.662px;font-weight:bold;color:#2a74c8">Snap Modes</div>
<svg style="left:1879px;top:185px" width="18" height="18" viewBox="0 0 18 18" ><circle cx="9" cy="9" r="7.6" fill="#fff" stroke="#c5d2e4" stroke-width="1" /><path d="M5.500 8.500l3.500-3 3.500 3M5.500 12.500l3.500-3 3.500 3" stroke="#1b5fb8" fill="none" stroke-width="1.6" /></svg>
<div style="left:1661px;top:208px;width:240px;height:100px;background:#f3f5f9;border-right:1px solid #fff;box-sizing:border-box"></div>
<div style="left:1661px;top:311px;width:240px;height:25px;background:linear-gradient(90deg,#ffffff,#f0f3f8 50%,#e6ebf3);border-radius:4px 4px 0 0"></div>
<div class="t" style="left:1674px;top:318px;white-space:nowrap;font-size:12.5px;letter-spacing:-0.724px;font-weight:bold;color:#2a74c8">Line</div>
<svg style="left:1879px;top:313px" width="18" height="18" viewBox="0 0 18 18" ><circle cx="9" cy="9" r="7.6" fill="#fff" stroke="#c5d2e4" stroke-width="1" /><path d="M5.500 8.500l3.500-3 3.500 3M5.500 12.500l3.500-3 3.500 3" stroke="#1b5fb8" fill="none" stroke-width="1.6" /></svg>
<div style="left:1661px;top:336px;width:240px;height:72px;background:#f3f5f9;border-right:1px solid #fff;box-sizing:border-box"></div>
<div style="left:1661px;top:411px;width:240px;height:25px;background:linear-gradient(90deg,#ffffff,#f0f3f8 50%,#e6ebf3);border-radius:4px 4px 0 0"></div>
<div class="t" style="left:1674px;top:418px;white-space:nowrap;font-size:12.5px;letter-spacing:-0.608px;font-weight:bold;color:#2a74c8">Circle/Ellipse</div>
<svg style="left:1879px;top:413px" width="18" height="18" viewBox="0 0 18 18" ><circle cx="9" cy="9" r="7.6" fill="#fff" stroke="#c5d2e4" stroke-width="1" /><path d="M5.500 8.500l3.500-3 3.500 3M5.500 12.500l3.500-3 3.500 3" stroke="#1b5fb8" fill="none" stroke-width="1.6" /></svg>
<div style="left:1661px;top:436px;width:240px;height:72px;background:#f3f5f9;border-right:1px solid #fff;box-sizing:border-box"></div>
<div style="left:1661px;top:512px;width:240px;height:24px;background:linear-gradient(90deg,#ffffff,#f0f3f8 50%,#e6ebf3);border-radius:4px 4px 0 0"></div>
<div class="t" style="left:1674px;top:519px;white-space:nowrap;font-size:12.25px;letter-spacing:-0.709px;font-weight:bold;color:#2a74c8">Arc</div>
<svg style="left:1879px;top:514px" width="18" height="18" viewBox="0 0 18 18" ><circle cx="9" cy="9" r="7.6" fill="#fff" stroke="#c5d2e4" stroke-width="1" /><path d="M5.500 8.500l3.500-3 3.500 3M5.500 12.500l3.500-3 3.500 3" stroke="#1b5fb8" fill="none" stroke-width="1.6" /></svg>
<div style="left:1661px;top:536px;width:240px;height:72px;background:#f3f5f9;border-right:1px solid #fff;box-sizing:border-box"></div>
<div style="left:1661px;top:612px;width:240px;height:24px;background:linear-gradient(90deg,#ffffff,#f0f3f8 50%,#e6ebf3);border-radius:4px 4px 0 0"></div>
<div class="t" style="left:1674px;top:619px;white-space:nowrap;font-size:12.5px;letter-spacing:-0.486px;font-weight:bold;color:#2a74c8">Curve</div>
<svg style="left:1879px;top:614px" width="18" height="18" viewBox="0 0 18 18" ><circle cx="9" cy="9" r="7.6" fill="#fff" stroke="#c5d2e4" stroke-width="1" /><path d="M5.500 8.500l3.500-3 3.500 3M5.500 12.500l3.500-3 3.500 3" stroke="#1b5fb8" fill="none" stroke-width="1.6" /></svg>
<div style="left:1661px;top:636px;width:240px;height:64px;background:#f3f5f9;border-right:1px solid #fff;box-sizing:border-box"></div>
<div style="left:1700px;top:216px;width:28px;height:28px;background:#ffc06e;border:1px solid #15158a;box-sizing:border-box"></div>
<div style="left:1728px;top:216px;width:28px;height:28px;background:#ffc06e;border:1px solid #15158a;box-sizing:border-box"></div>
<div style="left:1784px;top:216px;width:28px;height:28px;background:#ffc06e;border:1px solid #15158a;box-sizing:border-box"></div>
<div style="left:1672px;top:244px;width:28px;height:28px;background:#ffc06e;border:1px solid #15158a;box-sizing:border-box"></div>
<div style="left:1728px;top:272px;width:28px;height:28px;background:#ffc06e;border:1px solid #15158a;box-sizing:border-box"></div>
<svg style="left:1678px;top:222px" width="16" height="16" viewBox="0 0 16 16" ><path d="M3.500 5.500l4-2.500 5.500 5.500c1.500 2-2.500 5-5 3.500z" stroke="#222" fill="#fff" stroke-width="0.9" /><path d="M5.500 4.200l3.500 4" stroke="#222" fill="none" stroke-width="0.7" /><path d="M3.500 2.200h5" stroke="#222" fill="none" stroke-width="1" stroke-dasharray="1 1"/><text x="12.5" y="4.5" font-size="4.5" fill="#e01010" font-family="Liberation Sans" font-weight="bold">Y</text><path d="M0.500 12.500l2.500 2.500M3 12.500l-2.500 2.500" stroke="#e01010" fill="none" stroke-width="0.9" /></svg>
<svg style="left:1706px;top:222px" width="16" height="16" viewBox="0 0 16 16" ><rect x="2" y="6.7" width="2" height="2" fill="#fff" stroke="#888" stroke-width="0.8" /><path d="M6 7.700h6M9.500 5.700l2 2-2 2" stroke="#111" fill="none" stroke-width="1" /><rect x="12.2" y="6.5" width="2.2" height="2.2" fill="#fff" stroke="#e01010" stroke-width="0.9" /></svg>
<svg style="left:1734px;top:222px" width="16" height="16" viewBox="0 0 16 16" ><path d="M2.500 11l5-5 6 6" stroke="#111" fill="none" stroke-width="1" /><path d="M10.500 4l3 7" stroke="#fff" fill="none" stroke-width="1" stroke-dasharray="1 1"/><rect x="9.7" y="2.2" width="2" height="2" fill="none" stroke="#222" stroke-width="0.8" stroke-dasharray="1 .5"/><rect x="6.5" y="5" width="2.2" height="2.2" fill="#fff" stroke="#e01010" stroke-width="0.9" /></svg>
<svg style="left:1762px;top:222px" width="16" height="16" viewBox="0 0 16 16" ><path d="M2 13.500l12-11" stroke="#111" fill="none" stroke-width="1" /><rect x="4.5" y="9.5" width="2.2" height="2.2" fill="#fff" stroke="#e01010" stroke-width="0.9" /><rect x="9.5" y="5" width="2.2" height="2.2" fill="#fff" stroke="#e01010" stroke-width="0.9" /></svg>
<svg style="left:1790px;top:222px" width="16" height="16" viewBox="0 0 16 16" ><path d="M5 13.500c-5-4-1.500-11.500 4-11s7 4.500 5.500 7.500" stroke="#111" fill="none" stroke-width="1" /><rect x="7.4" y="8" width="2.2" height="2.2" fill="#fff" stroke="#e01010" stroke-width="0.9" /></svg>
<svg style="left:1818px;top:222px" width="16" height="16" viewBox="0 0 16 16" ><rect x="2.5" y="5.5" width="9" height="9" fill="none" stroke="#111" stroke-width="1" /><path d="M2.500 5.500l3.500-3.500h8.500v8.500l-3 4M11.500 5.500l3-3.500" stroke="#111" fill="none" stroke-width="0.9" /><path d="M6 2v8.500h8.500M6 10.500l-3.500 4" stroke="#666" fill="none" stroke-width="0.6" /><rect x="7" y="6.2" width="2.2" height="2.2" fill="#fff" stroke="#e01010" stroke-width="0.9" /></svg>
<svg style="left:1846px;top:222px" width="16" height="16" viewBox="0 0 16 16" ><circle cx="8" cy="8" r="6.5" fill="none" stroke="#111" stroke-width="1" /><path d="M8 2.500v11M2.500 8h11" stroke="#111" fill="none" stroke-width="0.8" stroke-dasharray="1 1"/><path d="M6.800 1l1.200 1.500 1.200-1.500" stroke="#e01010" fill="none" stroke-width="1.1" /><path d="M6.800 15l1.200-1.500 1.200 1.500" stroke="#e01010" fill="none" stroke-width="1.1" /><path d="M1 6.800l1.500 1.200-1.500 1.200" stroke="#e01010" fill="none" stroke-width="1.1" /><path d="M15 6.800l-1.500 1.200 1.500 1.200" stroke="#e01010" fill="none" stroke-width="1.1" /></svg>
<svg style="left:1678px;top:250px" width="16" height="16" viewBox="0 0 16 16" ><path d="M2 2.500l11.500 10.500M13.500 2.500l-11.500 10.500" stroke="#111" fill="none" stroke-width="1" /><rect x="6.5" y="5.5" width="2.2" height="2.2" fill="#fff" stroke="#e01010" stroke-width="0.9" /></svg>
<svg style="left:1706px;top:250px" width="16" height="16" viewBox="0 0 16 16" ><rect x="1.5" y="1.5" width="1" height="1" fill="#222" stroke="none" stroke-width="1" /><rect x="1.5" y="4.8" width="1" height="1" fill="#222" stroke="none" stroke-width="1" /><rect x="1.5" y="8.1" width="1" height="1" fill="#222" stroke="none" stroke-width="1" /><rect x="1.5" y="11.4" width="1" height="1" fill="#222" stroke="none" stroke-width="1" /><rect x="4.8" y="1.5" width="1" height="1" fill="#222" stroke="none" stroke-width="1" /><rect x="4.8" y="4.8" width="1" height="1" fill="#222" stroke="none" stroke-width="1" /><rect x="4.8" y="8.1" width="1" height="1" fill="#222" stroke="none" stroke-width="1" /><rect x="4.8" y="11.4" width="1" height="1" fill="#222" stroke="none" stroke-width="1" /><rect x="8.1" y="1.5" width="1" height="1" fill="#222" stroke="none" stroke-width="1" /><rect x="8.1" y="4.8" width="1" height="1" fill="#222" stroke="none" stroke-width="1" /><rect x="8.1" y="8.1" width="1" height="1" fill="#222" stroke="none" stroke-width="1" /><rect x="8.1" y="11.4" width="1" height="1" fill="#222" stroke="none" stroke-width="1" /><rect x="11.4" y="1.5" width="1" height="1" fill="#222" stroke="none" stroke-width="1" /><rect x="11.4" y="4.8" width="1" height="1" fill="#222" stroke="none" stroke-width="1" /><rect x="11.4" y="8.1" width="1" height="1" fill="#222" stroke="none" stroke-width="1" /><rect x="11.4" y="11.4" width="1" height="1" fill="#222" stroke="none" stroke-width="1" /><rect x="11.7" y="11.7" width="2.2" height="2.2" fill="#fff" stroke="#e01010" stroke-width="0.9" /></svg>
<svg style="left:1734px;top:250px" width="16" height="16" viewBox="0 0 16 16" ><path d="M5 4l-2.500 2.500 2.500 2.500 2.500-2.500zM7 8l4.500 4.500" stroke="#111" fill="none" stroke-width="0.9" /><path d="M10.500 4.500l3 8" stroke="#fff" fill="none" stroke-width="0.9" stroke-dasharray="1 1"/><rect x="10.3" y="2.5" width="2" height="2" fill="#fff" stroke="#888" stroke-width="0.8" /><rect x="5.5" y="6" width="2.2" height="2.2" fill="#fff" stroke="#e01010" stroke-width="0.9" /></svg>
<svg style="left:1762px;top:250px" width="16" height="16" viewBox="0 0 16 16" ><path d="M2 13.500l2-8c1-2 6.500-2 7.500 0l2 8z" stroke="#111" fill="none" stroke-width="1.1" /><rect x="6.5" y="7.5" width="2.2" height="2.2" fill="#fff" stroke="#e01010" stroke-width="0.9" /></svg>
<svg style="left:1790px;top:250px" width="16" height="16" viewBox="0 0 16 16" ><path d="M2 13c2-5 5-8 10.500-10.500M4.500 14.500v-4.500M6 8l8-3" stroke="#111" fill="none" stroke-width="1" /><rect x="6" y="6" width="2.2" height="2.2" fill="#fff" stroke="#e01010" stroke-width="0.9" /></svg>
<svg style="left:1818px;top:250px" width="16" height="16" viewBox="0 0 16 16" ><path d="M8 5v7" stroke="#111" fill="none" stroke-width="1" stroke-dasharray="1 1"/><path d="M1.500 12.500h13" stroke="#111" fill="none" stroke-width="1" /><path d="M6.500 1.500l3 3M9.500 1.500l-3 3" stroke="#e01010" fill="none" stroke-width="1.3" /><circle cx="8" cy="12.5" r="1.3" fill="#fff" stroke="#e01010" stroke-width="0.9" /></svg>
<svg style="left:1846px;top:250px" width="16" height="16" viewBox="0 0 16 16" ><path d="M8 4v8M1.500 8h13" stroke="#111" fill="none" stroke-width="1" /><path d="M6.500 1l3 3M9.500 1l-3 3" stroke="#e01010" fill="none" stroke-width="1.3" /><rect x="7" y="12.8" width="2.2" height="2.5" fill="#fff" stroke="#e01010" stroke-width="0.9" /></svg>
<svg style="left:1678px;top:278px" width="16" height="16" viewBox="0 0 16 16" ><path d="M8 1.500v13M1.500 8h13M3.500 3.500l9 9M12.500 3.500l-9 9" stroke="#666" fill="none" stroke-width="0.9" /><text x="12" y="3.5" font-size="4" fill="#e01010" font-family="Liberation Sans" font-weight="bold">M</text></svg>
<svg style="left:1706px;top:278px" width="16" height="16" viewBox="0 0 16 16" ><path d="M2.500 13.500l5.500-9.500 2 6z" stroke="#666" fill="#999" stroke-width="0.7" /><path d="M8 4l5.500 8-3 2z" stroke="#777" fill="#ddd" stroke-width="0.7" /><path d="M1.500 14h9" stroke="#555" fill="none" stroke-width="1.2" /><path d="M8 1.500v3" stroke="#444" fill="none" stroke-width="0.8" /><rect x="6.5" y="10" width="2.2" height="2.2" fill="#fff" stroke="#e01010" stroke-width="0.9" /><path d="M8.500 11l4-3" stroke="#222" fill="none" stroke-width="0.9" /></svg>
<svg style="left:1734px;top:278px" width="16" height="16" viewBox="0 0 16 16" ><path d="M4.500 9.500c-3-10 10-10 7 0" stroke="#111" fill="none" stroke-width="2.6" /><path d="M3.500 15.500c2-4 7-4 9 0" stroke="#111" fill="none" stroke-width="1" /><rect x="7" y="10.5" width="2.2" height="2.2" fill="#fff" stroke="#e01010" stroke-width="0.9" /></svg>
<svg style="left:1762px;top:278px" width="16" height="16" viewBox="0 0 16 16" ><path d="M3 15v-11" stroke="#111" fill="none" stroke-width="1" /><path d="M3 3.500h6.500v6" stroke="#111" fill="none" stroke-width="1" stroke-dasharray="1 1"/><path d="M10 10.500l4 4" stroke="#111" fill="none" stroke-width="1" /><rect x="2" y="2.5" width="2.2" height="2.2" fill="#fff" stroke="#e01010" stroke-width="0.9" /><rect x="9" y="9.5" width="2.2" height="2.2" fill="#fff" stroke="#e01010" stroke-width="0.9" /></svg>
<svg style="left:1790px;top:278px" width="16" height="16" viewBox="0 0 16 16" ><path d="M2.500 15l3-6M13.500 15l-3-6" stroke="#111" fill="none" stroke-width="1" /><path d="M6 8l2-5 2 5" stroke="#111" fill="none" stroke-width="1" stroke-dasharray="1 1"/><rect x="4.5" y="8" width="2.2" height="2.2" fill="#fff" stroke="#e01010" stroke-width="0.9" /><rect x="9.5" y="8" width="2.2" height="2.2" fill="#fff" stroke="#e01010" stroke-width="0.9" /></svg>
<svg style="left:1678px;top:350px" width="16" height="16" viewBox="0 0 16 16" ><path d="M3 13l10-10" stroke="#111" fill="none" stroke-width="1" /><rect x="2.5" y="12.5" width="2" height="2" fill="#fff" stroke="#1f1fff" stroke-width="1" /><rect x="12.5" y="2.5" width="2" height="2" fill="#fff" stroke="#1f1fff" stroke-width="1" /></svg>
<svg style="left:1706px;top:350px" width="16" height="16" viewBox="0 0 16 16" ><path d="M3 9.500l6-6 4 4-4 5.500" stroke="#111" fill="none" stroke-width="1" /><rect x="2.5" y="8.5" width="2" height="2" fill="#fff" stroke="#1f1fff" stroke-width="1" /><rect x="8.5" y="2.5" width="2" height="2" fill="#fff" stroke="#1f1fff" stroke-width="1" /><rect x="12.5" y="6.5" width="2" height="2" fill="#fff" stroke="#1f1fff" stroke-width="1" /><rect x="8.5" y="12.5" width="2" height="2" fill="#fff" stroke="#1f1fff" stroke-width="1" /></svg>
<svg style="left:1734px;top:350px" width="16" height="16" viewBox="0 0 16 16" ><circle cx="8" cy="8" r="6.2" fill="none" stroke="#111" stroke-width="1" /><path d="M5 14.500h6" stroke="#111" fill="none" stroke-width="1.6" /><rect x="7.5" y="7.5" width="2" height="2" fill="#fff" stroke="#1f1fff" stroke-width="1" /></svg>
<svg style="left:1762px;top:350px" width="16" height="16" viewBox="0 0 16 16" ><path d="M3.500 2.500l10.500 6-6.500 6z" stroke="#111" fill="none" stroke-width="1" /><rect x="2.5" y="1.5" width="2" height="2" fill="#fff" stroke="#1f1fff" stroke-width="1" /><rect x="13.5" y="7.5" width="2" height="2" fill="#fff" stroke="#1f1fff" stroke-width="1" /><rect x="6.5" y="13.5" width="2" height="2" fill="#fff" stroke="#1f1fff" stroke-width="1" /></svg>
<svg style="left:1790px;top:350px" width="16" height="16" viewBox="0 0 16 16" ><rect x="2.5" y="2.5" width="11" height="11" fill="none" stroke="#111" stroke-width="1.1" /><rect x="1.5" y="1.5" width="2" height="2" fill="#fff" stroke="#1f1fff" stroke-width="1" /><rect x="12.5" y="12.5" width="2" height="2" fill="#fff" stroke="#1f1fff" stroke-width="1" /></svg>
<svg style="left:1818px;top:350px" width="16" height="16" viewBox="0 0 16 16" ><path d="M7.500 2.500l6 4.500-5.500 7-6-4.500z" stroke="#111" fill="none" stroke-width="1" /><rect x="6.5" y="1.5" width="2" height="2" fill="#fff" stroke="#1f1fff" stroke-width="1" /><rect x="7.5" y="13.5" width="2" height="2" fill="#fff" stroke="#1f1fff" stroke-width="1" /><text x="12" y="11" font-size="4.5" fill="#1f1fff" font-family="Liberation Sans" font-weight="bold">R</text></svg>
<svg style="left:1846px;top:350px" width="16" height="16" viewBox="0 0 16 16" ><path d="M2 9l8-7M6.500 5.500l7 8" stroke="#111" fill="none" stroke-width="1" /><rect x="5.5" y="4.5" width="2" height="2" fill="#fff" stroke="#1f1fff" stroke-width="1" /><rect x="12.5" y="12.5" width="2" height="2" fill="#fff" stroke="#1f1fff" stroke-width="1" /></svg>
<svg style="left:1678px;top:378px" width="16" height="16" viewBox="0 0 16 16" ><path d="M2 9l9-7M5 14l9-7" stroke="#111" fill="none" stroke-width="1" /><rect x="5.5" y="4.5" width="2" height="2" fill="#fff" stroke="#1f1fff" stroke-width="1" /><rect x="8.5" y="9.5" width="2" height="2" fill="#fff" stroke="#1f1fff" stroke-width="1" /></svg>
<svg style="left:1706px;top:378px" width="16" height="16" viewBox="0 0 16 16" ><circle cx="7" cy="9" r="5.5" fill="none" stroke="#111" stroke-width="1" /><path d="M6 2l8 10" stroke="#111" fill="none" stroke-width="1" /><path d="M4 15h6" stroke="#111" fill="none" stroke-width="1.5" /><rect x="9.5" y="4.5" width="2" height="2" fill="#fff" stroke="#1f1fff" stroke-width="1" /></svg>
<svg style="left:1734px;top:378px" width="16" height="16" viewBox="0 0 16 16" ><path d="M2 2.500c6 0 8 6 3 12" stroke="#111" fill="none" stroke-width="1.1" /><path d="M6 5.500l8 7.500" stroke="#111" fill="none" stroke-width="1" /><path d="M2 2l4 3.500" stroke="#e01010" fill="none" stroke-width="1" /><rect x="5.5" y="4.5" width="2" height="2" fill="#fff" stroke="#e01010" stroke-width="1" /><rect x="13.5" y="12.5" width="2" height="2" fill="#fff" stroke="#1f1fff" stroke-width="1" /></svg>
<svg style="left:1762px;top:378px" width="16" height="16" viewBox="0 0 16 16" ><path d="M2 2c6 1 8 7 2 13" stroke="#111" fill="none" stroke-width="1.1" /><path d="M7 5.500l7 6" stroke="#111" fill="none" stroke-width="1" /><rect x="1" y="13.5" width="2.5" height="2" fill="#000" stroke="none" stroke-width="1" /><rect x="6.5" y="4.5" width="2" height="2" fill="#fff" stroke="#1f1fff" stroke-width="1" /><rect x="13.5" y="11.5" width="2" height="2" fill="#fff" stroke="#e01010" stroke-width="1" /></svg>
<svg style="left:1790px;top:378px" width="16" height="16" viewBox="0 0 16 16" ><path d="M2 3.500h4l8 10M4 9c3 0 5 2 5 6.500" stroke="#111" fill="none" stroke-width="1" /><rect x="5.5" y="3.5" width="2" height="2" fill="#fff" stroke="#1f1fff" stroke-width="1" /><rect x="12.5" y="11.5" width="2" height="2" fill="#fff" stroke="#1f1fff" stroke-width="1" /></svg>
<svg style="left:1818px;top:378px" width="16" height="16" viewBox="0 0 16 16" ><path d="M2 11c4-1 7-1 12-3M8 2v5c0 3-2 4-2 7" stroke="#111" fill="none" stroke-width="1" /><rect x="9.5" y="4.5" width="2" height="2" fill="#fff" stroke="#1f1fff" stroke-width="1" /><rect x="4.5" y="9.5" width="2" height="2" fill="#fff" stroke="#1f1fff" stroke-width="1" /></svg>
<svg style="left:1846px;top:378px" width="16" height="16" viewBox="0 0 16 16" ><path d="M8 1.500v13M8 14.500l-5-5M8 14.500l5-5" stroke="#111" fill="none" stroke-width="1" /><rect x="7.5" y="1.5" width="2" height="2" fill="#fff" stroke="#1f1fff" stroke-width="1" /><rect x="2.5" y="8.5" width="2" height="2" fill="#fff" stroke="#1f1fff" stroke-width="1" /><rect x="12.5" y="8.5" width="2" height="2" fill="#fff" stroke="#1f1fff" stroke-width="1" /><rect x="7.5" y="13.5" width="2" height="2" fill="#fff" stroke="#1f1fff" stroke-width="1" /></svg>
<svg style="left:1678px;top:450px" width="16" height="16" viewBox="0 0 16 16" ><circle cx="8" cy="8" r="6" fill="none" stroke="#111" stroke-width="1" /><path d="M5 14.500h6" stroke="#111" fill="none" stroke-width="1.5" /><rect x="7.5" y="7.5" width="2" height="2" fill="#fff" stroke="#1f1fff" stroke-width="1" /><rect x="13.5" y="7.5" width="2" height="2" fill="#fff" stroke="#1f1fff" stroke-width="1" /></svg>
<svg style="left:1706px;top:450px" width="16" height="16" viewBox="0 0 16 16" ><circle cx="8" cy="8" r="6" fill="none" stroke="#111" stroke-width="1" /><circle cx="8" cy="8" r="3.5" fill="none" stroke="#111" stroke-width="1" /><rect x="7.5" y="7.5" width="2" height="2" fill="#fff" stroke="#1f1fff" stroke-width="1" /><rect x="10.5" y="7.5" width="2" height="2" fill="#fff" stroke="#1f1fff" stroke-width="1" /><rect x="13.5" y="7.5" width="2" height="2" fill="#fff" stroke="#1f1fff" stroke-width="1" /></svg>
<svg style="left:1734px;top:450px" width="16" height="16" viewBox="0 0 16 16" ><circle cx="8" cy="8" r="6" fill="none" stroke="#111" stroke-width="1" /><path d="M5 14.500h6" stroke="#111" fill="none" stroke-width="1.5" /><rect x="1.5" y="7.5" width="2" height="2" fill="#fff" stroke="#1f1fff" stroke-width="1" /><rect x="13.5" y="7.5" width="2" height="2" fill="#fff" stroke="#1f1fff" stroke-width="1" /></svg>
<svg style="left:1762px;top:450px" width="16" height="16" viewBox="0 0 16 16" ><circle cx="8" cy="8" r="6" fill="none" stroke="#111" stroke-width="1" /><path d="M5 14.500h6" stroke="#111" fill="none" stroke-width="1.5" /><rect x="2.5" y="2.5" width="2" height="2" fill="#fff" stroke="#1f1fff" stroke-width="1" /><rect x="13.5" y="8.5" width="2" height="2" fill="#fff" stroke="#1f1fff" stroke-width="1" /></svg>
<svg style="left:1790px;top:450px" width="16" height="16" viewBox="0 0 16 16" ><circle cx="8" cy="8" r="6" fill="none" stroke="#111" stroke-width="1" /><path d="M1.500 2h13" stroke="#111" fill="none" stroke-width="1.1" /><path d="M8 2v12" stroke="#666" fill="none" stroke-width="0.8" stroke-dasharray="1 1"/><rect x="13.5" y="7.5" width="2" height="2" fill="#fff" stroke="#1f1fff" stroke-width="1" /><rect x="7.5" y="13.5" width="2" height="2" fill="#fff" stroke="#1f1fff" stroke-width="1" /></svg>
<svg style="left:1818px;top:450px" width="16" height="16" viewBox="0 0 16 16" ><circle cx="8" cy="8" r="6" fill="none" stroke="#111" stroke-width="1" /><rect x="2.5" y="3.5" width="2" height="2" fill="#fff" stroke="#1f1fff" stroke-width="1" /><rect x="11.5" y="3.5" width="2" height="2" fill="#fff" stroke="#1f1fff" stroke-width="1" /><rect x="7.5" y="13.5" width="2" height="2" fill="#fff" stroke="#1f1fff" stroke-width="1" /></svg>
<svg style="left:1846px;top:450px" width="16" height="16" viewBox="0 0 16 16" ><circle cx="8" cy="8" r="6" fill="none" stroke="#111" stroke-width="1" /><path d="M1.500 6l3-3M1.500 11l3 3.500M14.500 11l-3 3.500" stroke="#111" fill="none" stroke-width="1" /><rect x="7.5" y="1.5" width="2" height="2" fill="#fff" stroke="#1f1fff" stroke-width="1" /><rect x="2.5" y="8.5" width="2" height="2" fill="#fff" stroke="#1f1fff" stroke-width="1" /><rect x="12.5" y="8.5" width="2" height="2" fill="#fff" stroke="#1f1fff" stroke-width="1" /></svg>
<svg style="left:1678px;top:479px" width="16" height="16" viewBox="0 0 16 16" ><path d="M1.500 11l12-9M6 5l-3 10" stroke="#111" fill="none" stroke-width="1" /><circle cx="8" cy="10" r="2.5" fill="none" stroke="#111" stroke-width="1" /><path d="M5.500 15h5" stroke="#111" fill="none" stroke-width="1.1" /><rect x="7.5" y="6.5" width="2" height="2" fill="#fff" stroke="#1f1fff" stroke-width="1" /><rect x="7.5" y="9.5" width="2" height="2" fill="#fff" stroke="#1f1fff" stroke-width="1" /></svg>
<svg style="left:1706px;top:479px" width="16" height="16" viewBox="0 0 16 16" ><ellipse cx="8" cy="8" rx="6.5" ry="3.5" fill="none" stroke="#111" stroke-width="1" /><rect x="0.5" y="5.5" width="2" height="2" fill="#fff" stroke="#1f1fff" stroke-width="1" /><rect x="13.5" y="9.5" width="2" height="2" fill="#fff" stroke="#1f1fff" stroke-width="1" /></svg>
<svg style="left:1734px;top:479px" width="16" height="16" viewBox="0 0 16 16" ><ellipse cx="8" cy="8" rx="7.5" ry="3.8" fill="none" stroke="#111" stroke-width="1" transform="rotate(-45 8 8)"/><rect x="12.5" y="1.5" width="2" height="2" fill="#fff" stroke="#1f1fff" stroke-width="1" /><rect x="1.5" y="12.5" width="2" height="2" fill="#fff" stroke="#1f1fff" stroke-width="1" /><rect x="8.5" y="6.5" width="2" height="2" fill="#fff" stroke="#1f1fff" stroke-width="1" /><path d="M3 13l10-10" stroke="#111" fill="none" stroke-width="0.7" /></svg>
<svg style="left:1762px;top:479px" width="16" height="16" viewBox="0 0 16 16" ><ellipse cx="8" cy="10" rx="6.5" ry="3.5" fill="none" stroke="#111" stroke-width="1" /><path d="M5 14.500h6" stroke="#111" fill="none" stroke-width="1.5" /><text x="3.5" y="4.5" font-size="5.5" fill="#1f1fff" font-family="Liberation Sans" font-weight="bold">a:b</text></svg>
<svg style="left:1678px;top:550px" width="16" height="16" viewBox="0 0 16 16" ><path d="M2.500 12c-2-5 1-9.500 5.500-9.500s7 3 6 7.500" stroke="#111" fill="none" stroke-width="1" /><path d="M8 8.500h6" stroke="#111" fill="none" stroke-width="0.8" /><rect x="1.5" y="11.5" width="2" height="2" fill="#fff" stroke="#1f1fff" stroke-width="1" /><rect x="7.5" y="7.5" width="2" height="2" fill="#fff" stroke="#1f1fff" stroke-width="1" /><rect x="13.5" y="8.5" width="2" height="2" fill="#fff" stroke="#1f1fff" stroke-width="1" /></svg>
<svg style="left:1706px;top:550px" width="16" height="16" viewBox="0 0 16 16" ><path d="M2.500 12c-2-5 1-9.500 5.500-9.500s7 3 6 7.500" stroke="#111" fill="none" stroke-width="1" /><path d="M5 11c-1-3 1-5.500 3-5.500s4 1.500 3.500 4" stroke="#111" fill="none" stroke-width="1" /><rect x="1.5" y="11.5" width="2" height="2" fill="#fff" stroke="#1f1fff" stroke-width="1" /><rect x="7.5" y="8.5" width="2" height="2" fill="#fff" stroke="#1f1fff" stroke-width="1" /><rect x="10.5" y="8.5" width="2" height="2" fill="#fff" stroke="#1f1fff" stroke-width="1" /><rect x="13.5" y="8.5" width="2" height="2" fill="#fff" stroke="#1f1fff" stroke-width="1" /></svg>
<svg style="left:1734px;top:550px" width="16" height="16" viewBox="0 0 16 16" ><path d="M2 8c1 6 8 7 11 2 1-2 1-5 0-7" stroke="#111" fill="none" stroke-width="1" /><path d="M2.500 8.500l10-4" stroke="#888" fill="none" stroke-width="0.7" stroke-dasharray="1 1"/><rect x="1.5" y="7.5" width="2" height="2" fill="#fff" stroke="#1f1fff" stroke-width="1" /><rect x="12.5" y="2.5" width="2" height="2" fill="#fff" stroke="#1f1fff" stroke-width="1" /></svg>
<svg style="left:1762px;top:550px" width="16" height="16" viewBox="0 0 16 16" ><path d="M2.500 13c-2-6 3-11 8-9" stroke="#111" fill="none" stroke-width="1" /><path d="M9 2.500l5 6" stroke="#111" fill="none" stroke-width="1" /><path d="M5 10c2-2 5-3 8-2" stroke="#888" fill="none" stroke-width="0.9" /><rect x="1.5" y="12.5" width="2" height="2" fill="#fff" stroke="#1f1fff" stroke-width="1" /><rect x="7.5" y="2.5" width="2" height="2" fill="#fff" stroke="#1f1fff" stroke-width="1" /><rect x="12.5" y="8.5" width="2" height="2" fill="#fff" stroke="#1f1fff" stroke-width="1" /></svg>
<svg style="left:1790px;top:550px" width="16" height="16" viewBox="0 0 16 16" ><path d="M1.500 13.500l11-11" stroke="#111" fill="none" stroke-width="1" /><path d="M3.500 3.500l10 10" stroke="#999" fill="none" stroke-width="0.7" stroke-dasharray="1 1"/><path d="M9 13c-3-1-2-5 1.500-5.500" stroke="#999" fill="none" stroke-width="0.9" /><rect x="8.5" y="8.5" width="2" height="2" fill="#fff" stroke="#999" stroke-width="1" /><rect x="9.5" y="9.5" width="2" height="2" fill="#fff" stroke="#1f1fff" stroke-width="1" /></svg>
<svg style="left:1818px;top:550px" width="16" height="16" viewBox="0 0 16 16" ><text x="0" y="6" font-size="6.5" fill="#111" font-family="Liberation Sans" >1</text><text x="0" y="15" font-size="6.5" fill="#111" font-family="Liberation Sans" >3</text><text x="7" y="11" font-size="6.5" fill="#111" font-family="Liberation Sans" >2</text><path d="M6 2.500c6 0 8 7 1.500 11.500" stroke="#111" fill="none" stroke-width="1" /><rect x="5.5" y="2.5" width="2" height="2" fill="#fff" stroke="#1f1fff" stroke-width="1" /><rect x="12.5" y="7.5" width="2" height="2" fill="#fff" stroke="#1f1fff" stroke-width="1" /><rect x="6.5" y="13.5" width="2" height="2" fill="#fff" stroke="#1f1fff" stroke-width="1" /></svg>
<svg style="left:1846px;top:550px" width="16" height="16" viewBox="0 0 16 16" ><text x="0" y="6" font-size="6.5" fill="#111" font-family="Liberation Sans" >1</text><text x="0" y="15" font-size="6.5" fill="#111" font-family="Liberation Sans" >2</text><text x="7" y="11" font-size="6.5" fill="#111" font-family="Liberation Sans" >3</text><path d="M6 2.500c6 0 8 7 1.500 11.500" stroke="#111" fill="none" stroke-width="1" /><rect x="5.5" y="2.5" width="2" height="2" fill="#fff" stroke="#1f1fff" stroke-width="1" /><rect x="12.5" y="7.5" width="2" height="2" fill="#fff" stroke="#1f1fff" stroke-width="1" /><rect x="6.5" y="13.5" width="2" height="2" fill="#fff" stroke="#1f1fff" stroke-width="1" /></svg>
<svg style="left:1678px;top:579px" width="16" height="16" viewBox="0 0 16 16" ><path d="M3 12c-2-5 2-9 6-8.500M13 6c2 5-2 9-6.500 7.500" stroke="#111" fill="none" stroke-width="1" /><path d="M1.500 5l3 3M9 2l5 6" stroke="#111" fill="none" stroke-width="0.9" /><rect x="8.5" y="1.5" width="2" height="2" fill="#fff" stroke="#1f1fff" stroke-width="1" /><rect x="2.5" y="8.5" width="2" height="2" fill="#fff" stroke="#1f1fff" stroke-width="1" /><rect x="10.5" y="10.5" width="2" height="2" fill="#fff" stroke="#1f1fff" stroke-width="1" /></svg>
<svg style="left:1706px;top:579px" width="16" height="16" viewBox="0 0 16 16" ><path d="M1.500 11l12-9M6 5l-3 10" stroke="#111" fill="none" stroke-width="1" /><path d="M5.500 15v-3c0-2 5-2 5 0v3" stroke="#111" fill="none" stroke-width="1" /><rect x="7.5" y="5.5" width="2" height="2" fill="#fff" stroke="#1f1fff" stroke-width="1" /><rect x="7.5" y="9.5" width="2" height="2" fill="#fff" stroke="#1f1fff" stroke-width="1" /></svg>
<svg style="left:1734px;top:579px" width="16" height="16" viewBox="0 0 16 16" ><path d="M1.500 12l10-9M7 4l-3 11" stroke="#111" fill="none" stroke-width="1" /><path d="M6 15v-2.500c0-2 4.500-2 4.500 0v2.500" stroke="#111" fill="none" stroke-width="1" /><rect x="6.5" y="6.5" width="2" height="2" fill="#fff" stroke="#1f1fff" stroke-width="1" /><rect x="7.5" y="9.5" width="2" height="2" fill="#fff" stroke="#1f1fff" stroke-width="1" /></svg>
<svg style="left:1762px;top:579px" width="16" height="16" viewBox="0 0 16 16" ><path d="M2 4c-1 5 4 8 11 6 2-1 2-4 0-5" stroke="#111" fill="none" stroke-width="1" /><path d="M5.500 5.500l3 3 3-3" stroke="#111" fill="none" stroke-width="0.8" /><rect x="1.5" y="2.5" width="2" height="2" fill="#fff" stroke="#1f1fff" stroke-width="1" /><rect x="4.5" y="4.5" width="2" height="2" fill="#fff" stroke="#1f1fff" stroke-width="1" /><rect x="10.5" y="4.5" width="2" height="2" fill="#fff" stroke="#1f1fff" stroke-width="1" /><rect x="12.5" y="9.5" width="2" height="2" fill="#fff" stroke="#1f1fff" stroke-width="1" /></svg>
<svg style="left:1790px;top:579px" width="16" height="16" viewBox="0 0 16 16" ><ellipse cx="8" cy="8" rx="7.5" ry="3.8" fill="none" stroke="#111" stroke-width="1" transform="rotate(-45 8 8)"/><path d="M4 13l9-9" stroke="#999" fill="none" stroke-width="1.5" /><rect x="12.5" y="1.5" width="2" height="2" fill="#fff" stroke="#1f1fff" stroke-width="1" /><rect x="1.5" y="12.5" width="2" height="2" fill="#fff" stroke="#1f1fff" stroke-width="1" /><rect x="5.5" y="11.5" width="2" height="2" fill="#fff" stroke="#1f1fff" stroke-width="1" /><rect x="8.5" y="7.5" width="2" height="2" fill="#fff" stroke="#1f1fff" stroke-width="1" /></svg>
<svg style="left:1818px;top:579px" width="16" height="16" viewBox="0 0 16 16" ><path d="M2 13c0-6 12-6 12 0" stroke="#111" fill="none" stroke-width="1" /><text x="3.5" y="5.5" font-size="5.5" fill="#1f1fff" font-family="Liberation Sans" font-weight="bold">a:b</text></svg>
<svg style="left:1678px;top:650px" width="16" height="16" viewBox="0 0 16 16" ><path d="M2.500 14c1-7 3-9 5.500-9s4 2.500 5.500 9" stroke="#111" fill="none" stroke-width="1" /><path d="M4 2.500l4 2.500 4-2.500" stroke="#888" fill="none" stroke-width="0.7" stroke-dasharray="1 1"/><rect x="2.5" y="1.5" width="2" height="2" fill="#fff" stroke="#1f1fff" stroke-width="1" /><rect x="12.5" y="1.5" width="2" height="2" fill="#fff" stroke="#1f1fff" stroke-width="1" /><rect x="1.5" y="13.5" width="2" height="2" fill="#fff" stroke="#1f1fff" stroke-width="1" /><rect x="13.5" y="12.5" width="2" height="2" fill="#fff" stroke="#1f1fff" stroke-width="1" /></svg>
<svg style="left:1706px;top:650px" width="16" height="16" viewBox="0 0 16 16" ><path d="M2.500 14c8-2 8-5 2-6s-1-4 7-5" stroke="#111" fill="none" stroke-width="1.1" /><rect x="1.5" y="13.5" width="2" height="2" fill="#fff" stroke="#1f1fff" stroke-width="1" /><rect x="12.5" y="2.5" width="2" height="2" fill="#fff" stroke="#1f1fff" stroke-width="1" /><rect x="7.5" y="7.5" width="2" height="2" fill="#fff" stroke="#1f1fff" stroke-width="1" /></svg>
<svg style="left:1734px;top:650px" width="16" height="16" viewBox="0 0 16 16" ><path d="M2.500 14c1-6 2-10.500 5.500-10.500s4.500 4.500 5.500 10.500" stroke="#111" fill="none" stroke-width="1" /><rect x="4.5" y="2.5" width="2" height="2" fill="#fff" stroke="#1f1fff" stroke-width="1" /><rect x="10.5" y="2.5" width="2" height="2" fill="#fff" stroke="#1f1fff" stroke-width="1" /><rect x="1.5" y="13.5" width="2" height="2" fill="#fff" stroke="#1f1fff" stroke-width="1" /><rect x="13.5" y="12.5" width="2" height="2" fill="#fff" stroke="#1f1fff" stroke-width="1" /></svg>
<svg style="left:1762px;top:650px" width="16" height="16" viewBox="0 0 16 16" ><path d="M3 13c-1-6 3-10 7-10s5 4 3 7-6 2-5-1 3-2 3 0" stroke="#111" fill="none" stroke-width="1" /><rect x="1.5" y="12.5" width="2" height="2" fill="#fff" stroke="#1f1fff" stroke-width="1" /></svg>
<svg style="left:1790px;top:650px" width="16" height="16" viewBox="0 0 16 16" ><path d="M3 13c-1-6 3-10 7-10s5 4 3 7-6 2-5-1 3-2 3 0" stroke="#111" fill="none" stroke-width="1" /><rect x="1.5" y="12.5" width="2" height="2" fill="#fff" stroke="#1f1fff" stroke-width="1" /></svg>
<svg style="left:1818px;top:650px" width="16" height="16" viewBox="0 0 16 16" ><path d="M5 13c-3 0-4-3-1-4.500-2-3 1-6 4-4.500 2-2 6 0 4 3 3 1 2 6-1 6" stroke="#111" fill="none" stroke-width="1" /><rect x="5.5" y="13.5" width="2" height="2" fill="#fff" stroke="#1f1fff" stroke-width="1" /><rect x="9.5" y="13.5" width="2" height="2" fill="#fff" stroke="#1f1fff" stroke-width="1" /><rect x="2.5" y="7.5" width="2" height="2" fill="#fff" stroke="#1f1fff" stroke-width="1" /></svg>
<svg style="left:1846px;top:650px" width="16" height="16" viewBox="0 0 16 16" ><path d="M2.500 13l3-4 4 3 4-9" stroke="#111" fill="none" stroke-width="1.1" /><path d="M5 3l1 6M5 3l8 0" stroke="#555" fill="none" stroke-width="0.7" stroke-dasharray="1 1"/><rect x="1.5" y="11" width="3" height="3" fill="#fff" stroke="#222" stroke-width="1" /><rect x="4" y="2" width="2.5" height="2.5" fill="#fff" stroke="#222" stroke-width="1" /><rect x="12.5" y="2" width="2.5" height="2.5" fill="#fff" stroke="#222" stroke-width="1" /><rect x="8" y="11" width="3" height="3" fill="#fff" stroke="#222" stroke-width="1" /></svg>
<svg style="left:1678px;top:678px" width="16" height="16" viewBox="0 0 16 16" ><path d="M2 13c.5-7 3-9 6-9s5.500 2 6 9" stroke="#999" fill="none" stroke-width="1" /><path d="M3 12c1-5 3-7 5-7s4 2 5 7" stroke="#ccc" fill="none" stroke-width="0.8" /></svg>
<div style="left:1659px;top:701px;width:261px;height:1px;background:#8c8c8c"></div>
<div style="left:1659px;top:702px;width:261px;height:26px;background:#f0f0f0"></div>
<div style="left:1660px;top:701px;width:60px;height:24px;background:#fff;border:1px solid #8c8c8c;border-top:none;box-sizing:border-box"></div>
<div style="left:1721px;top:702px;width:63px;height:22px;background:#f0f0f0;border:1px solid #b8b8b8;border-top:none;box-sizing:border-box"></div>
<div style="left:1786px;top:702px;width:61px;height:22px;background:#f0f0f0;border:1px solid #b8b8b8;border-top:none;box-sizing:border-box"></div>
<div style="left:1849px;top:702px;width:63px;height:22px;background:#f0f0f0;border:1px solid #b8b8b8;border-top:none;box-sizing:border-box"></div>
<svg style="left:1663px;top:705px" width="17" height="17" viewBox="0 0 17 17" ><path d="M1.500 8.500l4-3.500 4 3.500v7h-8z" stroke="#700" fill="#e81818" stroke-width="0.8" /><path d="M9.500 8.500l3.500-2v6.500l-3.500 2.500z" stroke="#400" fill="#901010" stroke-width="0.8" /><path d="M3 2l7 6M5 1.500l6 5" stroke="#000" fill="none" stroke-width="1.5" /><rect x="8.5" y="5.5" width="4.5" height="4" fill="#fff" stroke="#000" stroke-width="0.8" /></svg>
<div class="t" style="left:1683px;top:706px;white-space:nowrap;font-size:12.5px;letter-spacing:-0.276px;color:#111">Tools</div>
<svg style="left:1726px;top:705px" width="12" height="17" viewBox="0 0 12 17" ><path d="M1.500 1.500v11l2.800-2.500 2 4.500 1.800-.8-2-4.300h3.800z" stroke="#000" fill="#1a1a8a" stroke-width="0.6" /><rect x="9" y="8" width="1.5" height="1.5" fill="#1a1a8a" stroke="none" stroke-width="1" /><rect x="9" y="11" width="1.5" height="1.5" fill="#1a1a8a" stroke="none" stroke-width="1" /></svg>
<div class="t" style="left:1742px;top:706px;white-space:nowrap;font-size:11.5px;letter-spacing:-0.419px;color:#111">Selec...</div>
<svg style="left:1789px;top:705px" width="16" height="16" viewBox="0 0 16 16" ><rect x="3.5" y="3.5" width="9" height="9" fill="#fff" stroke="#222" stroke-width="1.3" /><rect x="6" y="6" width="4" height="4" fill="#555" stroke="#222" stroke-width="0.5" /><rect x="1.5" y="1.5" width="3" height="3" fill="#222" stroke="none" stroke-width="1" /><rect x="11.5" y="1.5" width="3" height="3" fill="#222" stroke="none" stroke-width="1" /><rect x="1.5" y="11.5" width="3" height="3" fill="#222" stroke="none" stroke-width="1" /><rect x="11.5" y="11.5" width="3" height="3" fill="#222" stroke="none" stroke-width="1" /><rect x="1" y="9" width="5.5" height="5.5" fill="#fff" stroke="#222" stroke-width="0.9" /><path d="M2.500 10.500l2.500 2.500M5 13v-2M5 13h-2" stroke="#222" fill="none" stroke-width="0.8" /></svg>
<div class="t" style="left:1809px;top:706px;white-space:nowrap;font-size:12px;letter-spacing:-0.274px;color:#111">Blocks</div>
<svg style="left:1853px;top:707px" width="17" height="13" viewBox="0 0 17 13" ><rect x="0.5" y="0.5" width="16" height="11" fill="#30b0b0" stroke="#114" stroke-width="1" /><rect x="2" y="2" width="13" height="3" fill="#dff" stroke="none" stroke-width="1" /><rect x="2" y="6.5" width="2" height="1.5" fill="#113" stroke="none" stroke-width="1" /><rect x="2" y="9" width="2" height="1.5" fill="#113" stroke="none" stroke-width="1" /><rect x="5" y="6.5" width="2" height="1.5" fill="#113" stroke="none" stroke-width="1" /><rect x="5" y="9" width="2" height="1.5" fill="#113" stroke="none" stroke-width="1" /><rect x="8" y="6.5" width="2" height="1.5" fill="#113" stroke="none" stroke-width="1" /><rect x="8" y="9" width="2" height="1.5" fill="#113" stroke="none" stroke-width="1" /><rect x="11" y="6.5" width="2" height="1.5" fill="#113" stroke="none" stroke-width="1" /><rect x="11" y="9" width="2" height="1.5" fill="#113" stroke="none" stroke-width="1" /><rect x="13.5" y="6.5" width="2" height="1.5" fill="#113" stroke="none" stroke-width="1" /><rect x="13.5" y="9" width="2" height="1.5" fill="#113" stroke="none" stroke-width="1" /></svg>
<div class="t" style="left:1871px;top:706px;white-space:nowrap;font-size:11.5px;letter-spacing:-0.235px;color:#111">Varia...</div>
<div style="left:1659px;top:732px;width:261px;height:22px;background:linear-gradient(#bccde2,#dbe5f1);border-top:1px solid #474d58;border-left:1px solid #474d58;border-right:1px solid #474d58;box-sizing:border-box"></div>
<div class="t" style="left:1664px;top:736px;white-space:nowrap;font-size:12.5px;letter-spacing:-0.297px;color:#2a3850">Measurement Info</div>
<svg style="left:1882px;top:734px" width="20" height="18" viewBox="0 0 20 18" ><defs><radialGradient id="pg732" cx=".35" cy=".3" r=".8"><stop offset="0" stop-color="#fff"/><stop offset=".6" stop-color="#c8c8c8"/><stop offset="1" stop-color="#777"/></radialGradient></defs><path d="M7.500 10.500l-5 5.500" stroke="#8a8a8a" fill="none" stroke-width="1.5" /><circle cx="10" cy="8" r="4.3" fill="url(#pg732)" stroke="#8a8a8a" stroke-width="0.8" /><circle cx="13.5" cy="4.8" r="3.6" fill="url(#pg732)" stroke="#8a8a8a" stroke-width="0.8" /></svg>
<div style="left:1903px;top:735px;width:15px;height:15px;background:linear-gradient(#b4b4b4,#989898);border:1px solid #8a8a8a;border-radius:2px;box-sizing:border-box"></div>
<svg style="left:1903px;top:735px" width="15" height="15" viewBox="0 0 15 15" ><path d="M4 4l7 7M11 4l-7 7" stroke="#fff" fill="none" stroke-width="1.8" /></svg>
<div style="left:1664px;top:761px;width:23px;height:21px;background:#f5f6f7;border-top:1px solid #d0d0d0;border-left:1px solid #d0d0d0;box-sizing:border-box"></div>
<svg style="left:1669px;top:765px" width="13" height="13" viewBox="0 0 13 13" ><rect x="0.7" y="0.7" width="11.6" height="11.6" fill="#fff" stroke="#111" stroke-width="1.4" /><path d="M2.500 4h1M5 4h5.500M2.500 6.500h1M5 6.500h5.500M2.500 9h1M5 9h5.500" stroke="#111" fill="none" stroke-width="1.1" /></svg>
<svg style="left:1693px;top:766px" width="12" height="12" viewBox="0 0 12 12" ><path d="M1.500 1.500l9 9M10.500 1.500l-9 9" stroke="#333" fill="none" stroke-width="2" /></svg>
<div style="left:1663px;top:786px;width:253px;height:166px;background:#fff;border:1px solid #a8a8a8;box-sizing:border-box"></div>
<div style="left:1897px;top:787px;width:18px;height:164px;background:#f0f0f0"></div>
<svg style="left:1897px;top:789px" width="18" height="18" viewBox="0 0 18 18" ><path d="M5.5 10.7l3.500-3.500 3.500 3.500" stroke="#c0c0c0" fill="none" stroke-width="2" /></svg>
<svg style="left:1897px;top:932px" width="18" height="18" viewBox="0 0 18 18" ><path d="M5.5 7.3l3.500 3.500 3.500-3.500" stroke="#c0c0c0" fill="none" stroke-width="2" /></svg>
<div style="left:599px;top:969px;width:53px;height:49px;border:3px solid #ed1c24;box-sizing:border-box"></div>
<div style="left:628px;top:1020px;width:42px;height:19px;background:#fff;border:1px solid #767676;box-sizing:border-box;box-shadow:1px 1px 2px rgba(0,0,0,.35)"></div>
<div class="t" style="left:634.5px;top:1022px;white-space:nowrap;font-size:11.5px;letter-spacing:-0.280px;color:#555">Close</div>
</div></body></html>
